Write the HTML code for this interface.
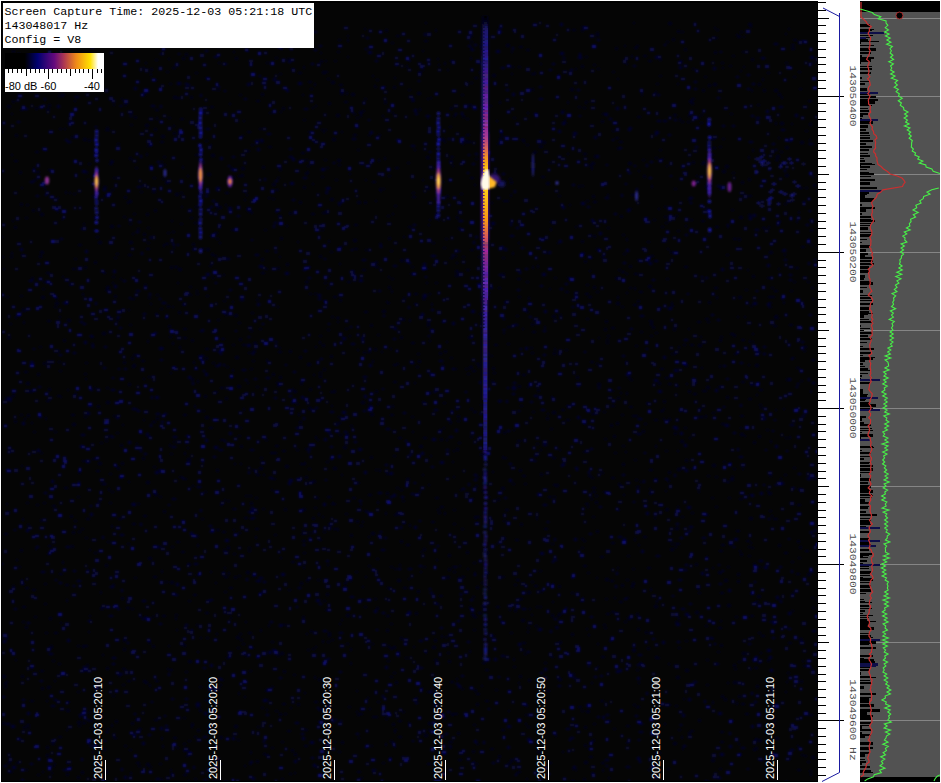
<!DOCTYPE html><html><head><meta charset="utf-8"><style>
html,body{margin:0;padding:0;width:941px;height:783px;overflow:hidden;background:#fff;position:relative}
.mono{font-family:"Liberation Mono",monospace}
.sans{font-family:"Liberation Sans",sans-serif}
</style></head><body>
<svg width="941" height="783" viewBox="0 0 941 783" style="position:absolute;left:0;top:0"><defs>
<filter id="nb" x="0" y="0" width="100%" height="100%"><feGaussianBlur stdDeviation="0.9"/></filter>
<filter id="b05" x="-50%" y="-50%" width="200%" height="200%"><feGaussianBlur stdDeviation="0.6"/></filter>
<filter id="b1" x="-50%" y="-50%" width="200%" height="200%"><feGaussianBlur stdDeviation="1"/></filter>
<filter id="b2" x="-50%" y="-50%" width="200%" height="200%"><feGaussianBlur stdDeviation="1.6"/></filter>
<linearGradient id="cbar" x1="0" x2="1" y1="0" y2="0">
<stop offset="0" stop-color="#000000"/>
<stop offset="0.2" stop-color="#000000"/>
<stop offset="0.33" stop-color="#000070"/>
<stop offset="0.5" stop-color="#650a7d"/>
<stop offset="0.6" stop-color="#b03a50"/>
<stop offset="0.72" stop-color="#f08a18"/>
<stop offset="0.86" stop-color="#ffe000"/>
<stop offset="0.94" stop-color="#ffffff"/>
<stop offset="1" stop-color="#ffffff"/>
</linearGradient>
<clipPath id="spc"><rect x="2" y="3" width="815" height="778"/></clipPath>
</defs><rect x="0" y="0" width="941" height="783" fill="#ffffff"/><rect x="1" y="1" width="817" height="781" fill="#000"/><rect x="2" y="3" width="815" height="778" fill="#050505"/><g clip-path="url(#spc)"><g filter="url(#nb)"><path fill="#04041e" d="M521 619h4v3h-4zM629 208h3v2h-3zM16 559h2v2h-2zM248 632h4v2h-4zM302 529h2v2h-2zM671 302h2v3h-2zM298 413h2v3h-2zM1 236h2v2h-2zM385 743h2v3h-2zM90 336h4v2h-4zM477 516h3v2h-3zM660 410h4v2h-4zM216 209h2v2h-2zM337 321h2v2h-2zM496 606h4v2h-4zM643 175h3v3h-3zM256 760h3v3h-3zM107 129h3v2h-3zM758 739h4v3h-4zM422 474h2v2h-2zM320 52h2v2h-2zM69 766h3v2h-3zM755 738h3v2h-3zM679 409h2v3h-2zM74 100h2v2h-2zM427 763h4v2h-4zM474 572h2v2h-2zM12 394h3v3h-3zM248 352h3v2h-3zM640 481h2v2h-2zM701 220h4v2h-4zM183 749h4v3h-4zM732 55h3v2h-3zM740 415h4v2h-4zM658 752h3v2h-3zM736 34h2v2h-2zM593 723h3v2h-3zM540 590h3v3h-3zM527 591h4v3h-4zM6 637h2v3h-2zM96 725h4v2h-4zM414 293h4v2h-4zM325 129h2v2h-2zM199 177h3v2h-3zM741 381h4v2h-4zM136 762h4v2h-4zM195 206h3v2h-3zM290 707h2v2h-2zM698 491h2v2h-2zM216 633h2v2h-2zM200 637h2v2h-2zM784 203h3v2h-3zM655 656h3v3h-3zM307 363h4v3h-4zM187 563h4v3h-4zM219 736h4v3h-4zM385 29h3v3h-3zM456 678h2v2h-2zM773 718h3v3h-3zM47 553h4v2h-4zM428 484h2v2h-2zM541 176h4v2h-4zM752 149h2v3h-2zM286 263h3v3h-3zM228 572h2v3h-2zM165 581h3v2h-3zM491 380h3v2h-3zM435 282h3v2h-3zM147 242h3v2h-3zM748 546h3v2h-3zM757 595h4v3h-4zM227 546h3v3h-3zM596 577h2v2h-2zM665 450h3v2h-3zM784 552h4v2h-4zM371 745h2v2h-2zM431 167h3v3h-3zM385 718h3v2h-3zM436 559h2v2h-2zM316 766h3v2h-3zM64 487h4v2h-4zM321 129h3v2h-3zM161 347h3v3h-3zM760 652h2v2h-2zM586 200h3v2h-3zM85 378h2v2h-2zM711 497h3v2h-3zM319 341h2v3h-2zM77 721h4v3h-4zM194 222h2v2h-2zM392 112h2v2h-2zM233 51h2v2h-2zM417 92h4v3h-4zM143 680h3v3h-3zM396 512h4v3h-4zM16 762h3v2h-3zM194 368h4v2h-4zM571 404h3v2h-3zM306 579h3v3h-3zM94 387h2v2h-2zM748 156h2v3h-2zM702 390h3v2h-3zM33 431h3v2h-3zM533 152h3v2h-3zM510 632h3v2h-3zM121 597h3v3h-3zM386 629h3v3h-3zM72 268h4v2h-4zM533 151h4v2h-4zM407 162h3v2h-3zM333 528h4v2h-4zM648 259h2v3h-2zM186 755h3v2h-3zM232 301h2v2h-2zM47 25h3v2h-3zM583 107h3v2h-3zM473 616h4v2h-4zM799 187h4v2h-4zM811 756h4v3h-4zM460 202h2v3h-2zM150 73h2v3h-2zM261 272h4v2h-4zM403 587h4v2h-4zM346 643h3v2h-3zM403 236h2v2h-2zM429 373h3v2h-3zM209 427h4v2h-4zM210 571h2v2h-2zM708 301h3v3h-3zM20 549h3v3h-3zM106 387h3v2h-3zM527 627h3v2h-3zM724 579h4v3h-4zM730 478h4v3h-4zM365 249h3v2h-3zM626 238h2v3h-2zM803 665h4v2h-4zM402 522h4v2h-4zM682 747h2v3h-2zM24 418h2v2h-2zM279 73h3v2h-3zM37 373h3v3h-3zM620 215h3v3h-3zM213 730h3v2h-3zM165 181h4v3h-4zM333 741h3v2h-3zM353 277h4v2h-4zM734 668h3v2h-3zM129 223h3v2h-3zM711 154h3v2h-3zM143 67h2v2h-2zM199 310h2v2h-2zM383 86h3v2h-3zM444 141h2v2h-2zM580 600h4v2h-4zM330 251h3v2h-3zM345 513h3v2h-3zM743 66h2v2h-2zM25 587h4v2h-4zM591 162h4v3h-4zM654 478h3v2h-3zM219 777h2v3h-2zM134 577h3v2h-3zM356 126h3v2h-3zM187 459h4v3h-4zM54 431h3v2h-3zM179 346h2v3h-2zM632 649h4v3h-4zM56 350h4v2h-4zM481 582h3v2h-3zM114 257h3v2h-3zM107 541h3v2h-3zM358 482h2v2h-2zM201 518h3v2h-3zM375 200h2v2h-2zM225 313h3v3h-3zM685 459h3v3h-3zM595 495h3v2h-3zM789 436h2v3h-2zM273 452h4v2h-4zM121 309h3v2h-3zM656 83h3v2h-3zM678 729h3v2h-3zM422 401h3v2h-3zM431 303h2v3h-2zM810 390h2v3h-2zM476 535h2v2h-2zM555 735h2v2h-2zM474 689h3v3h-3zM480 177h3v2h-3zM362 269h4v2h-4zM108 488h2v3h-2zM11 252h2v3h-2zM755 747h3v3h-3zM634 47h4v2h-4zM427 324h3v3h-3zM513 117h3v2h-3zM758 632h3v2h-3zM440 506h4v2h-4zM462 137h2v2h-2zM10 400h2v2h-2zM705 625h3v2h-3zM613 728h3v2h-3zM624 621h3v2h-3zM96 236h3v2h-3zM663 400h3v3h-3zM697 117h3v2h-3zM337 51h3v2h-3zM658 307h4v2h-4zM405 657h3v2h-3zM655 752h3v3h-3zM641 94h2v2h-2zM702 161h4v3h-4zM122 424h2v2h-2zM100 442h3v2h-3zM603 491h3v2h-3zM721 423h4v2h-4zM648 285h4v3h-4zM250 751h2v3h-2zM499 138h2v3h-2zM361 599h4v2h-4zM333 390h3v3h-3zM745 289h3v2h-3zM259 592h4v2h-4zM280 47h3v3h-3zM156 417h3v3h-3zM807 573h4v3h-4zM377 334h3v2h-3zM683 698h2v2h-2zM540 713h3v3h-3zM143 515h4v2h-4zM571 592h3v2h-3zM89 549h2v2h-2zM238 435h3v2h-3zM49 617h3v3h-3zM180 223h3v2h-3zM536 606h2v2h-2zM319 255h3v3h-3zM686 383h2v2h-2zM810 229h3v3h-3zM608 777h2v2h-2zM511 51h2v2h-2zM163 164h3v2h-3zM232 344h3v2h-3zM382 762h3v2h-3zM315 346h2v2h-2zM269 112h3v2h-3zM40 213h4v3h-4zM54 306h3v2h-3zM26 204h3v2h-3zM43 362h3v3h-3zM741 339h4v2h-4zM719 365h2v3h-2zM147 45h4v2h-4zM409 60h2v2h-2zM362 586h2v2h-2zM494 173h3v2h-3zM67 701h3v2h-3zM400 336h3v3h-3zM638 682h2v2h-2zM394 746h2v2h-2zM512 252h2v3h-2zM708 209h3v3h-3zM791 123h2v2h-2zM793 76h3v2h-3zM536 517h2v3h-2zM205 612h4v2h-4zM408 89h3v2h-3zM786 681h2v2h-2zM585 503h4v2h-4zM123 361h3v3h-3zM446 341h2v2h-2zM77 776h3v3h-3zM218 687h2v3h-2zM601 762h4v2h-4zM629 406h4v2h-4zM202 462h2v2h-2zM668 418h3v3h-3zM698 592h3v2h-3zM140 616h2v2h-2zM776 598h4v2h-4zM390 740h3v3h-3zM551 543h3v2h-3zM674 432h3v3h-3zM626 273h2v2h-2zM22 518h2v3h-2zM299 356h3v3h-3zM719 339h3v3h-3zM518 385h3v3h-3zM635 345h3v2h-3zM232 508h3v2h-3zM736 702h2v3h-2zM557 615h3v2h-3zM547 413h2v2h-2zM479 313h2v2h-2zM256 386h3v2h-3zM268 33h3v2h-3zM607 194h2v2h-2zM736 530h4v2h-4zM23 321h2v3h-2zM514 584h3v2h-3zM647 647h3v3h-3zM189 286h3v2h-3zM59 370h3v2h-3zM733 681h4v3h-4zM691 102h3v3h-3zM243 408h2v3h-2zM328 523h4v2h-4zM603 411h3v2h-3zM120 46h3v3h-3zM338 416h3v2h-3zM35 151h4v2h-4zM447 652h3v2h-3zM740 70h2v2h-2zM663 408h2v2h-2zM116 253h3v2h-3zM115 465h3v2h-3zM6 503h2v2h-2zM42 288h3v2h-3zM495 689h3v2h-3zM331 639h3v2h-3zM684 48h3v3h-3zM711 638h3v2h-3zM2 722h3v3h-3zM326 593h3v3h-3zM60 396h2v2h-2zM357 149h3v2h-3zM553 352h3v3h-3zM435 497h4v2h-4zM375 716h3v2h-3zM83 138h4v3h-4zM583 451h3v2h-3zM456 683h3v2h-3zM219 763h3v2h-3zM146 153h2v3h-2zM341 474h2v2h-2zM112 584h3v2h-3zM507 326h4v2h-4zM469 650h2v3h-2zM204 395h3v3h-3zM621 271h4v2h-4zM127 680h4v2h-4zM323 600h3v2h-3zM544 662h3v2h-3zM430 97h2v2h-2zM350 662h2v3h-2zM325 609h3v2h-3zM149 781h3v2h-3zM117 467h3v3h-3zM343 446h4v2h-4zM217 89h3v2h-3zM43 281h4v2h-4zM219 684h3v2h-3zM677 468h4v3h-4zM214 679h3v2h-3zM362 110h3v2h-3zM715 166h4v3h-4zM230 377h3v2h-3zM378 134h3v2h-3zM181 206h2v2h-2zM784 254h2v2h-2zM194 405h2v3h-2zM306 633h2v2h-2zM698 344h4v3h-4zM35 69h3v2h-3zM422 269h3v2h-3zM233 529h2v2h-2zM552 315h4v3h-4zM277 655h3v2h-3zM161 135h4v3h-4zM807 761h3v2h-3zM487 153h3v3h-3zM754 667h4v2h-4zM453 509h3v2h-3zM243 120h2v2h-2zM595 501h3v3h-3zM655 157h3v2h-3zM762 78h2v3h-2zM749 517h4v3h-4zM205 699h4v2h-4zM315 646h2v2h-2zM655 91h2v3h-2zM375 390h3v3h-3zM12 585h3v2h-3zM584 422h2v3h-2zM100 607h4v3h-4zM544 326h2v3h-2zM759 404h3v2h-3zM98 241h4v3h-4zM525 723h2v2h-2zM791 610h3v2h-3zM705 318h4v2h-4zM279 256h2v2h-2zM719 146h3v2h-3zM69 192h2v2h-2zM368 565h3v2h-3zM102 775h2v2h-2zM558 585h3v3h-3zM542 141h4v3h-4zM400 259h4v3h-4zM483 103h4v2h-4zM118 675h3v2h-3zM25 626h3v3h-3zM312 480h4v3h-4zM354 224h4v2h-4zM450 156h4v2h-4zM632 582h3v3h-3zM583 565h4v2h-4zM69 283h3v3h-3zM210 235h2v2h-2zM352 270h3v3h-3zM778 220h3v3h-3zM816 680h2v2h-2zM597 643h2v2h-2zM196 706h4v2h-4zM619 601h4v2h-4zM121 462h3v3h-3zM621 584h3v3h-3zM590 468h2v2h-2zM22 606h4v2h-4zM183 644h3v3h-3zM286 225h2v2h-2zM537 751h4v2h-4zM628 162h4v3h-4zM706 556h2v3h-2zM307 649h3v2h-3zM737 580h3v3h-3zM450 107h3v3h-3zM574 293h2v2h-2zM524 653h3v2h-3zM581 547h3v2h-3zM667 480h3v2h-3zM379 469h2v3h-2zM614 452h3v2h-3zM244 517h4v2h-4zM454 255h3v2h-3zM449 421h3v3h-3zM199 112h2v2h-2zM21 187h2v2h-2zM438 512h3v2h-3zM771 515h2v2h-2zM629 265h3v3h-3zM408 722h2v3h-2zM113 104h2v2h-2zM85 537h3v2h-3zM788 28h2v2h-2zM7 511h3v2h-3zM750 615h4v2h-4zM131 43h3v2h-3zM462 256h3v2h-3zM535 207h3v2h-3zM473 562h3v2h-3zM246 194h2v2h-2zM327 496h4v2h-4zM275 445h4v2h-4zM79 715h2v3h-2zM97 405h3v3h-3zM389 757h3v3h-3zM300 582h3v3h-3zM565 291h4v2h-4zM478 62h4v2h-4zM767 277h4v2h-4zM444 717h2v3h-2zM113 177h3v2h-3zM252 360h3v2h-3zM271 747h3v2h-3zM374 598h3v2h-3zM773 518h4v2h-4zM683 344h3v2h-3zM591 477h3v2h-3zM357 349h2v2h-2zM52 660h3v2h-3zM187 447h2v2h-2zM503 181h3v2h-3zM695 563h3v3h-3zM402 496h2v3h-2zM502 456h2v3h-2zM788 642h4v2h-4zM406 478h4v2h-4zM172 342h2v3h-2zM188 780h2v3h-2zM769 510h3v2h-3zM37 774h3v2h-3zM275 180h2v2h-2zM449 160h4v2h-4zM791 47h4v3h-4zM372 770h2v2h-2zM447 69h2v2h-2zM229 587h4v2h-4zM622 463h3v3h-3zM518 771h3v2h-3zM642 159h3v2h-3zM390 348h2v2h-2zM81 771h3v3h-3zM791 561h3v2h-3zM176 629h2v2h-2zM443 427h2v2h-2zM778 137h2v2h-2zM432 242h3v2h-3zM434 659h4v2h-4zM396 487h3v2h-3zM324 159h3v2h-3zM598 337h2v2h-2zM611 477h4v2h-4zM643 55h4v2h-4zM240 427h2v2h-2zM150 303h2v2h-2zM393 455h3v2h-3zM250 509h4v3h-4zM494 344h4v2h-4zM512 483h3v2h-3zM430 455h2v2h-2zM376 558h3v2h-3zM514 609h3v3h-3zM739 498h4v2h-4zM643 536h4v2h-4zM39 255h3v3h-3zM59 316h2v2h-2zM301 533h3v2h-3zM104 195h3v2h-3zM153 79h4v2h-4zM127 543h3v2h-3zM504 537h2v3h-2zM153 576h4v2h-4zM63 339h3v3h-3zM175 617h2v3h-2zM414 149h2v2h-2zM756 394h2v2h-2zM227 500h3v2h-3zM458 759h4v2h-4zM259 128h3v2h-3zM11 154h2v2h-2zM581 538h3v2h-3zM18 75h3v2h-3zM439 352h3v3h-3zM327 78h3v2h-3zM308 468h3v2h-3zM129 749h3v2h-3zM537 265h2v3h-2zM387 587h4v2h-4zM558 195h3v2h-3zM418 71h4v3h-4zM382 115h2v2h-2zM550 228h2v3h-2zM82 722h4v2h-4zM747 269h2v2h-2zM265 689h3v3h-3zM103 186h4v3h-4zM244 765h2v2h-2zM718 386h4v2h-4zM551 656h3v2h-3zM468 141h4v2h-4zM224 567h2v2h-2zM207 21h3v2h-3zM39 44h3v2h-3zM104 30h3v2h-3zM191 378h3v3h-3zM633 647h2v2h-2zM474 184h2v2h-2zM24 371h4v2h-4zM676 676h4v3h-4zM698 416h3v2h-3zM516 315h3v2h-3zM86 518h4v2h-4zM476 522h3v3h-3zM232 369h2v3h-2zM78 471h3v3h-3zM196 574h4v2h-4zM571 780h4v3h-4zM492 471h2v2h-2zM299 201h3v3h-3zM499 101h2v3h-2zM352 497h4v2h-4zM593 64h3v2h-3zM252 350h4v3h-4zM379 243h3v2h-3zM128 481h2v2h-2zM678 617h2v3h-2zM30 700h4v2h-4zM308 407h4v3h-4zM796 573h4v2h-4zM204 491h3v2h-3zM274 534h3v2h-3zM628 376h3v3h-3zM753 563h3v3h-3zM339 299h3v3h-3zM664 206h2v2h-2zM534 455h4v2h-4zM469 35h4v2h-4zM781 96h2v3h-2zM742 51h2v2h-2zM539 570h3v2h-3zM785 691h2v2h-2zM750 26h2v2h-2zM154 128h3v3h-3zM543 237h3v3h-3zM549 288h2v2h-2zM809 219h4v2h-4zM458 577h2v2h-2zM207 173h4v3h-4zM391 290h2v3h-2zM220 439h4v2h-4zM57 675h4v2h-4zM704 76h3v2h-3zM626 392h2v3h-2zM470 408h3v2h-3zM752 275h3v3h-3zM105 772h3v2h-3zM182 166h2v3h-2zM596 291h3v2h-3zM296 403h3v2h-3zM390 250h3v2h-3zM666 278h3v2h-3zM289 773h3v2h-3zM170 266h3v3h-3zM329 777h2v2h-2zM551 614h3v3h-3zM299 491h3v2h-3zM615 277h3v3h-3zM585 101h3v2h-3zM337 422h4v2h-4zM168 58h2v2h-2zM532 411h3v2h-3zM237 647h3v2h-3zM518 242h2v2h-2zM88 163h3v2h-3zM304 745h4v2h-4zM262 508h3v2h-3zM171 220h2v2h-2zM688 390h3v3h-3zM797 504h4v2h-4zM270 452h3v2h-3zM182 57h3v3h-3zM323 300h3v2h-3zM767 659h3v3h-3zM180 118h4v2h-4zM550 221h3v2h-3zM647 241h3v2h-3zM539 606h3v2h-3zM774 89h4v3h-4zM798 41h4v3h-4zM216 529h4v2h-4zM100 591h2v3h-2zM768 492h4v3h-4zM410 273h3v2h-3zM275 189h4v2h-4zM446 195h3v3h-3zM78 725h3v2h-3zM726 254h3v2h-3zM263 753h3v2h-3zM114 295h3v3h-3zM169 444h2v3h-2zM338 164h3v2h-3zM235 57h3v3h-3zM242 643h3v2h-3zM21 465h2v2h-2zM322 640h2v3h-2zM722 170h4v3h-4zM66 762h3v2h-3zM456 262h2v2h-2zM67 389h2v2h-2zM803 346h4v2h-4zM715 226h4v2h-4zM486 292h4v2h-4zM240 639h3v2h-3zM390 676h3v2h-3zM478 256h3v2h-3zM163 156h3v2h-3zM540 131h2v2h-2zM146 481h4v3h-4zM111 525h2v3h-2zM504 457h3v2h-3zM47 686h4v2h-4zM364 28h2v2h-2zM71 136h3v3h-3zM302 540h4v2h-4zM64 781h2v2h-2zM109 502h3v2h-3zM552 457h4v2h-4zM377 501h2v3h-2zM248 210h3v3h-3zM279 376h3v3h-3zM46 400h4v2h-4zM677 83h2v2h-2zM706 386h4v3h-4zM532 168h3v2h-3zM670 251h3v3h-3zM242 344h4v2h-4zM1 256h3v2h-3zM666 41h3v2h-3zM665 377h4v2h-4zM390 414h4v2h-4zM721 62h3v2h-3zM742 468h2v2h-2zM727 682h2v2h-2zM124 104h3v2h-3zM223 274h2v2h-2zM676 385h3v2h-3zM97 682h2v2h-2zM322 71h4v3h-4zM252 469h2v2h-2zM297 241h2v2h-2zM465 368h3v2h-3zM707 321h3v2h-3zM74 520h3v2h-3zM750 592h3v3h-3zM27 727h3v2h-3zM675 705h3v2h-3zM546 182h4v3h-4zM573 673h2v3h-2zM803 350h3v2h-3zM731 209h3v2h-3zM498 28h4v2h-4zM616 302h4v3h-4zM553 496h3v2h-3zM554 348h2v3h-2zM22 310h4v2h-4zM581 65h3v3h-3zM25 59h4v2h-4zM147 227h3v2h-3zM466 134h4v2h-4zM84 266h3v3h-3zM478 612h4v2h-4zM195 72h3v2h-3zM626 597h3v2h-3zM558 74h2v3h-2zM297 703h3v3h-3zM609 640h3v2h-3zM582 597h2v2h-2zM229 103h2v2h-2zM597 666h2v2h-2zM590 234h2v2h-2zM768 306h4v2h-4zM43 502h3v2h-3zM800 380h3v2h-3zM786 378h4v3h-4zM81 528h3v2h-3zM372 360h2v3h-2zM751 547h3v2h-3zM409 524h2v3h-2zM448 568h3v3h-3zM738 296h4v3h-4zM604 328h3v3h-3zM360 777h3v2h-3zM391 278h3v2h-3zM793 281h3v2h-3zM685 669h4v3h-4zM62 561h2v3h-2zM552 583h2v2h-2zM129 241h4v3h-4zM388 286h3v3h-3zM327 187h4v2h-4zM188 660h4v3h-4zM652 326h3v3h-3zM589 270h2v2h-2zM398 720h4v2h-4zM132 365h3v3h-3zM775 703h3v2h-3zM596 35h3v2h-3zM196 290h2v2h-2zM440 438h3v3h-3zM673 742h4v3h-4zM719 768h3v2h-3zM321 229h3v2h-3zM197 544h2v3h-2zM237 739h3v2h-3zM345 328h3v2h-3zM303 186h3v3h-3zM98 501h3v2h-3zM326 167h3v2h-3zM393 86h3v3h-3zM584 744h3v3h-3zM592 739h3v3h-3zM395 681h3v3h-3zM457 732h3v3h-3zM629 287h3v2h-3zM105 440h3v2h-3zM506 200h3v2h-3zM428 722h4v3h-4zM234 725h4v3h-4zM605 578h4v3h-4zM235 356h4v3h-4zM176 97h4v2h-4zM121 400h3v2h-3zM785 174h4v3h-4zM693 393h4v2h-4zM472 750h3v3h-3zM531 352h3v2h-3zM697 587h3v3h-3zM585 102h2v2h-2zM673 114h4v2h-4zM750 305h3v2h-3zM61 94h3v3h-3zM378 159h2v3h-2zM654 605h4v3h-4zM576 376h3v3h-3zM645 217h3v2h-3zM776 705h3v2h-3zM144 616h3v3h-3zM670 548h4v3h-4zM248 550h3v2h-3zM256 474h4v2h-4zM496 543h2v2h-2zM546 417h3v3h-3zM359 713h4v2h-4zM152 421h4v2h-4zM538 140h4v2h-4zM491 635h4v2h-4zM386 473h4v2h-4zM513 666h3v2h-3zM411 416h3v2h-3zM688 328h2v2h-2zM444 512h2v3h-2zM434 639h3v3h-3zM700 122h3v2h-3zM371 532h4v3h-4zM527 112h2v2h-2zM718 627h4v2h-4zM364 510h2v2h-2zM188 600h3v2h-3zM437 509h3v2h-3zM656 600h2v3h-2zM441 635h2v3h-2zM163 244h2v3h-2zM733 468h3v2h-3zM439 429h3v3h-3zM265 268h3v2h-3zM374 86h3v2h-3zM798 71h3v2h-3zM567 153h2v2h-2zM775 518h3v2h-3zM450 257h4v2h-4zM106 667h3v3h-3zM210 106h4v2h-4zM392 213h2v2h-2zM785 437h3v2h-3zM677 543h3v2h-3zM214 232h4v2h-4zM60 622h2v2h-2zM55 302h4v3h-4zM414 382h2v2h-2zM372 716h3v2h-3zM518 682h2v2h-2zM251 211h2v3h-2zM476 743h3v2h-3zM90 47h3v2h-3zM470 249h4v2h-4zM322 212h2v2h-2zM586 628h2v2h-2zM473 724h3v2h-3zM276 423h3v3h-3zM2 675h4v3h-4zM12 100h3v3h-3zM588 296h4v2h-4zM546 690h4v2h-4zM161 737h2v3h-2zM184 452h2v3h-2zM388 175h3v2h-3zM277 177h3v2h-3zM740 553h3v3h-3zM630 379h3v2h-3zM386 615h4v2h-4zM527 631h2v2h-2zM473 629h3v2h-3zM748 364h2v2h-2zM526 311h3v2h-3zM308 81h4v2h-4zM361 163h3v2h-3zM312 648h3v2h-3zM150 68h3v3h-3zM40 251h4v3h-4zM438 218h2v3h-2zM502 257h3v2h-3zM757 104h3v2h-3zM722 67h2v2h-2zM96 470h4v2h-4zM486 658h4v2h-4zM714 51h3v3h-3zM799 546h3v3h-3zM470 177h4v2h-4zM621 306h3v2h-3zM737 35h4v3h-4zM317 439h2v2h-2zM748 398h4v2h-4zM469 366h4v3h-4zM480 233h2v2h-2zM419 445h4v3h-4zM749 215h3v2h-3zM250 518h3v2h-3zM276 382h3v2h-3zM526 309h2v2h-2zM427 98h2v2h-2zM651 715h3v3h-3zM611 542h4v2h-4zM190 96h3v3h-3zM787 672h3v2h-3zM453 450h2v2h-2zM37 64h3v3h-3zM559 449h2v2h-2zM667 704h4v2h-4zM758 83h3v3h-3zM415 697h3v3h-3zM712 464h4v3h-4zM784 474h3v2h-3zM649 320h4v2h-4zM617 567h2v2h-2zM420 687h3v3h-3zM372 75h2v2h-2zM82 460h4v2h-4zM752 333h2v2h-2zM490 355h3v2h-3zM675 527h4v3h-4zM472 370h4v2h-4zM617 296h2v3h-2zM446 576h4v3h-4zM685 225h2v2h-2zM183 414h4v2h-4zM82 645h3v3h-3zM678 346h2v3h-2zM113 415h3v2h-3zM456 216h3v3h-3zM86 664h3v3h-3zM331 405h2v2h-2zM260 43h4v3h-4zM793 39h4v2h-4zM324 71h4v2h-4zM15 659h2v2h-2zM468 104h4v3h-4zM6 681h2v2h-2zM190 217h3v2h-3zM177 282h2v2h-2zM453 476h2v2h-2zM791 44h4v2h-4zM588 748h3v2h-3zM569 204h2v2h-2zM14 226h3v3h-3zM377 403h2v2h-2zM171 546h3v2h-3zM354 248h4v2h-4zM365 576h2v2h-2zM537 389h3v3h-3zM384 157h2v3h-2zM349 335h2v2h-2zM22 621h3v2h-3zM706 659h3v2h-3zM604 438h3v2h-3zM520 405h3v2h-3zM668 383h4v2h-4zM17 53h4v2h-4zM223 300h3v2h-3zM110 225h4v3h-4zM701 163h3v2h-3zM265 439h3v2h-3zM36 504h3v2h-3zM585 56h3v2h-3zM340 92h4v3h-4zM331 503h3v2h-3zM360 708h3v2h-3zM775 409h2v2h-2zM797 745h2v2h-2zM309 532h3v2h-3zM364 606h3v2h-3zM397 579h4v3h-4zM238 175h3v2h-3zM59 128h3v2h-3zM601 120h3v3h-3zM677 30h3v3h-3zM810 244h3v2h-3zM811 597h3v2h-3zM631 194h4v2h-4zM452 165h2v2h-2zM723 461h3v2h-3zM46 108h4v2h-4zM57 211h2v2h-2zM394 205h3v2h-3zM596 530h3v3h-3zM428 224h2v2h-2zM415 612h3v3h-3zM300 583h2v2h-2zM450 357h3v2h-3zM475 485h3v2h-3zM268 197h3v2h-3zM727 604h4v3h-4zM131 298h4v2h-4zM651 321h2v2h-2zM588 475h4v2h-4zM796 220h2v3h-2zM424 268h4v2h-4zM51 743h4v2h-4zM308 131h3v2h-3zM50 497h3v2h-3zM192 485h2v2h-2zM583 540h3v2h-3zM277 306h2v2h-2zM347 39h2v3h-2zM623 494h2v2h-2zM480 45h3v3h-3zM119 476h4v3h-4zM46 700h2v2h-2zM681 736h2v3h-2zM109 163h4v2h-4zM172 67h4v2h-4zM356 711h2v2h-2zM561 110h4v2h-4zM387 215h3v2h-3zM146 763h4v3h-4zM511 66h3v2h-3zM445 636h3v2h-3zM335 179h3v2h-3zM365 179h2v2h-2zM231 229h4v2h-4zM795 267h4v2h-4zM145 62h2v2h-2zM304 729h4v2h-4zM480 453h3v3h-3zM737 316h2v2h-2zM105 289h3v2h-3zM650 588h2v3h-2zM561 409h4v2h-4zM612 130h3v2h-3zM750 668h2v2h-2zM325 192h3v2h-3zM395 167h4v2h-4zM280 557h2v2h-2zM105 564h3v3h-3zM333 503h3v2h-3zM334 60h3v2h-3zM428 392h4v2h-4zM301 152h4v2h-4zM305 448h4v2h-4zM812 669h2v2h-2zM523 374h3v2h-3zM368 404h4v2h-4zM42 771h2v2h-2zM250 368h3v2h-3zM147 145h4v2h-4zM611 611h4v2h-4zM14 420h3v3h-3zM526 144h3v2h-3zM33 179h4v2h-4zM130 49h4v2h-4zM252 575h4v2h-4zM313 374h2v2h-2zM474 77h4v2h-4zM101 483h4v2h-4zM812 176h2v2h-2zM690 219h3v2h-3zM714 27h2v2h-2zM720 336h3v2h-3zM679 60h4v3h-4zM757 382h3v2h-3zM305 281h4v2h-4zM271 686h3v2h-3zM210 144h2v2h-2zM133 364h3v3h-3zM486 227h4v2h-4zM20 414h3v2h-3zM735 616h3v2h-3zM283 670h3v3h-3zM80 33h4v2h-4zM358 737h2v2h-2zM596 363h3v2h-3zM255 528h4v2h-4zM294 753h3v3h-3zM618 269h3v2h-3zM350 534h3v3h-3zM309 293h3v2h-3zM698 719h3v3h-3zM111 491h3v2h-3zM315 436h2v3h-2zM432 646h4v3h-4zM17 315h4v2h-4zM540 473h3v3h-3zM506 44h4v3h-4zM336 317h4v2h-4zM505 509h4v2h-4zM413 646h2v2h-2zM590 498h3v2h-3zM530 347h3v2h-3zM425 22h2v2h-2zM435 29h2v3h-2zM797 540h3v3h-3zM89 615h2v2h-2zM376 607h3v3h-3zM148 297h3v2h-3zM660 368h4v2h-4zM439 595h4v2h-4zM92 458h4v2h-4zM655 332h3v2h-3zM371 643h3v2h-3zM402 318h3v2h-3zM206 637h3v2h-3zM532 266h2v3h-2zM691 512h3v2h-3zM88 742h2v3h-2zM767 72h3v2h-3zM45 417h2v3h-2zM496 120h2v2h-2zM260 140h4v3h-4zM634 459h3v2h-3zM165 243h4v2h-4zM536 443h3v2h-3zM704 390h3v2h-3zM535 625h3v2h-3zM145 124h4v3h-4zM453 523h3v2h-3zM300 463h4v2h-4zM109 473h3v2h-3zM268 146h4v2h-4zM323 531h3v2h-3zM601 472h3v2h-3zM143 233h3v3h-3zM508 690h3v2h-3zM649 492h3v3h-3zM255 536h2v3h-2zM74 258h3v2h-3zM130 772h2v3h-2zM245 621h2v2h-2zM222 531h4v2h-4zM21 675h3v3h-3zM393 430h3v3h-3zM40 670h4v2h-4zM356 690h2v2h-2zM501 729h4v2h-4zM729 544h3v2h-3zM394 514h4v2h-4zM634 415h4v2h-4zM772 723h4v2h-4zM406 544h4v2h-4zM61 218h3v2h-3zM466 551h3v3h-3zM106 286h4v3h-4zM720 620h2v2h-2zM282 450h4v2h-4zM752 341h2v2h-2zM516 579h4v2h-4zM671 543h3v2h-3zM183 774h4v2h-4zM313 141h4v2h-4zM810 773h2v3h-2zM700 461h4v2h-4zM552 601h2v2h-2zM250 502h3v3h-3zM305 483h3v2h-3zM275 211h3v2h-3zM626 725h4v2h-4zM774 316h4v3h-4zM769 302h3v2h-3zM392 723h3v3h-3zM374 85h2v3h-2zM154 719h4v2h-4zM193 361h2v3h-2zM303 566h2v3h-2zM112 282h2v2h-2zM293 390h4v3h-4zM558 353h3v2h-3zM341 619h2v2h-2zM162 745h2v3h-2zM533 319h2v2h-2zM597 383h4v3h-4zM397 651h3v3h-3zM750 542h2v2h-2zM732 720h2v2h-2zM755 364h4v3h-4zM116 432h3v2h-3zM321 701h2v3h-2zM152 191h4v2h-4zM369 708h2v2h-2zM251 312h3v2h-3zM129 324h3v2h-3zM393 364h4v2h-4zM265 754h4v2h-4zM744 435h2v2h-2zM143 419h2v2h-2zM303 66h2v3h-2zM601 256h4v2h-4zM368 134h3v2h-3zM4 682h3v3h-3zM606 613h4v2h-4zM344 582h3v3h-3zM46 754h3v3h-3zM471 613h4v3h-4zM501 576h4v2h-4zM58 89h4v3h-4zM571 633h3v3h-3zM770 440h2v3h-2zM414 303h2v2h-2zM619 141h4v2h-4zM390 647h3v3h-3zM349 173h2v2h-2zM720 731h4v2h-4zM153 466h3v2h-3zM805 130h3v2h-3zM664 723h2v2h-2zM721 695h3v3h-3zM685 640h3v2h-3zM807 281h3v2h-3zM50 647h3v2h-3zM159 763h3v2h-3zM497 498h3v3h-3zM46 746h3v3h-3zM741 703h4v2h-4zM483 654h2v2h-2zM443 247h3v2h-3zM110 160h4v3h-4zM604 627h3v2h-3zM197 702h2v2h-2zM792 592h2v3h-2zM758 435h3v3h-3zM692 68h3v2h-3zM241 174h3v3h-3zM278 351h4v2h-4zM800 141h4v3h-4zM87 569h2v3h-2zM88 631h2v2h-2zM607 227h3v2h-3zM460 193h3v2h-3zM523 649h2v2h-2zM479 71h2v3h-2zM298 72h4v2h-4zM312 517h3v3h-3zM649 488h2v2h-2zM442 364h2v2h-2zM257 726h3v2h-3zM748 23h4v3h-4zM375 469h3v2h-3zM135 167h3v2h-3zM98 462h4v3h-4zM277 384h3v3h-3zM62 276h2v2h-2zM327 329h3v2h-3zM757 351h4v2h-4zM554 277h3v2h-3zM423 437h4v2h-4zM327 641h3v2h-3zM734 353h4v2h-4zM796 367h4v2h-4zM388 237h3v3h-3zM353 239h4v3h-4zM12 220h2v2h-2zM211 154h4v3h-4zM426 156h4v3h-4zM262 166h3v3h-3zM360 114h2v3h-2zM531 323h3v3h-3zM108 435h4v2h-4zM238 692h2v3h-2zM195 154h4v2h-4zM330 198h4v3h-4zM810 571h4v2h-4zM583 153h4v2h-4zM65 191h2v3h-2zM809 123h3v3h-3zM607 335h3v2h-3zM694 401h3v2h-3zM321 176h3v2h-3zM194 736h3v2h-3zM623 253h3v2h-3zM343 447h4v2h-4zM163 510h3v3h-3zM593 235h3v3h-3zM572 29h4v2h-4zM473 761h2v3h-2zM622 234h3v2h-3zM123 648h3v3h-3zM626 63h2v2h-2zM611 390h3v2h-3zM738 743h2v2h-2zM592 487h4v2h-4zM531 73h3v2h-3zM93 89h2v2h-2zM809 770h3v2h-3zM239 338h3v3h-3zM557 242h2v2h-2zM540 712h3v2h-3zM357 771h4v2h-4zM22 308h2v3h-2zM230 617h2v2h-2zM266 359h2v3h-2zM129 111h4v3h-4zM261 93h3v3h-3zM205 348h4v2h-4zM128 254h4v2h-4zM578 706h4v2h-4zM146 213h3v3h-3zM712 147h4v2h-4zM370 456h3v3h-3zM215 391h3v2h-3zM88 102h3v2h-3zM224 591h3v2h-3zM282 624h4v2h-4zM400 489h3v2h-3zM280 237h3v3h-3zM170 581h4v3h-4zM192 26h3v2h-3zM493 372h3v2h-3zM689 437h2v2h-2zM706 684h3v2h-3zM380 190h2v2h-2zM476 363h4v2h-4zM617 147h3v3h-3zM411 100h4v2h-4zM98 713h3v2h-3zM513 429h2v2h-2zM594 155h3v3h-3zM681 516h3v2h-3zM668 22h4v3h-4zM26 724h4v2h-4zM691 98h4v2h-4zM188 740h3v2h-3zM320 399h2v2h-2zM239 94h3v2h-3zM32 209h3v3h-3zM86 171h2v3h-2zM738 695h3v3h-3zM816 599h2v2h-2zM31 667h2v3h-2zM217 319h3v2h-3zM624 45h2v2h-2zM503 520h3v2h-3zM667 768h3v2h-3zM444 62h2v3h-2zM337 528h2v3h-2zM199 686h3v2h-3zM183 328h4v2h-4zM805 550h4v2h-4zM327 287h3v2h-3zM633 304h4v2h-4zM367 697h2v2h-2zM339 623h2v2h-2zM666 508h3v2h-3zM212 277h2v2h-2zM637 259h3v2h-3zM429 293h2v2h-2zM519 675h3v3h-3zM402 500h3v2h-3zM769 475h3v2h-3zM84 33h4v2h-4zM448 218h2v2h-2zM671 353h2v2h-2zM211 253h3v3h-3zM470 436h3v2h-3zM266 709h2v2h-2zM602 113h3v2h-3zM701 367h2v2h-2zM760 407h3v2h-3zM688 114h3v3h-3zM87 179h3v2h-3zM206 295h3v2h-3zM15 316h2v3h-2zM659 75h3v2h-3zM508 710h2v2h-2zM168 645h2v2h-2zM696 175h2v2h-2zM304 692h2v2h-2zM31 422h2v2h-2zM754 739h4v2h-4zM357 714h3v2h-3zM197 535h2v3h-2zM539 145h4v3h-4zM115 720h3v3h-3zM42 148h2v2h-2zM180 192h3v2h-3zM459 565h2v2h-2zM247 50h2v2h-2zM328 635h3v2h-3zM310 630h3v3h-3zM626 292h2v2h-2zM462 115h3v3h-3zM192 243h3v3h-3zM625 451h2v2h-2zM302 616h3v3h-3zM123 639h3v3h-3zM1 131h2v2h-2zM173 247h2v2h-2zM315 105h2v2h-2zM697 321h4v2h-4zM143 378h2v2h-2zM173 125h2v2h-2zM239 43h3v2h-3zM294 772h2v2h-2zM89 720h4v2h-4zM162 178h3v2h-3zM393 381h4v2h-4zM700 114h3v2h-3zM19 171h3v3h-3zM480 404h3v2h-3zM517 440h4v2h-4zM230 167h3v2h-3zM774 290h4v2h-4zM626 742h3v2h-3zM503 431h3v3h-3zM326 461h3v2h-3zM247 131h4v2h-4zM91 343h3v2h-3zM307 171h2v3h-2zM103 272h3v2h-3zM241 167h4v3h-4zM128 309h2v2h-2zM781 298h2v2h-2zM525 704h3v3h-3zM540 192h3v2h-3zM483 159h3v2h-3zM435 662h3v2h-3zM428 729h3v2h-3zM739 550h2v2h-2zM720 592h4v2h-4zM173 96h4v3h-4zM626 579h3v2h-3zM421 551h2v2h-2zM654 419h4v2h-4zM766 429h3v2h-3zM266 62h3v2h-3zM726 396h3v3h-3zM398 437h4v2h-4zM659 59h3v2h-3zM120 444h3v3h-3zM58 95h3v2h-3zM259 328h3v2h-3zM36 171h4v2h-4zM570 88h4v3h-4zM540 63h2v2h-2zM645 631h3v3h-3zM622 541h2v2h-2zM798 488h4v3h-4zM284 713h3v2h-3zM45 632h3v2h-3zM124 745h3v2h-3zM105 770h3v2h-3zM94 217h3v3h-3zM152 616h2v2h-2zM65 302h3v3h-3zM305 172h3v3h-3zM52 505h4v2h-4zM458 442h3v2h-3zM639 662h3v3h-3zM665 222h3v2h-3zM287 730h4v2h-4zM450 746h2v3h-2zM6 296h3v2h-3zM233 553h3v2h-3zM35 107h3v3h-3zM58 361h3v2h-3zM138 728h4v2h-4zM111 724h2v3h-2zM633 704h3v2h-3zM41 687h3v3h-3zM333 296h4v2h-4zM508 762h3v3h-3zM737 573h3v3h-3zM55 297h3v3h-3zM399 564h2v2h-2zM500 620h2v3h-2zM498 401h2v2h-2zM593 286h3v3h-3zM377 701h3v2h-3zM20 203h3v3h-3zM421 446h2v2h-2zM438 64h2v2h-2zM465 140h3v3h-3zM741 181h3v3h-3zM177 747h2v2h-2zM633 22h2v2h-2zM360 503h2v3h-2zM615 137h4v2h-4zM466 118h3v2h-3zM400 540h3v3h-3zM172 306h2v2h-2zM20 295h3v2h-3zM740 427h2v2h-2zM225 397h3v3h-3zM581 185h3v2h-3zM201 248h4v2h-4zM217 206h3v2h-3zM135 719h4v2h-4zM749 494h2v2h-2zM715 506h3v2h-3zM763 89h3v3h-3zM391 42h3v2h-3zM780 478h2v2h-2zM593 201h4v2h-4zM748 195h4v2h-4zM199 709h3v3h-3zM264 229h3v2h-3zM376 79h3v2h-3zM218 225h3v3h-3zM272 183h4v3h-4zM812 607h3v2h-3zM601 656h4v2h-4zM133 213h3v2h-3zM260 457h3v2h-3zM711 759h4v3h-4zM565 349h3v2h-3zM416 366h3v2h-3zM175 193h4v3h-4zM452 566h4v2h-4zM66 773h3v3h-3zM9 771h4v2h-4zM340 89h2v3h-2zM749 340h2v3h-2zM610 424h3v3h-3zM654 517h2v2h-2zM396 35h4v2h-4zM558 678h4v3h-4zM149 766h3v2h-3zM48 388h3v3h-3zM90 727h3v2h-3zM173 441h3v2h-3zM479 121h4v2h-4zM247 150h3v2h-3zM638 544h2v2h-2zM129 200h3v3h-3zM677 450h2v2h-2zM221 679h3v2h-3zM597 68h3v2h-3zM581 240h3v3h-3zM29 89h4v3h-4zM675 543h3v2h-3zM730 333h4v2h-4zM118 34h3v2h-3zM87 488h3v2h-3zM769 251h4v3h-4zM250 330h3v2h-3zM212 781h3v2h-3zM586 284h3v2h-3zM450 60h3v2h-3zM92 751h2v2h-2zM310 88h3v2h-3zM149 165h4v2h-4zM707 157h2v2h-2zM429 340h2v2h-2zM353 134h4v2h-4zM700 416h4v2h-4zM34 616h3v2h-3zM178 268h4v3h-4zM476 476h3v2h-3zM64 128h2v2h-2zM122 668h4v2h-4zM77 496h3v2h-3zM625 361h2v3h-2zM509 178h3v2h-3zM596 248h4v3h-4zM724 698h3v3h-3zM450 681h4v2h-4zM284 508h3v3h-3zM360 525h3v2h-3zM7 67h4v2h-4zM457 415h3v3h-3zM398 736h4v2h-4zM238 322h3v2h-3zM332 502h2v2h-2zM205 416h4v3h-4zM739 753h3v3h-3zM551 396h2v2h-2zM575 226h2v2h-2zM263 474h2v2h-2zM167 305h3v3h-3zM54 632h4v2h-4zM134 116h3v3h-3zM578 185h2v3h-2zM486 390h2v2h-2zM515 539h4v2h-4zM528 383h4v2h-4zM338 203h3v3h-3zM212 362h3v2h-3zM663 418h2v2h-2zM187 750h3v2h-3zM35 548h2v2h-2zM606 339h3v2h-3zM684 266h4v2h-4zM671 305h3v2h-3zM237 385h4v3h-4zM159 496h3v2h-3zM507 343h3v2h-3zM136 408h2v3h-2zM451 713h3v3h-3zM487 337h3v3h-3zM816 190h2v2h-2zM751 89h2v3h-2zM684 427h3v2h-3zM417 353h3v2h-3zM461 688h3v2h-3zM355 571h3v2h-3zM634 538h2v3h-2zM812 62h3v2h-3zM175 614h3v2h-3zM768 761h2v2h-2zM21 579h2v2h-2zM14 160h4v2h-4zM674 188h3v2h-3zM159 35h4v2h-4zM236 636h4v3h-4zM137 228h3v2h-3zM587 572h3v2h-3zM272 198h3v2h-3zM531 614h2v2h-2zM759 389h4v2h-4zM146 248h4v2h-4zM699 408h3v2h-3zM52 765h3v2h-3zM344 101h4v2h-4zM775 122h2v3h-2zM219 242h2v2h-2zM174 266h4v2h-4zM457 420h3v2h-3zM251 144h3v2h-3zM748 555h3v2h-3zM37 80h3v2h-3zM658 208h2v2h-2zM423 548h3v3h-3zM813 184h3v3h-3zM778 544h3v3h-3zM155 109h4v2h-4zM319 335h2v2h-2zM160 308h3v2h-3zM614 597h2v2h-2zM155 59h3v2h-3zM584 761h4v3h-4zM155 313h3v2h-3zM422 50h2v2h-2zM31 277h3v3h-3zM130 124h3v2h-3zM467 568h2v2h-2zM637 116h4v2h-4zM409 319h2v3h-2zM26 502h3v2h-3zM231 176h4v3h-4zM744 316h2v2h-2zM778 93h3v3h-3zM319 539h3v2h-3zM361 401h4v3h-4zM753 441h3v3h-3zM146 435h4v2h-4zM25 217h3v2h-3zM364 98h3v2h-3zM191 726h2v2h-2zM473 766h2v2h-2zM715 476h3v2h-3zM672 38h3v3h-3zM485 700h4v2h-4zM615 47h3v3h-3zM280 111h2v2h-2zM142 93h4v3h-4zM3 268h2v2h-2zM402 711h3v2h-3zM338 39h3v2h-3zM117 143h3v2h-3zM564 122h3v2h-3zM138 765h3v2h-3zM224 499h2v2h-2zM523 141h2v2h-2zM772 296h3v2h-3zM658 382h3v3h-3zM519 598h4v2h-4zM748 214h4v2h-4zM215 779h2v2h-2zM70 515h3v3h-3zM537 247h4v2h-4zM816 247h2v2h-2zM339 246h4v2h-4zM216 238h3v2h-3zM289 212h3v3h-3zM454 713h4v2h-4zM804 755h3v2h-3zM448 554h3v3h-3zM717 651h3v2h-3zM647 567h4v2h-4zM476 693h4v2h-4zM534 585h4v2h-4zM382 310h4v3h-4zM648 769h2v2h-2zM318 708h4v3h-4zM250 647h4v2h-4zM478 365h2v3h-2zM160 141h4v2h-4zM170 773h3v2h-3zM197 729h3v3h-3zM311 213h4v2h-4zM94 768h3v2h-3zM240 445h3v3h-3zM550 428h3v2h-3zM131 608h3v2h-3zM142 457h3v3h-3zM375 261h3v3h-3zM424 734h4v3h-4zM289 350h3v3h-3zM456 448h3v3h-3zM719 187h3v3h-3zM200 248h3v3h-3zM511 73h2v2h-2zM730 113h3v2h-3zM718 571h4v3h-4zM651 185h2v3h-2zM452 461h2v2h-2zM328 275h2v2h-2zM27 414h3v3h-3zM498 287h3v2h-3zM756 685h3v3h-3zM265 250h4v2h-4zM799 638h4v3h-4zM677 230h3v2h-3zM248 547h3v2h-3zM247 382h2v2h-2zM388 276h2v2h-2zM148 641h3v3h-3zM470 82h3v2h-3zM65 584h4v2h-4zM346 614h4v3h-4zM337 159h4v3h-4zM400 637h3v3h-3zM149 684h2v3h-2zM379 188h3v3h-3zM453 571h3v2h-3zM50 536h3v2h-3zM575 769h2v2h-2zM25 769h3v2h-3zM426 282h2v2h-2zM611 405h4v2h-4zM637 628h3v3h-3zM559 314h3v2h-3zM771 287h3v2h-3zM695 611h4v3h-4zM322 344h3v3h-3zM363 351h3v3h-3zM196 624h2v2h-2zM330 355h3v3h-3zM612 71h3v2h-3zM808 100h4v2h-4zM323 368h3v3h-3zM546 252h4v2h-4zM525 714h3v2h-3zM495 702h2v2h-2zM386 492h3v3h-3zM562 751h2v2h-2zM282 107h3v3h-3zM189 294h3v2h-3zM303 119h3v2h-3zM707 475h3v2h-3zM631 55h2v3h-2zM387 302h3v2h-3zM214 255h3v2h-3zM631 585h3v3h-3zM665 490h2v2h-2zM23 726h3v3h-3zM510 759h4v3h-4zM318 513h2v3h-2zM461 528h3v2h-3zM245 655h3v2h-3zM288 589h3v2h-3zM255 497h3v2h-3zM469 606h3v3h-3zM161 778h2v3h-2zM27 524h3v2h-3zM603 624h3v2h-3zM64 65h2v2h-2zM147 340h2v3h-2zM455 274h4v3h-4zM417 590h3v3h-3zM544 528h4v2h-4zM183 717h3v2h-3zM141 184h2v3h-2zM347 281h4v2h-4zM328 632h3v3h-3zM720 644h3v3h-3zM72 531h3v3h-3zM802 660h2v2h-2zM422 179h2v2h-2zM420 571h2v2h-2zM303 552h3v2h-3zM449 126h3v2h-3zM673 328h3v3h-3zM136 443h2v2h-2zM738 238h3v3h-3zM596 32h3v3h-3zM627 617h4v3h-4zM305 476h3v3h-3zM780 151h3v2h-3zM170 769h2v3h-2zM431 688h3v2h-3zM775 315h3v3h-3zM425 652h2v2h-2zM444 774h2v2h-2zM318 678h3v3h-3zM581 710h3v2h-3zM636 669h3v2h-3zM578 106h3v2h-3zM653 260h4v2h-4zM731 476h3v2h-3zM47 687h3v2h-3zM716 296h2v3h-2zM733 238h4v2h-4zM368 494h4v2h-4zM331 316h3v2h-3zM98 462h4v2h-4zM48 169h3v2h-3zM140 191h3v2h-3zM191 723h3v3h-3zM58 736h4v2h-4zM503 514h3v3h-3zM528 297h2v3h-2zM208 30h2v2h-2zM46 272h4v2h-4zM59 573h4v2h-4zM653 219h3v2h-3zM292 388h2v2h-2zM285 465h4v3h-4zM431 521h4v2h-4zM385 512h2v3h-2zM282 703h4v2h-4zM733 664h3v3h-3zM138 503h2v2h-2zM617 78h2v2h-2zM339 434h3v2h-3zM169 336h3v2h-3zM215 582h2v2h-2zM388 473h3v2h-3zM54 763h2v2h-2zM322 516h2v2h-2zM351 93h4v3h-4zM600 700h4v2h-4zM370 324h3v3h-3zM20 109h3v2h-3zM364 311h4v2h-4zM314 507h3v2h-3zM408 578h2v2h-2zM281 741h3v2h-3zM714 287h4v2h-4zM170 372h2v2h-2zM681 121h3v2h-3zM775 737h4v3h-4zM374 348h3v3h-3zM372 181h4v2h-4zM381 351h2v2h-2zM418 360h3v3h-3zM485 572h4v2h-4zM386 301h2v2h-2zM785 62h3v2h-3zM808 238h2v2h-2zM198 355h4v2h-4zM589 756h4v2h-4zM677 419h2v2h-2zM617 397h3v3h-3zM585 293h4v2h-4zM785 33h2v2h-2zM488 496h2v2h-2zM73 193h3v2h-3zM275 710h3v2h-3zM520 523h3v3h-3zM664 216h3v2h-3zM67 319h4v3h-4zM812 298h2v2h-2zM341 131h2v2h-2zM187 458h3v2h-3zM490 748h4v2h-4zM637 300h3v3h-3zM319 372h3v2h-3zM102 332h4v3h-4zM708 84h3v3h-3zM300 382h3v3h-3zM234 314h4v3h-4zM667 248h2v2h-2zM510 194h2v3h-2zM113 737h4v2h-4zM716 29h3v2h-3zM226 366h3v2h-3zM259 467h4v3h-4zM317 579h3v2h-3zM729 65h3v2h-3zM470 57h2v3h-2zM650 255h4v2h-4zM205 140h3v2h-3zM813 477h3v3h-3zM169 669h4v2h-4zM485 101h2v3h-2zM419 490h2v3h-2zM718 713h3v2h-3zM705 185h3v3h-3zM793 467h3v2h-3zM170 453h3v2h-3zM158 469h3v3h-3zM639 291h3v2h-3zM586 318h3v2h-3zM621 414h3v2h-3zM502 273h3v2h-3zM444 350h3v3h-3zM394 77h2v2h-2zM575 68h2v2h-2zM275 57h3v2h-3zM240 463h2v2h-2zM155 680h4v2h-4zM234 463h2v2h-2zM722 138h3v2h-3zM39 346h3v2h-3zM527 386h2v2h-2zM606 342h3v2h-3zM766 117h3v2h-3zM636 45h3v2h-3zM227 32h3v2h-3zM228 26h3v2h-3zM797 769h4v2h-4zM287 272h2v2h-2zM44 187h2v3h-2zM732 172h3v2h-3zM636 613h3v3h-3zM800 680h3v3h-3zM271 489h2v2h-2zM653 363h2v2h-2zM302 94h2v2h-2zM256 299h3v2h-3zM166 71h3v2h-3zM194 778h3v2h-3zM755 353h4v3h-4zM707 127h3v2h-3zM758 566h3v2h-3zM246 208h2v3h-2zM564 119h2v3h-2zM85 362h3v2h-3zM333 467h4v3h-4zM106 401h4v3h-4zM427 117h2v2h-2zM727 566h3v2h-3zM367 351h4v2h-4zM393 672h3v2h-3zM173 366h3v2h-3zM26 382h4v3h-4zM768 296h4v2h-4zM256 512h2v2h-2zM427 322h3v3h-3zM247 207h3v3h-3zM291 749h3v3h-3zM481 685h2v2h-2zM412 431h2v2h-2zM524 483h3v2h-3zM567 101h2v3h-2zM256 100h4v2h-4zM183 337h4v2h-4zM712 567h2v2h-2zM314 701h4v2h-4zM167 232h3v2h-3zM169 83h3v2h-3zM638 170h2v2h-2zM219 206h3v3h-3zM555 626h4v2h-4zM605 320h3v3h-3zM249 670h3v2h-3zM636 486h4v2h-4zM168 325h3v3h-3zM712 701h2v3h-2zM226 657h4v2h-4zM347 35h2v2h-2zM461 576h4v2h-4zM249 495h3v2h-3zM202 410h3v2h-3zM339 263h2v2h-2zM40 452h3v2h-3zM538 321h2v2h-2zM743 196h3v2h-3zM584 726h3v3h-3zM751 58h3v3h-3zM427 187h3v3h-3zM690 344h4v2h-4zM83 223h2v2h-2zM123 216h3v2h-3zM256 656h3v3h-3zM387 660h3v2h-3zM492 367h3v3h-3zM77 691h3v2h-3zM653 765h3v2h-3zM66 599h2v3h-2zM792 357h3v2h-3zM70 42h3v2h-3zM632 415h3v2h-3zM402 318h3v3h-3zM225 204h2v2h-2zM453 368h4v2h-4zM148 557h4v3h-4zM1 33h3v2h-3zM503 332h2v2h-2zM805 187h3v2h-3zM773 325h4v2h-4zM468 336h2v3h-2zM216 469h3v3h-3zM681 31h3v2h-3zM302 508h4v3h-4zM359 111h4v3h-4zM503 200h3v2h-3zM743 36h2v2h-2zM319 335h3v2h-3zM652 746h2v2h-2zM472 596h3v2h-3zM153 177h3v2h-3zM566 419h4v2h-4zM156 294h3v2h-3zM132 233h2v2h-2zM51 772h2v2h-2zM47 320h4v2h-4zM393 646h3v3h-3zM412 192h3v2h-3zM179 476h3v2h-3zM291 68h3v2h-3zM761 635h4v2h-4zM758 595h3v2h-3zM461 94h3v2h-3zM540 449h2v2h-2zM197 651h2v2h-2zM127 201h2v3h-2zM544 700h3v2h-3zM448 660h3v3h-3zM591 413h4v2h-4zM131 722h3v3h-3zM272 373h3v3h-3zM475 158h3v2h-3zM659 149h3v2h-3zM406 65h2v3h-2zM522 374h4v2h-4zM154 545h2v2h-2zM10 256h3v2h-3zM556 97h2v2h-2zM341 741h3v3h-3zM181 520h4v2h-4zM260 629h2v3h-2zM396 363h3v2h-3zM553 484h2v2h-2zM362 521h2v2h-2zM148 376h3v2h-3zM50 645h3v2h-3zM392 405h2v3h-2zM517 719h3v2h-3zM159 460h3v2h-3zM486 552h3v2h-3zM592 516h3v2h-3zM559 641h3v3h-3zM220 504h3v2h-3zM571 577h3v2h-3zM724 108h3v2h-3zM592 195h3v3h-3zM661 158h3v2h-3zM801 754h3v2h-3zM548 762h4v2h-4zM348 706h3v2h-3zM762 227h4v2h-4zM71 545h3v3h-3zM319 375h3v3h-3zM224 576h4v2h-4zM526 49h4v2h-4zM501 487h4v3h-4zM719 550h4v2h-4zM172 231h3v2h-3zM299 421h3v3h-3zM383 188h2v2h-2zM460 489h2v2h-2zM548 496h4v2h-4zM32 589h4v2h-4zM666 165h2v2h-2zM368 536h2v2h-2zM332 138h4v3h-4zM388 645h2v3h-2zM783 301h2v3h-2zM650 335h3v2h-3zM305 159h3v2h-3zM516 772h3v2h-3zM474 516h3v3h-3zM183 743h3v2h-3zM279 347h2v2h-2zM635 479h3v2h-3zM403 297h3v2h-3zM558 613h4v2h-4zM312 107h2v2h-2zM296 449h3v2h-3zM668 663h2v2h-2zM720 741h4v2h-4zM476 703h3v3h-3zM11 113h2v2h-2zM555 484h4v3h-4zM78 531h3v2h-3zM331 81h4v3h-4zM680 440h4v3h-4zM309 388h3v3h-3zM442 181h2v2h-2zM616 422h3v3h-3zM449 741h4v2h-4zM674 115h2v2h-2zM473 411h4v2h-4zM433 771h3v2h-3zM516 603h2v2h-2zM678 647h3v2h-3zM370 413h4v3h-4zM94 261h3v3h-3zM769 714h3v2h-3zM106 127h3v2h-3zM778 268h2v2h-2zM798 557h3v2h-3zM531 88h3v3h-3zM642 430h3v3h-3zM368 407h3v2h-3zM7 762h4v2h-4zM655 445h2v3h-2zM83 669h4v3h-4zM40 519h2v3h-2zM688 732h3v3h-3zM687 121h3v2h-3zM436 191h2v3h-2zM263 30h3v3h-3zM590 361h4v2h-4zM320 60h3v3h-3zM780 122h4v3h-4zM220 387h4v2h-4zM356 117h3v2h-3zM657 657h3v2h-3zM350 648h2v3h-2zM801 246h4v2h-4zM168 117h3v2h-3zM7 105h4v3h-4zM611 327h4v2h-4zM811 359h4v2h-4zM482 490h4v2h-4zM139 37h3v3h-3zM517 278h4v2h-4zM279 713h3v3h-3zM193 594h4v2h-4zM122 684h3v2h-3zM162 615h4v2h-4zM608 720h3v2h-3zM783 408h2v2h-2zM622 445h3v2h-3zM532 331h4v2h-4zM705 415h2v3h-2zM700 336h2v2h-2zM467 373h3v2h-3zM48 104h3v3h-3zM103 748h3v3h-3zM82 293h2v3h-2zM711 138h4v2h-4zM33 167h2v3h-2zM627 555h3v2h-3zM133 354h4v2h-4zM314 83h2v3h-2zM466 269h4v2h-4zM497 179h3v3h-3zM476 763h2v2h-2zM314 676h2v3h-2zM161 570h2v3h-2zM116 318h3v3h-3zM84 373h3v2h-3zM148 145h4v2h-4zM44 583h3v2h-3zM338 751h3v2h-3zM192 248h3v3h-3zM748 178h3v3h-3zM187 175h2v2h-2zM196 293h3v2h-3zM753 748h3v3h-3zM488 587h2v2h-2zM500 136h4v2h-4zM610 580h4v2h-4zM661 226h3v2h-3zM453 115h3v2h-3zM91 37h2v3h-2zM350 579h2v3h-2zM591 682h2v2h-2zM328 102h3v3h-3zM705 514h4v2h-4zM725 165h4v3h-4zM528 679h3v3h-3zM92 195h3v2h-3zM470 337h3v2h-3zM587 506h2v2h-2zM411 266h3v2h-3zM691 468h3v2h-3zM521 139h4v2h-4zM785 146h4v3h-4zM339 84h4v2h-4zM21 583h4v2h-4zM112 276h3v2h-3zM129 157h3v3h-3zM772 708h3v2h-3zM183 478h4v2h-4zM455 270h4v3h-4zM244 696h2v2h-2zM776 155h4v3h-4zM281 778h3v2h-3zM640 331h3v2h-3zM646 402h3v3h-3zM684 364h4v3h-4zM566 405h4v2h-4zM7 337h4v2h-4zM572 768h3v2h-3zM527 726h3v2h-3zM504 248h3v3h-3zM141 360h4v2h-4zM154 493h4v3h-4zM526 281h3v2h-3zM750 383h4v3h-4zM271 641h3v2h-3zM394 729h3v2h-3zM429 219h2v2h-2zM191 339h3v3h-3zM470 41h3v2h-3zM458 227h3v3h-3zM798 211h2v3h-2zM173 132h3v3h-3zM156 117h2v3h-2zM441 138h4v3h-4zM491 202h2v2h-2zM390 566h3v2h-3zM21 254h3v2h-3zM15 134h3v3h-3zM181 551h4v2h-4zM733 334h3v3h-3zM712 412h3v2h-3zM394 730h2v3h-2zM318 721h2v2h-2zM640 291h3v2h-3zM197 380h2v3h-2zM581 29h3v3h-3zM57 197h2v2h-2zM312 183h2v2h-2zM534 72h2v3h-2zM120 278h2v2h-2zM584 260h3v3h-3zM118 518h4v2h-4zM581 252h4v3h-4zM482 662h4v2h-4zM318 204h3v3h-3zM176 541h4v2h-4zM692 161h3v3h-3zM427 691h3v2h-3zM789 757h2v3h-2zM215 365h2v2h-2zM489 105h3v2h-3zM423 566h3v2h-3zM648 60h4v2h-4zM347 56h2v2h-2zM277 267h3v3h-3zM668 471h3v3h-3zM522 642h4v2h-4zM693 382h4v2h-4zM472 498h2v2h-2zM811 287h3v2h-3zM323 131h2v2h-2zM154 209h3v3h-3zM266 699h3v2h-3zM618 509h2v2h-2zM330 391h4v2h-4zM244 199h2v2h-2zM309 266h2v2h-2zM375 266h4v2h-4zM605 598h3v2h-3zM245 495h3v2h-3zM44 98h2v3h-2zM124 196h3v3h-3zM185 671h3v2h-3zM220 157h3v3h-3zM291 561h4v2h-4zM809 139h2v2h-2zM758 661h3v3h-3zM789 324h4v2h-4zM44 603h3v2h-3zM509 609h2v2h-2zM518 296h3v2h-3zM583 778h3v3h-3zM205 357h3v3h-3zM636 706h4v2h-4zM591 167h2v3h-2zM272 478h4v2h-4zM314 293h3v2h-3zM144 284h3v2h-3zM152 645h3v3h-3zM504 301h3v3h-3zM702 89h3v3h-3zM225 192h4v2h-4zM48 545h4v2h-4zM239 633h3v2h-3zM510 181h3v3h-3zM132 523h4v2h-4zM131 357h3v3h-3zM223 549h3v2h-3zM498 755h3v3h-3zM356 520h3v3h-3zM588 634h2v2h-2zM364 201h3v3h-3zM674 352h2v3h-2zM443 402h3v2h-3zM164 542h3v2h-3zM9 323h3v2h-3zM238 484h2v3h-2zM586 710h4v3h-4zM476 586h3v3h-3zM261 707h3v2h-3zM4 686h3v2h-3zM428 202h4v2h-4zM810 667h2v2h-2zM675 215h3v2h-3zM809 714h4v2h-4zM567 277h3v2h-3zM644 423h3v2h-3zM727 225h2v3h-2zM790 290h3v2h-3zM519 46h4v2h-4zM485 669h4v2h-4zM675 546h2v2h-2zM446 439h2v2h-2zM591 772h3v2h-3zM304 462h2v3h-2zM518 66h3v2h-3zM221 338h4v2h-4zM437 58h2v2h-2zM500 131h3v3h-3zM81 71h3v2h-3zM419 108h2v3h-2zM181 118h3v2h-3zM29 390h4v3h-4zM324 211h4v3h-4zM54 680h2v2h-2zM613 435h3v3h-3zM602 769h2v3h-2zM241 135h3v2h-3zM238 575h3v2h-3zM107 728h2v2h-2zM227 548h3v2h-3zM161 161h2v2h-2zM5 397h3v3h-3zM121 98h2v2h-2zM600 556h4v2h-4zM62 94h3v2h-3zM740 31h3v2h-3zM412 196h4v2h-4zM424 40h4v2h-4zM324 282h3v2h-3zM592 491h4v2h-4zM41 296h4v3h-4zM629 172h2v2h-2zM88 139h3v3h-3zM776 317h3v2h-3zM209 265h3v2h-3zM261 258h3v3h-3zM279 168h3v3h-3zM315 497h4v2h-4zM618 483h3v3h-3zM522 475h4v2h-4zM634 273h4v2h-4zM492 74h4v3h-4zM66 709h4v3h-4zM173 737h4v2h-4zM408 226h4v2h-4zM775 159h4v2h-4zM58 663h3v2h-3zM178 311h3v3h-3zM126 607h4v2h-4zM411 342h4v2h-4zM531 581h3v2h-3zM422 297h4v3h-4zM715 37h3v2h-3zM519 469h3v3h-3zM112 695h3v2h-3zM84 416h3v2h-3zM246 571h4v3h-4zM145 681h3v3h-3zM12 50h3v3h-3zM746 348h2v2h-2zM458 210h3v3h-3zM188 751h4v3h-4zM165 317h3v2h-3zM185 53h3v3h-3zM738 661h3v2h-3zM19 566h2v2h-2zM307 165h3v2h-3zM581 26h4v2h-4zM688 199h3v2h-3zM552 411h4v3h-4zM218 62h3v2h-3zM745 713h4v2h-4zM740 433h4v3h-4zM131 503h2v2h-2zM78 244h4v2h-4zM755 601h4v2h-4zM620 392h2v2h-2zM632 568h3v2h-3zM249 763h3v2h-3zM327 564h2v2h-2zM768 226h2v3h-2zM51 38h3v3h-3zM182 42h2v3h-2zM728 497h3v2h-3zM167 668h2v2h-2zM343 587h4v2h-4zM206 248h4v3h-4zM522 328h2v2h-2zM500 133h3v2h-3zM384 101h3v3h-3zM205 77h4v2h-4zM336 114h4v3h-4zM590 257h3v2h-3zM422 69h2v2h-2zM462 142h2v3h-2zM742 652h4v3h-4zM526 778h2v2h-2zM89 711h2v3h-2zM353 113h3v2h-3zM679 118h2v3h-2zM71 414h4v2h-4zM665 509h4v2h-4zM328 240h2v3h-2zM72 423h4v3h-4zM713 83h4v3h-4zM4 533h4v2h-4zM675 621h3v2h-3zM346 433h3v3h-3zM234 576h3v3h-3zM325 60h2v2h-2zM497 143h3v2h-3zM655 478h3v3h-3zM752 659h3v3h-3zM470 47h3v3h-3zM102 654h2v2h-2zM278 215h4v2h-4zM721 544h4v2h-4zM746 540h4v2h-4zM77 645h3v2h-3zM13 23h4v2h-4zM445 238h3v2h-3zM253 342h4v2h-4zM799 88h3v2h-3zM689 100h4v3h-4zM529 608h2v2h-2zM287 58h3v3h-3zM128 383h3v3h-3zM182 303h3v3h-3zM739 216h4v3h-4zM589 164h3v3h-3zM681 166h3v2h-3zM293 674h3v2h-3zM775 768h3v2h-3zM238 532h3v2h-3zM291 401h3v3h-3zM548 162h3v2h-3zM767 490h2v2h-2zM74 393h3v2h-3zM649 469h4v2h-4zM105 731h4v2h-4zM105 129h2v2h-2zM513 658h2v3h-2zM94 552h3v2h-3zM57 395h4v2h-4zM677 506h2v2h-2zM111 189h3v2h-3zM346 92h2v3h-2zM772 769h2v3h-2zM394 568h3v2h-3zM762 57h3v3h-3zM66 729h2v2h-2zM248 327h3v2h-3zM280 652h4v3h-4zM690 730h4v2h-4zM350 425h3v2h-3zM268 624h2v3h-2zM634 287h2v3h-2zM357 201h4v3h-4zM650 323h3v3h-3zM280 23h3v2h-3zM729 462h3v3h-3zM84 645h4v2h-4zM390 623h3v2h-3z"/><path fill="#060632" d="M150 236h2v3h-2zM503 318h2v2h-2zM234 508h2v2h-2zM289 395h3v2h-3zM751 725h3v3h-3zM36 36h3v3h-3zM78 481h2v3h-2zM87 719h2v2h-2zM616 107h3v3h-3zM140 155h2v3h-2zM641 550h3v3h-3zM140 432h2v2h-2zM112 663h3v2h-3zM90 335h3v2h-3zM452 368h3v2h-3zM36 195h3v2h-3zM510 223h2v3h-2zM203 736h4v2h-4zM385 666h3v3h-3zM210 664h3v3h-3zM446 449h3v2h-3zM401 496h3v2h-3zM186 435h3v2h-3zM614 213h3v2h-3zM350 326h2v2h-2zM455 429h3v3h-3zM554 538h2v3h-2zM164 413h3v2h-3zM431 309h3v2h-3zM544 310h3v3h-3zM684 444h3v3h-3zM597 716h3v2h-3zM63 27h2v2h-2zM562 206h3v3h-3zM86 460h4v3h-4zM543 330h3v2h-3zM159 623h3v2h-3zM140 523h2v3h-2zM633 65h3v2h-3zM521 247h3v2h-3zM561 112h3v2h-3zM809 210h2v2h-2zM214 56h4v2h-4zM729 745h3v3h-3zM774 419h2v2h-2zM318 298h3v2h-3zM677 641h3v2h-3zM251 507h3v2h-3zM191 629h2v2h-2zM205 439h3v3h-3zM396 139h3v2h-3zM639 723h4v2h-4zM534 460h2v2h-2zM765 449h2v2h-2zM177 82h4v3h-4zM314 49h3v2h-3zM798 473h3v2h-3zM382 695h2v3h-2zM185 83h3v2h-3zM685 469h3v3h-3zM509 463h3v2h-3zM324 438h3v3h-3zM44 149h3v2h-3zM763 484h2v2h-2zM260 139h3v2h-3zM484 475h3v2h-3zM330 411h4v2h-4zM623 262h3v2h-3zM421 452h3v3h-3zM646 512h3v3h-3zM413 224h3v2h-3zM49 653h4v2h-4zM507 387h2v2h-2zM226 258h4v2h-4zM246 578h2v3h-2zM301 396h3v3h-3zM685 564h3v2h-3zM565 283h3v2h-3zM496 50h4v3h-4zM60 238h3v2h-3zM412 740h2v2h-2zM330 458h3v2h-3zM797 383h2v2h-2zM644 452h2v2h-2zM616 572h2v3h-2zM643 480h2v3h-2zM110 586h4v2h-4zM468 154h2v2h-2zM527 738h4v3h-4zM693 681h4v2h-4zM204 779h3v2h-3zM674 119h3v2h-3zM649 177h3v2h-3zM22 422h3v3h-3zM599 232h3v3h-3zM112 377h2v2h-2zM309 537h2v3h-2zM541 409h4v2h-4zM560 23h3v3h-3zM448 138h2v2h-2zM159 298h2v2h-2zM502 173h3v2h-3zM692 378h3v2h-3zM224 63h3v2h-3zM540 552h4v3h-4zM339 671h3v2h-3zM812 630h4v2h-4zM554 618h3v2h-3zM573 132h4v3h-4zM2 696h3v2h-3zM588 665h2v2h-2zM674 369h4v3h-4zM157 546h4v2h-4zM549 69h3v2h-3zM540 672h3v2h-3zM440 461h4v3h-4zM259 75h2v2h-2zM90 745h3v2h-3zM252 777h3v3h-3zM522 608h4v2h-4zM374 610h3v3h-3zM517 289h3v2h-3zM113 270h3v3h-3zM437 545h2v2h-2zM655 131h4v3h-4zM458 685h3v3h-3zM124 776h3v3h-3zM414 526h3v3h-3zM760 492h3v3h-3zM37 449h3v3h-3zM749 217h3v3h-3zM664 44h2v2h-2zM273 78h3v3h-3zM467 641h3v2h-3zM752 83h3v2h-3zM176 583h3v3h-3zM65 139h3v2h-3zM250 449h4v2h-4zM313 764h3v3h-3zM584 351h2v2h-2zM36 546h3v2h-3zM95 201h3v2h-3zM468 45h3v2h-3zM368 51h4v3h-4zM311 63h3v2h-3zM423 294h4v3h-4zM455 566h2v2h-2zM550 630h2v3h-2zM129 297h2v2h-2zM342 411h4v3h-4zM562 122h3v3h-3zM733 432h3v2h-3zM112 657h4v2h-4zM393 338h3v2h-3zM63 769h4v2h-4zM770 621h4v2h-4zM30 181h4v2h-4zM194 563h4v2h-4zM303 177h4v2h-4zM222 572h3v2h-3zM775 445h3v3h-3zM88 405h4v2h-4zM809 143h4v2h-4zM205 373h3v3h-3zM492 762h3v2h-3zM635 715h3v2h-3zM562 463h3v3h-3zM323 503h3v3h-3zM382 388h2v2h-2zM248 511h3v2h-3zM270 621h3v2h-3zM8 397h4v2h-4zM701 572h3v3h-3zM732 125h3v2h-3zM440 627h3v2h-3zM175 64h4v2h-4zM538 628h4v3h-4zM628 172h3v2h-3zM656 555h4v2h-4zM27 712h3v3h-3zM97 763h3v3h-3zM116 417h3v2h-3zM801 341h3v2h-3zM814 529h2v3h-2zM216 187h4v2h-4zM747 768h2v2h-2zM683 745h3v2h-3zM575 467h3v2h-3zM315 407h3v2h-3zM83 323h3v2h-3zM627 209h3v3h-3zM646 164h2v3h-2zM11 725h4v3h-4zM808 262h2v3h-2zM619 147h3v2h-3zM141 252h2v3h-2zM275 251h2v2h-2zM289 479h4v3h-4zM358 448h4v3h-4zM203 370h2v2h-2zM558 130h3v3h-3zM791 570h2v3h-2zM791 358h2v2h-2zM418 80h2v2h-2zM519 271h2v3h-2zM326 187h4v3h-4zM39 416h3v2h-3zM552 561h2v2h-2zM718 564h2v2h-2zM717 777h4v2h-4zM434 704h4v3h-4zM763 417h3v3h-3zM213 456h3v2h-3zM29 280h4v2h-4zM411 362h3v2h-3zM209 525h3v2h-3zM723 406h2v2h-2zM1 563h2v2h-2zM103 189h3v2h-3zM288 482h3v3h-3zM40 680h3v2h-3zM589 533h3v2h-3zM504 497h3v2h-3zM729 732h2v3h-2zM372 769h4v2h-4zM313 31h4v2h-4zM188 376h3v3h-3zM134 87h3v3h-3zM606 765h2v2h-2zM205 50h3v2h-3zM518 410h2v2h-2zM303 417h2v3h-2zM578 56h4v3h-4zM137 410h3v2h-3zM674 665h3v2h-3zM788 538h2v2h-2zM124 368h3v2h-3zM570 69h3v2h-3zM279 677h3v2h-3zM796 386h2v2h-2zM263 581h3v2h-3zM118 368h2v2h-2zM172 498h4v2h-4zM134 713h2v2h-2zM33 348h2v2h-2zM67 141h4v2h-4zM577 416h3v3h-3zM574 538h3v3h-3zM195 556h2v3h-2zM376 629h2v2h-2zM394 327h3v3h-3zM674 474h2v3h-2zM266 714h3v2h-3zM385 464h3v2h-3zM577 89h3v2h-3zM751 115h3v2h-3zM474 44h3v2h-3zM516 227h3v2h-3zM812 382h3v2h-3zM288 61h3v2h-3zM296 427h4v2h-4zM722 570h2v2h-2zM748 643h3v2h-3zM747 88h3v2h-3zM7 398h4v3h-4zM351 249h2v2h-2zM430 329h4v2h-4zM323 630h4v2h-4zM96 152h3v2h-3zM123 280h3v2h-3zM514 190h2v3h-2zM359 500h3v2h-3zM51 705h4v2h-4zM90 513h3v3h-3zM688 698h3v3h-3zM680 432h3v3h-3zM160 53h3v2h-3zM460 593h2v3h-2zM197 486h4v2h-4zM429 151h2v2h-2zM620 669h2v3h-2zM160 727h3v3h-3zM263 699h4v3h-4zM203 667h3v2h-3zM173 244h2v2h-2zM728 589h3v3h-3zM761 57h4v2h-4zM720 51h2v2h-2zM408 306h2v3h-2zM423 263h3v3h-3zM597 155h2v3h-2zM641 91h2v2h-2zM507 725h4v3h-4zM616 670h4v3h-4zM254 378h3v2h-3zM652 279h3v2h-3zM80 445h3v3h-3zM789 279h3v2h-3zM723 365h3v2h-3zM588 471h2v3h-2zM737 448h2v3h-2zM310 741h4v3h-4zM144 453h3v2h-3zM432 438h4v3h-4zM30 361h3v3h-3zM552 63h3v2h-3zM790 424h4v2h-4zM637 664h3v2h-3zM273 225h2v3h-2zM390 496h3v2h-3zM364 395h3v3h-3zM577 384h3v3h-3zM316 599h4v3h-4zM665 478h3v2h-3zM654 379h4v3h-4zM771 705h4v2h-4zM216 365h3v2h-3zM484 648h3v2h-3zM151 396h2v3h-2zM597 39h3v2h-3zM739 456h4v2h-4zM142 742h3v3h-3zM212 200h3v2h-3zM676 523h3v2h-3zM772 143h3v2h-3zM432 255h4v2h-4zM542 273h4v3h-4zM605 113h3v3h-3zM646 692h2v3h-2zM590 448h3v2h-3zM769 656h3v3h-3zM780 482h4v3h-4zM636 188h2v3h-2zM242 369h4v2h-4zM325 479h2v2h-2zM587 206h3v2h-3zM73 585h2v2h-2zM223 364h2v2h-2zM755 229h4v2h-4zM266 377h4v2h-4zM783 249h3v3h-3zM285 272h4v3h-4zM298 82h4v3h-4zM486 353h3v2h-3zM718 712h4v3h-4zM104 483h2v2h-2zM218 350h3v3h-3zM172 446h4v2h-4zM307 448h4v2h-4zM506 89h3v2h-3zM231 169h3v2h-3zM258 580h3v2h-3zM400 526h2v3h-2zM436 603h3v2h-3zM695 146h3v2h-3zM51 480h3v3h-3zM749 141h4v2h-4zM55 579h2v2h-2zM17 121h3v2h-3zM419 520h2v2h-2zM467 172h2v2h-2zM285 364h2v2h-2zM69 83h2v3h-2zM216 188h2v3h-2zM803 201h2v2h-2zM375 60h3v2h-3zM301 733h3v2h-3zM369 364h3v3h-3zM512 93h3v3h-3zM83 711h3v2h-3zM290 182h4v3h-4zM140 450h2v2h-2zM81 434h4v2h-4zM525 268h3v2h-3zM84 57h4v2h-4zM218 678h4v2h-4zM303 269h3v2h-3zM606 714h3v2h-3zM447 711h3v2h-3zM581 202h4v3h-4zM366 511h3v2h-3zM403 412h3v2h-3zM6 723h4v2h-4zM512 387h4v3h-4zM247 83h3v3h-3zM421 313h3v3h-3zM352 138h4v2h-4zM324 258h2v2h-2zM499 274h3v2h-3zM296 478h3v2h-3zM807 477h4v3h-4zM365 48h2v2h-2zM797 408h3v2h-3zM505 248h2v3h-2zM515 774h2v2h-2zM342 337h4v3h-4zM73 570h3v2h-3zM802 40h2v2h-2zM705 277h3v2h-3zM321 168h4v3h-4zM178 53h2v2h-2zM257 303h3v3h-3zM434 390h2v3h-2zM185 698h3v2h-3zM364 471h3v3h-3zM625 183h2v2h-2zM318 294h3v3h-3zM767 303h3v3h-3zM402 756h2v2h-2zM668 134h3v2h-3zM289 156h4v2h-4zM605 759h4v2h-4zM207 600h3v2h-3zM333 162h2v2h-2zM317 707h2v2h-2zM615 585h2v3h-2zM754 701h3v2h-3zM488 708h2v2h-2zM512 386h4v2h-4zM66 546h4v2h-4zM137 186h4v2h-4zM655 133h2v3h-2zM149 293h2v3h-2zM788 140h4v2h-4zM810 56h4v3h-4zM637 677h3v3h-3zM790 749h4v2h-4zM509 479h3v3h-3zM431 466h3v2h-3zM431 255h4v2h-4zM393 494h3v3h-3zM621 194h2v3h-2zM5 76h2v2h-2zM726 378h3v2h-3zM142 600h4v2h-4zM756 290h2v2h-2zM672 595h2v2h-2zM22 699h3v2h-3zM770 669h3v3h-3zM612 139h2v2h-2zM109 615h4v2h-4zM782 250h2v2h-2zM143 313h3v2h-3zM344 431h3v2h-3zM634 165h2v2h-2zM560 52h4v3h-4zM206 128h4v2h-4zM609 118h3v2h-3zM474 474h3v2h-3zM473 241h2v3h-2zM452 322h3v3h-3zM255 254h4v2h-4zM684 569h3v2h-3zM95 302h2v3h-2zM90 505h2v2h-2zM121 768h2v3h-2zM766 110h3v3h-3zM626 373h3v3h-3zM368 119h2v2h-2zM205 195h3v2h-3zM398 568h3v2h-3zM775 484h2v2h-2zM676 623h4v3h-4zM530 401h3v2h-3zM520 348h2v2h-2zM764 566h4v3h-4zM483 741h2v3h-2zM736 76h3v2h-3zM717 97h3v2h-3zM717 185h4v2h-4zM675 427h3v3h-3zM468 483h2v3h-2zM630 328h3v2h-3zM104 740h2v2h-2zM776 596h3v2h-3zM84 341h3v3h-3zM269 477h4v2h-4zM637 757h3v3h-3zM225 539h4v3h-4zM462 488h3v2h-3zM470 599h3v2h-3zM206 273h4v3h-4zM267 133h4v2h-4zM363 410h3v2h-3zM298 587h3v2h-3zM142 618h4v2h-4zM681 608h4v2h-4zM553 559h4v2h-4zM224 440h2v2h-2zM378 492h4v2h-4zM292 158h3v3h-3zM164 715h2v2h-2zM237 215h3v2h-3zM286 89h3v3h-3zM333 721h2v2h-2zM41 571h4v2h-4zM95 126h2v2h-2zM218 86h2v2h-2zM21 779h3v2h-3zM408 262h3v2h-3zM449 745h2v2h-2zM6 469h3v2h-3zM678 579h4v2h-4zM175 594h3v2h-3zM219 363h2v3h-2zM151 105h4v2h-4zM229 432h3v3h-3zM668 307h4v3h-4zM72 36h3v2h-3zM534 113h3v2h-3zM200 355h4v2h-4zM543 504h4v2h-4zM540 285h3v2h-3zM327 658h3v2h-3zM173 436h4v2h-4zM18 738h3v2h-3zM177 244h2v2h-2zM419 565h3v2h-3zM451 410h2v2h-2zM27 622h3v2h-3zM512 393h3v2h-3zM687 506h4v3h-4zM456 683h3v2h-3zM252 353h2v2h-2zM264 178h2v3h-2zM326 560h3v2h-3zM559 240h3v3h-3zM788 628h3v2h-3zM244 98h3v2h-3zM148 734h3v2h-3zM26 529h3v3h-3zM292 199h3v2h-3zM763 353h3v2h-3zM720 753h4v3h-4zM721 268h3v3h-3zM133 734h3v3h-3zM638 739h2v2h-2zM14 529h2v2h-2zM565 607h2v3h-2zM561 464h2v3h-2zM501 655h4v2h-4zM753 302h4v3h-4zM210 599h3v2h-3zM127 642h2v2h-2zM257 148h3v3h-3zM474 574h2v2h-2zM363 376h4v2h-4zM81 228h2v2h-2zM201 111h4v2h-4zM602 716h3v3h-3zM187 84h3v2h-3zM259 265h4v3h-4zM808 378h2v3h-2zM629 127h3v2h-3zM673 426h4v3h-4zM740 404h2v3h-2zM751 494h3v3h-3zM268 651h4v3h-4zM622 355h3v2h-3zM784 259h3v2h-3zM606 164h2v2h-2zM132 408h4v2h-4zM650 161h3v2h-3zM755 656h3v2h-3zM210 206h3v2h-3zM655 56h3v3h-3zM734 538h4v3h-4zM57 105h3v3h-3zM83 666h2v3h-2zM767 264h3v3h-3zM366 37h3v2h-3zM165 725h3v2h-3zM154 332h3v2h-3zM579 115h2v2h-2zM733 546h2v2h-2zM605 197h4v2h-4zM224 90h2v2h-2zM547 521h2v2h-2zM395 64h3v2h-3zM120 105h2v2h-2zM79 714h4v2h-4zM795 114h3v3h-3zM510 235h4v2h-4zM594 676h3v2h-3zM38 386h3v2h-3zM160 359h3v2h-3zM386 428h4v2h-4zM77 580h4v2h-4zM711 314h3v2h-3zM792 487h3v2h-3zM429 588h2v2h-2zM335 719h2v2h-2zM513 382h3v2h-3zM618 387h2v2h-2zM68 122h3v2h-3zM566 728h4v2h-4zM119 673h4v2h-4zM356 733h3v2h-3zM773 622h2v3h-2zM67 639h3v3h-3zM484 470h3v2h-3zM539 98h4v2h-4zM171 698h3v2h-3zM430 592h3v2h-3zM281 573h4v3h-4zM293 371h3v2h-3zM289 148h3v2h-3zM777 223h2v3h-2zM459 220h4v2h-4zM772 430h2v2h-2zM80 321h3v2h-3zM275 341h2v2h-2zM232 156h3v2h-3zM549 251h2v3h-2zM780 600h2v3h-2zM162 302h4v2h-4zM572 306h2v2h-2zM232 737h3v3h-3zM498 400h4v2h-4zM760 759h3v2h-3zM436 213h4v3h-4zM428 335h2v2h-2zM543 354h3v2h-3zM320 358h3v2h-3zM157 161h3v2h-3zM159 347h4v3h-4zM572 184h3v2h-3zM215 282h2v2h-2zM411 145h4v2h-4zM328 323h2v2h-2zM160 105h2v3h-2zM715 389h3v3h-3zM296 606h2v2h-2zM190 532h3v3h-3zM330 446h3v2h-3zM155 396h4v3h-4zM146 433h3v2h-3zM639 731h4v2h-4zM680 537h3v2h-3zM809 172h2v3h-2zM439 360h4v2h-4zM754 581h2v2h-2zM24 108h4v2h-4zM768 518h2v2h-2zM474 740h3v3h-3zM637 433h4v2h-4zM354 441h3v2h-3zM458 250h2v2h-2zM308 277h3v2h-3zM774 43h4v2h-4zM361 337h3v3h-3zM247 344h4v3h-4zM442 321h2v2h-2zM628 128h3v3h-3zM189 209h3v3h-3zM330 716h2v2h-2zM130 115h2v2h-2zM717 319h3v2h-3zM706 208h3v2h-3zM397 655h3v2h-3zM457 620h3v2h-3zM713 67h3v3h-3zM759 560h4v2h-4zM329 526h2v3h-2zM806 224h3v2h-3zM689 603h3v2h-3zM662 641h3v3h-3zM41 41h3v2h-3zM727 481h2v2h-2zM138 221h3v2h-3zM59 354h3v2h-3zM537 493h3v3h-3zM506 400h2v3h-2zM103 367h3v2h-3zM594 136h3v3h-3zM425 276h2v2h-2zM563 57h2v2h-2zM722 125h3v2h-3zM382 612h3v2h-3zM490 287h3v2h-3zM543 444h4v2h-4zM85 250h3v3h-3zM420 667h3v2h-3zM626 249h3v3h-3zM12 766h4v3h-4zM208 727h3v3h-3zM251 517h4v2h-4zM192 382h2v3h-2zM111 389h4v2h-4zM473 108h4v2h-4zM136 231h3v2h-3zM117 316h3v2h-3zM475 236h3v2h-3zM219 449h4v2h-4zM59 582h3v2h-3zM412 98h2v3h-2zM501 67h4v2h-4zM419 640h4v2h-4zM132 503h4v3h-4zM31 362h3v3h-3zM259 577h4v2h-4zM383 315h2v2h-2zM297 30h2v3h-2zM161 421h3v2h-3zM680 724h2v2h-2zM304 108h4v2h-4zM461 112h2v3h-2zM224 781h4v3h-4zM741 747h4v2h-4zM370 131h3v3h-3zM150 424h2v3h-2zM235 330h2v2h-2zM591 219h3v3h-3zM445 733h3v2h-3zM747 74h3v2h-3zM274 222h3v2h-3zM507 746h3v3h-3zM48 765h3v3h-3zM185 624h3v2h-3zM443 753h3v2h-3zM220 157h3v3h-3zM340 720h2v2h-2zM663 120h4v2h-4zM214 446h4v3h-4zM491 222h4v3h-4zM339 632h4v2h-4zM670 175h2v2h-2zM694 81h3v2h-3zM196 703h4v3h-4zM789 378h2v3h-2zM802 415h3v2h-3zM576 297h2v2h-2zM707 781h3v2h-3zM719 583h3v2h-3zM429 691h4v2h-4zM114 285h3v3h-3zM498 31h4v2h-4zM380 531h2v2h-2zM657 94h3v2h-3zM689 526h4v2h-4zM751 692h2v3h-2zM121 589h2v3h-2zM501 246h3v3h-3zM525 347h3v3h-3zM471 49h3v2h-3zM30 763h3v2h-3zM763 346h3v2h-3zM295 722h4v2h-4zM708 234h2v2h-2zM638 654h4v2h-4zM682 714h3v3h-3zM705 780h2v2h-2zM92 345h2v3h-2zM272 649h4v2h-4zM569 739h2v2h-2zM638 418h4v2h-4zM480 413h2v2h-2zM534 395h4v2h-4zM622 474h3v2h-3zM119 327h3v2h-3zM633 501h2v2h-2zM471 310h4v3h-4zM75 96h4v2h-4zM250 761h3v2h-3zM598 387h2v2h-2zM624 598h3v2h-3zM200 509h2v3h-2zM814 259h2v2h-2zM256 580h2v2h-2zM275 180h3v2h-3zM702 537h4v2h-4zM393 265h4v2h-4zM182 477h2v2h-2zM518 643h3v3h-3zM408 568h4v2h-4zM120 534h4v2h-4zM779 566h3v2h-3zM384 537h3v2h-3zM415 113h3v2h-3zM503 329h2v2h-2zM456 408h2v2h-2zM172 243h2v2h-2zM689 197h4v2h-4zM775 149h2v2h-2zM784 169h2v3h-2zM362 259h4v2h-4zM626 766h4v2h-4zM688 530h3v2h-3zM704 700h2v3h-2zM338 45h3v2h-3zM102 536h2v3h-2zM685 234h3v2h-3zM338 455h3v3h-3zM90 389h3v2h-3zM20 248h3v3h-3zM658 390h4v3h-4zM3 640h3v3h-3zM785 781h3v2h-3zM786 450h2v2h-2zM87 412h3v3h-3zM435 198h2v2h-2zM767 649h4v3h-4zM327 705h4v3h-4zM426 115h4v2h-4zM600 675h3v2h-3zM415 702h3v2h-3zM168 673h2v3h-2zM507 430h3v2h-3zM590 616h3v2h-3zM245 379h2v2h-2zM465 391h2v2h-2zM694 88h3v2h-3zM338 202h4v2h-4zM380 245h2v3h-2zM472 163h3v2h-3zM308 451h2v2h-2zM714 643h2v2h-2zM303 544h2v2h-2zM263 740h2v3h-2zM326 191h2v3h-2zM690 202h2v2h-2zM350 596h4v2h-4zM657 120h4v2h-4zM560 288h3v2h-3zM414 482h2v2h-2zM727 224h2v2h-2zM88 620h3v2h-3zM405 440h2v2h-2zM772 637h3v2h-3zM63 302h4v2h-4zM685 613h4v3h-4zM640 315h4v2h-4zM701 276h2v2h-2zM228 165h2v2h-2zM240 299h4v2h-4zM455 113h2v2h-2zM146 90h3v2h-3zM544 668h3v3h-3zM202 329h2v2h-2zM789 274h3v2h-3zM104 346h3v2h-3zM527 651h3v2h-3zM684 339h4v2h-4zM302 737h3v3h-3zM512 47h2v3h-2zM328 432h3v2h-3zM810 531h3v3h-3zM202 161h2v3h-2zM753 214h3v3h-3zM274 397h3v2h-3zM725 424h4v3h-4zM655 260h3v2h-3zM168 504h2v2h-2zM646 348h2v2h-2zM117 608h3v2h-3zM716 663h3v2h-3zM359 279h4v3h-4zM229 289h3v2h-3zM499 180h2v3h-2zM378 290h3v2h-3zM365 746h2v2h-2zM319 603h2v2h-2zM193 766h2v3h-2zM54 699h3v2h-3zM81 758h2v3h-2zM220 352h2v3h-2zM255 140h4v2h-4zM414 109h3v3h-3zM474 479h3v2h-3zM155 471h4v3h-4zM200 94h2v3h-2zM623 538h3v3h-3zM248 336h2v2h-2zM204 712h3v3h-3zM477 283h4v2h-4zM752 704h2v2h-2zM319 45h3v2h-3zM304 350h3v2h-3zM494 658h3v3h-3zM573 766h3v2h-3zM766 731h3v2h-3zM200 359h3v2h-3zM136 290h4v2h-4zM200 330h4v2h-4zM663 356h3v3h-3zM529 316h3v2h-3zM228 207h4v3h-4zM118 225h2v2h-2zM556 627h2v2h-2zM781 129h4v2h-4zM407 612h4v3h-4zM248 471h2v3h-2zM14 608h3v2h-3zM94 229h2v3h-2zM311 757h3v2h-3zM73 352h3v2h-3zM479 381h3v3h-3zM111 436h3v2h-3zM4 765h3v2h-3zM71 81h3v2h-3zM449 436h4v2h-4zM424 33h2v3h-2zM408 611h3v2h-3zM570 737h4v2h-4zM128 441h3v3h-3zM539 86h3v2h-3zM586 704h3v3h-3zM788 612h3v3h-3zM482 605h4v2h-4zM336 424h2v2h-2zM390 472h3v3h-3zM294 760h3v3h-3zM649 262h3v3h-3zM351 343h4v2h-4zM210 531h4v2h-4zM319 603h3v2h-3zM679 66h3v3h-3zM475 153h3v2h-3zM652 638h3v2h-3zM45 194h2v2h-2zM639 760h2v3h-2zM452 254h2v2h-2zM44 492h3v2h-3zM710 637h3v2h-3zM573 677h3v2h-3zM498 676h2v2h-2zM409 454h3v2h-3zM687 293h2v2h-2zM461 675h3v2h-3zM740 362h3v2h-3zM779 106h4v2h-4zM262 323h2v2h-2zM44 98h2v2h-2zM411 493h3v2h-3zM514 324h4v2h-4zM82 170h4v3h-4zM558 685h3v2h-3zM279 624h3v3h-3zM381 549h4v2h-4zM579 53h2v3h-2zM599 506h3v2h-3zM756 117h4v2h-4zM156 413h4v2h-4zM809 314h3v2h-3zM151 701h2v2h-2zM156 778h4v2h-4zM576 468h2v3h-2zM434 409h4v2h-4zM251 239h2v2h-2zM618 536h4v2h-4z"/><path fill="#070746" d="M406 481h3v3h-3zM138 270h2v2h-2zM214 614h2v3h-2zM378 398h3v3h-3zM398 512h4v2h-4zM174 368h4v2h-4zM394 242h3v2h-3zM623 60h3v3h-3zM363 334h2v3h-2zM512 766h3v3h-3zM222 573h3v2h-3zM413 661h2v2h-2zM206 601h3v2h-3zM722 535h3v3h-3zM24 135h3v2h-3zM555 643h4v2h-4zM15 268h3v2h-3zM408 69h3v2h-3zM252 636h2v3h-2zM317 537h3v2h-3zM279 642h3v3h-3zM25 390h4v2h-4zM303 40h4v2h-4zM27 667h2v3h-2zM603 259h4v3h-4zM177 337h4v2h-4zM731 449h3v2h-3zM314 496h2v2h-2zM473 142h2v2h-2zM156 315h3v2h-3zM28 660h2v2h-2zM227 612h3v2h-3zM511 108h3v2h-3zM263 549h3v2h-3zM706 379h3v2h-3zM292 527h3v2h-3zM481 411h3v2h-3zM431 674h3v2h-3zM259 664h4v3h-4zM402 757h3v3h-3zM399 709h3v2h-3zM8 334h2v2h-2zM552 139h3v2h-3zM379 536h3v3h-3zM670 347h3v2h-3zM748 667h2v2h-2zM263 773h3v3h-3zM265 370h3v2h-3zM201 26h3v2h-3zM599 469h3v2h-3zM605 703h2v3h-2zM171 682h3v3h-3zM244 150h3v2h-3zM56 240h3v3h-3zM387 223h4v2h-4zM606 550h4v3h-4zM548 773h2v2h-2zM784 212h3v3h-3zM769 693h3v2h-3zM344 242h3v3h-3zM244 712h3v3h-3zM744 227h3v3h-3zM95 98h3v2h-3zM139 736h4v2h-4zM435 529h2v2h-2zM485 274h3v2h-3zM328 527h2v3h-2zM663 238h4v2h-4zM684 149h3v2h-3zM271 523h4v2h-4zM187 76h3v3h-3zM280 754h3v2h-3zM476 729h3v2h-3zM666 263h4v2h-4zM213 392h3v2h-3zM619 630h4v2h-4zM149 118h4v2h-4zM308 577h3v2h-3zM364 637h3v2h-3zM22 731h3v2h-3zM684 174h3v2h-3zM99 498h3v2h-3zM816 58h3v3h-3zM781 577h3v2h-3zM673 237h3v2h-3zM651 135h2v3h-2zM37 263h3v2h-3zM686 684h4v3h-4zM284 184h2v2h-2zM769 119h3v3h-3zM64 462h3v2h-3zM390 588h2v2h-2zM208 146h3v3h-3zM382 705h3v2h-3zM568 671h2v3h-2zM270 511h3v3h-3zM50 361h4v2h-4zM396 715h3v2h-3zM606 405h3v3h-3zM465 496h3v2h-3zM137 386h2v2h-2zM777 482h4v2h-4zM797 338h3v3h-3zM588 304h3v2h-3zM337 551h4v2h-4zM561 158h4v2h-4zM409 96h4v2h-4zM47 361h4v2h-4zM446 154h2v3h-2zM659 511h3v3h-3zM302 337h3v2h-3zM463 470h2v2h-2zM563 71h4v2h-4zM504 514h2v3h-2zM128 111h4v2h-4zM47 365h3v3h-3zM501 554h3v2h-3zM29 477h2v3h-2zM539 22h2v2h-2zM739 198h3v3h-3zM51 740h4v2h-4zM365 641h2v2h-2zM444 262h3v2h-3zM460 163h3v2h-3zM92 539h4v2h-4zM521 99h2v2h-2zM109 97h4v3h-4zM411 175h3v3h-3zM744 195h3v3h-3zM238 614h2v2h-2zM738 248h3v2h-3zM806 583h3v2h-3zM760 515h3v3h-3zM654 502h3v2h-3zM701 280h3v2h-3zM110 52h3v2h-3zM87 778h2v2h-2zM696 585h4v3h-4zM552 221h4v3h-4zM675 351h3v2h-3zM254 345h4v3h-4zM652 595h4v2h-4zM105 89h3v3h-3zM440 606h2v3h-2zM458 546h3v2h-3zM288 28h3v2h-3zM297 697h3v2h-3zM624 401h3v3h-3zM162 427h3v2h-3zM424 190h2v2h-2zM289 46h2v2h-2zM197 126h3v3h-3zM447 643h2v3h-2zM352 478h3v2h-3zM278 588h3v2h-3zM520 648h2v3h-2zM728 417h3v2h-3zM147 140h4v3h-4zM637 202h2v2h-2zM84 412h3v2h-3zM457 201h3v3h-3zM489 227h3v2h-3zM376 509h3v2h-3zM347 115h2v3h-2zM197 263h3v2h-3zM59 309h2v3h-2zM95 572h3v3h-3zM85 565h2v2h-2zM205 99h2v2h-2zM230 33h3v3h-3zM244 287h3v3h-3zM49 428h4v2h-4zM584 158h3v2h-3zM77 657h4v2h-4zM572 749h2v2h-2zM223 662h2v3h-2zM298 758h2v2h-2zM409 623h2v3h-2zM489 483h3v2h-3zM184 748h4v2h-4zM420 534h2v2h-2zM140 133h4v2h-4zM517 565h3v2h-3zM536 247h4v2h-4zM524 199h4v3h-4zM765 230h3v2h-3zM362 35h2v2h-2zM786 520h4v2h-4zM794 685h2v2h-2zM394 115h3v2h-3zM58 206h3v3h-3zM738 248h4v2h-4zM589 733h3v3h-3zM713 136h4v2h-4zM413 670h3v3h-3zM19 761h2v2h-2zM446 478h3v2h-3zM635 531h4v3h-4zM226 296h3v2h-3zM576 383h3v2h-3zM258 294h3v2h-3zM87 32h3v2h-3zM216 345h3v3h-3zM723 479h3v3h-3zM791 488h2v3h-2zM181 96h2v3h-2zM324 468h3v2h-3zM685 690h2v3h-2zM734 386h4v2h-4zM201 772h3v2h-3zM449 769h3v2h-3zM438 69h3v2h-3zM572 313h4v3h-4zM9 590h4v3h-4zM57 675h3v2h-3zM356 195h2v2h-2zM813 653h4v3h-4zM618 501h4v2h-4zM578 149h3v3h-3zM331 748h4v2h-4zM574 82h3v2h-3zM562 61h4v2h-4zM390 326h4v2h-4zM179 129h3v3h-3zM26 578h2v2h-2zM99 310h3v3h-3zM643 500h4v2h-4zM427 33h4v3h-4zM51 536h4v3h-4zM117 415h3v2h-3zM513 572h4v3h-4zM388 129h3v2h-3zM653 363h3v3h-3zM391 610h3v2h-3zM779 72h2v2h-2zM559 353h2v2h-2zM238 547h3v2h-3zM803 106h4v2h-4zM477 438h2v3h-2zM693 366h4v2h-4zM446 298h3v2h-3zM9 84h3v3h-3zM433 264h3v2h-3zM482 314h3v2h-3zM259 179h2v2h-2zM193 579h2v2h-2zM562 710h3v3h-3zM327 429h4v2h-4zM344 226h4v2h-4zM770 321h4v3h-4zM688 154h3v2h-3zM241 653h3v2h-3zM9 758h3v3h-3zM2 652h3v2h-3zM14 469h4v3h-4zM212 88h4v2h-4zM133 26h3v2h-3zM519 686h2v3h-2zM373 290h3v2h-3zM395 448h4v3h-4zM109 318h4v2h-4zM56 53h2v2h-2zM32 451h4v2h-4zM702 341h4v2h-4zM621 659h2v3h-2zM505 84h3v2h-3zM109 682h3v2h-3zM432 632h3v2h-3zM251 82h2v3h-2zM762 614h4v3h-4zM743 640h3v2h-3zM432 413h3v2h-3zM241 526h3v3h-3zM288 654h3v2h-3zM73 395h3v3h-3zM327 549h3v2h-3zM109 691h3v2h-3zM21 740h3v2h-3zM782 635h3v2h-3zM596 225h3v2h-3zM8 315h2v3h-2zM591 70h3v2h-3zM477 267h3v3h-3zM270 295h2v2h-2zM327 729h4v2h-4zM644 249h3v3h-3zM526 68h4v3h-4zM184 293h4v3h-4zM27 678h2v2h-2zM695 480h3v2h-3zM101 779h3v2h-3zM292 69h3v3h-3zM516 269h4v2h-4zM730 262h3v3h-3zM747 322h4v2h-4zM764 145h3v2h-3zM768 486h3v2h-3zM235 119h3v3h-3zM242 394h4v2h-4zM712 754h4v3h-4zM543 677h4v2h-4zM626 362h2v3h-2zM588 235h3v2h-3zM712 37h3v2h-3zM545 236h3v3h-3zM331 518h2v2h-2zM50 760h3v2h-3zM315 593h4v3h-4zM347 575h4v2h-4zM346 500h4v2h-4zM100 715h2v3h-2zM549 653h3v3h-3zM54 485h3v3h-3zM425 459h3v3h-3zM282 399h3v2h-3zM341 778h3v2h-3zM402 300h3v2h-3zM117 177h3v2h-3zM608 493h3v2h-3zM642 248h4v2h-4zM319 739h3v2h-3zM233 733h4v2h-4zM692 383h3v3h-3zM718 90h4v2h-4zM469 234h3v3h-3zM788 581h3v2h-3zM691 459h3v2h-3zM268 540h2v3h-2zM576 679h4v3h-4zM28 527h4v2h-4zM574 325h4v2h-4zM116 759h4v2h-4zM576 334h4v2h-4zM525 422h3v2h-3zM675 665h4v3h-4zM436 662h3v3h-3zM568 475h2v2h-2zM815 116h4v2h-4zM305 482h2v3h-2zM465 82h2v3h-2zM145 69h3v3h-3zM299 426h4v3h-4zM353 279h3v2h-3zM380 269h2v2h-2zM243 190h4v2h-4zM140 68h2v3h-2zM60 51h2v2h-2zM142 712h2v2h-2zM166 552h3v3h-3zM669 485h3v3h-3zM714 773h3v2h-3zM218 666h3v3h-3zM35 400h3v2h-3zM688 736h4v2h-4zM413 699h4v2h-4zM612 569h2v2h-2zM785 647h3v3h-3zM203 107h4v2h-4zM571 616h4v2h-4zM575 645h4v3h-4zM284 583h3v3h-3zM779 336h2v3h-2zM452 737h3v2h-3zM712 62h2v2h-2zM327 210h2v3h-2zM31 595h3v3h-3zM559 350h3v3h-3zM38 208h2v3h-2zM306 252h4v3h-4zM692 434h3v2h-3zM667 519h3v2h-3zM771 150h3v3h-3zM570 724h4v2h-4zM384 98h2v2h-2zM493 500h3v2h-3zM792 420h3v2h-3zM740 192h4v2h-4zM792 167h2v2h-2zM100 362h2v3h-2zM117 335h3v2h-3zM485 151h2v2h-2zM424 650h3v2h-3zM184 627h3v2h-3zM794 445h2v3h-2zM51 752h2v2h-2zM366 763h3v2h-3zM697 693h3v3h-3zM88 489h3v2h-3zM47 111h2v2h-2zM52 541h3v2h-3zM785 340h2v3h-2zM534 318h4v2h-4zM428 127h3v3h-3zM715 348h4v3h-4zM34 80h3v3h-3zM751 637h3v2h-3zM162 52h2v3h-2zM382 710h2v2h-2zM312 139h3v2h-3zM490 520h3v3h-3zM320 392h2v2h-2zM580 441h2v3h-2zM799 418h4v3h-4zM163 115h3v2h-3zM562 422h3v2h-3zM648 403h3v2h-3zM304 600h3v3h-3zM608 397h4v2h-4zM214 746h4v2h-4zM448 204h2v2h-2zM269 318h3v2h-3zM318 756h4v3h-4zM233 519h3v3h-3zM50 274h3v3h-3zM187 630h2v3h-2zM208 624h3v3h-3zM60 708h4v2h-4zM125 671h3v3h-3zM459 629h3v3h-3zM263 267h2v2h-2zM214 124h2v3h-2zM385 470h3v2h-3zM62 82h4v3h-4zM402 521h3v2h-3zM204 550h2v3h-2zM167 180h4v2h-4zM86 94h3v2h-3zM304 222h3v2h-3zM757 65h3v3h-3zM554 320h3v2h-3zM303 561h3v3h-3zM262 722h4v2h-4zM684 528h3v2h-3zM443 219h2v2h-2zM671 613h3v3h-3zM317 766h2v2h-2zM258 316h4v3h-4zM753 297h3v2h-3zM31 482h3v2h-3zM153 236h2v3h-2zM303 532h4v2h-4zM67 761h4v2h-4zM612 655h4v3h-4zM217 419h2v2h-2zM650 461h3v2h-3zM4 550h3v3h-3zM289 107h2v2h-2zM439 394h4v3h-4zM562 458h4v2h-4zM92 45h2v3h-2zM456 133h3v2h-3zM518 220h3v3h-3zM115 778h2v3h-2zM535 453h4v2h-4zM513 517h4v2h-4zM703 206h2v2h-2zM345 441h3v3h-3zM696 353h3v3h-3zM417 736h2v2h-2zM21 682h3v2h-3zM577 731h3v2h-3zM641 698h3v2h-3zM152 188h4v2h-4zM625 57h3v3h-3zM158 717h3v2h-3zM402 427h4v2h-4zM694 182h3v2h-3zM393 431h3v2h-3zM454 105h4v2h-4zM583 461h4v2h-4zM460 663h2v3h-2zM569 363h3v2h-3zM425 186h3v2h-3zM639 260h3v2h-3zM335 678h4v2h-4zM90 621h2v2h-2zM287 625h3v2h-3zM194 557h3v2h-3zM346 578h3v3h-3zM651 362h3v2h-3zM105 436h3v2h-3zM494 168h3v2h-3zM591 340h3v3h-3zM803 650h3v2h-3zM427 319h4v2h-4zM200 54h4v3h-4zM46 563h3v2h-3zM262 394h2v2h-2zM275 423h3v3h-3zM326 401h2v2h-2zM274 391h3v2h-3zM270 725h2v2h-2zM536 513h2v3h-2zM456 406h4v2h-4zM698 301h3v2h-3zM54 350h4v2h-4zM770 382h3v3h-3zM230 612h2v2h-2zM218 224h3v2h-3zM324 580h3v3h-3zM375 216h2v3h-2zM472 359h3v2h-3zM188 573h4v2h-4zM620 486h4v2h-4zM112 131h3v2h-3zM758 49h3v3h-3zM276 40h2v2h-2zM437 311h4v3h-4zM798 701h3v3h-3zM610 701h2v2h-2zM79 162h3v3h-3zM195 124h4v2h-4zM460 605h3v2h-3zM132 538h3v2h-3zM658 504h4v2h-4zM395 712h2v2h-2zM272 101h3v3h-3zM11 125h3v2h-3zM747 653h2v2h-2zM781 434h2v2h-2zM144 184h2v3h-2zM68 726h4v2h-4zM22 255h4v2h-4zM802 622h4v3h-4zM524 118h3v2h-3zM234 564h3v3h-3zM532 211h3v2h-3zM92 668h4v2h-4zM269 702h3v2h-3zM375 570h2v3h-2zM769 155h3v2h-3zM435 388h4v3h-4zM803 277h4v2h-4zM94 31h3v2h-3zM338 212h4v3h-4zM133 160h3v2h-3zM190 121h4v3h-4zM160 459h3v3h-3zM745 51h3v2h-3zM459 273h4v3h-4zM528 622h4v2h-4zM679 369h3v2h-3zM172 747h2v3h-2zM628 780h2v2h-2zM546 472h3v2h-3zM31 105h2v2h-2zM498 576h3v3h-3zM215 702h2v3h-2zM547 535h3v2h-3zM206 188h3v3h-3zM301 728h3v2h-3zM592 599h3v2h-3zM674 324h3v3h-3zM386 500h4v3h-4zM738 267h4v2h-4zM812 535h3v2h-3zM350 549h3v2h-3zM273 471h3v3h-3zM552 161h3v2h-3zM811 422h3v2h-3zM501 546h4v2h-4zM749 584h4v3h-4zM724 107h4v2h-4zM626 482h4v2h-4zM131 248h3v2h-3zM552 122h3v2h-3zM555 190h3v2h-3zM555 115h3v2h-3zM61 85h3v2h-3zM40 460h3v2h-3zM16 217h3v3h-3zM627 333h4v2h-4zM180 642h3v3h-3zM652 673h3v2h-3zM102 605h3v2h-3zM48 397h4v2h-4zM66 674h2v2h-2zM786 66h4v3h-4zM265 315h3v3h-3zM503 306h3v3h-3zM146 606h3v2h-3zM161 548h4v2h-4zM218 29h3v3h-3zM79 33h4v3h-4zM535 208h3v2h-3zM187 565h2v2h-2zM723 352h3v2h-3zM139 180h2v2h-2zM191 455h2v2h-2zM97 678h3v2h-3zM362 341h2v2h-2zM385 598h2v2h-2zM710 159h4v3h-4zM497 197h3v2h-3zM184 704h4v2h-4zM201 424h3v3h-3zM356 462h4v3h-4zM20 720h4v3h-4zM326 585h4v3h-4zM798 407h2v2h-2zM314 225h3v3h-3zM410 657h2v2h-2zM300 477h2v3h-2zM712 710h3v2h-3zM199 625h3v3h-3zM703 542h3v2h-3zM530 417h2v2h-2zM733 177h2v2h-2zM269 546h3v2h-3zM359 162h2v2h-2zM145 130h3v2h-3zM538 779h3v3h-3zM249 60h4v2h-4zM248 467h2v2h-2zM465 493h4v2h-4zM512 411h4v3h-4zM69 117h3v3h-3zM190 631h3v3h-3zM143 239h3v2h-3zM218 189h2v2h-2zM796 718h3v2h-3zM143 704h3v2h-3zM459 211h3v3h-3zM221 502h3v2h-3zM516 507h3v3h-3zM193 108h2v2h-2zM161 85h3v2h-3zM811 671h4v3h-4zM243 711h3v2h-3zM689 57h3v3h-3zM191 535h3v2h-3zM416 668h3v2h-3zM598 133h3v3h-3zM185 87h4v2h-4zM92 583h4v2h-4zM781 508h3v2h-3zM201 465h2v2h-2zM536 559h3v3h-3zM284 161h3v2h-3zM50 56h2v2h-2zM3 401h4v2h-4zM423 603h2v2h-2zM758 758h4v2h-4zM237 255h4v2h-4zM591 766h4v2h-4zM275 75h2v2h-2zM222 257h4v3h-4zM267 756h3v2h-3zM384 91h3v2h-3zM50 293h4v2h-4zM702 405h3v2h-3zM264 36h3v2h-3zM521 733h4v2h-4zM672 217h3v3h-3zM516 444h3v3h-3zM143 768h2v3h-2zM241 154h4v2h-4zM436 781h3v2h-3zM263 128h3v2h-3zM726 280h3v2h-3zM165 757h3v3h-3zM5 512h4v3h-4zM591 107h4v2h-4zM347 555h3v2h-3zM633 431h4v2h-4zM52 206h4v3h-4zM671 259h2v3h-2zM779 178h3v2h-3zM756 171h3v2h-3zM400 763h2v3h-2zM264 388h3v3h-3zM122 309h3v3h-3zM225 519h3v3h-3zM536 385h3v2h-3zM273 424h4v3h-4zM639 274h4v2h-4zM198 609h3v2h-3zM399 318h3v2h-3zM693 335h4v2h-4zM251 201h4v2h-4zM753 741h3v3h-3zM514 31h2v2h-2zM521 583h4v2h-4zM143 651h3v2h-3zM466 83h2v3h-2zM14 192h3v2h-3zM401 65h2v2h-2zM177 441h4v2h-4zM104 419h2v2h-2zM622 95h3v3h-3zM608 443h3v3h-3zM373 772h3v2h-3zM628 664h3v3h-3zM623 524h2v2h-2zM693 150h4v2h-4zM419 233h3v2h-3zM166 777h4v2h-4zM303 260h4v3h-4zM423 403h4v2h-4zM679 202h3v2h-3zM800 489h4v3h-4zM124 637h3v2h-3zM460 767h4v2h-4zM346 404h2v3h-2zM573 371h2v3h-2zM480 325h4v2h-4zM670 528h3v2h-3zM49 776h2v2h-2zM83 227h3v3h-3zM429 202h3v2h-3zM153 379h2v2h-2zM511 467h4v2h-4zM323 709h2v2h-2zM36 712h2v2h-2zM290 48h3v2h-3zM65 623h4v3h-4zM460 598h2v3h-2zM581 513h3v2h-3zM734 397h4v2h-4zM793 727h3v3h-3zM462 261h3v2h-3zM506 656h3v2h-3zM705 569h3v2h-3zM419 316h4v3h-4zM139 562h3v2h-3zM156 614h2v3h-2zM248 327h4v2h-4zM382 52h2v3h-2zM94 318h4v2h-4zM126 705h4v2h-4zM572 299h4v2h-4zM790 502h4v3h-4zM450 162h2v2h-2zM74 684h4v2h-4zM322 548h4v2h-4zM91 444h3v2h-3zM421 65h4v2h-4zM706 246h3v2h-3zM429 166h3v2h-3zM279 217h3v2h-3zM675 75h3v2h-3zM606 247h2v3h-2zM750 382h3v2h-3zM78 190h3v2h-3zM563 460h3v2h-3zM174 480h3v2h-3zM310 100h3v2h-3zM90 61h2v2h-2zM748 638h3v2h-3zM501 537h3v3h-3zM782 595h2v3h-2zM618 277h3v3h-3zM590 125h4v2h-4zM556 34h2v2h-2zM591 100h4v2h-4zM506 99h3v2h-3zM502 276h3v2h-3zM544 151h4v2h-4zM789 728h3v3h-3zM215 303h2v2h-2zM675 394h2v2h-2zM626 747h3v2h-3zM92 779h4v2h-4zM385 690h3v2h-3zM612 102h2v2h-2zM769 116h2v2h-2zM534 381h3v2h-3zM355 124h3v3h-3zM206 112h3v2h-3zM799 41h3v3h-3zM341 89h3v3h-3zM342 352h3v2h-3zM229 425h3v2h-3zM814 643h4v3h-4zM430 176h3v3h-3zM334 423h2v2h-2zM182 196h3v2h-3zM392 395h3v3h-3zM346 198h3v2h-3zM418 73h3v3h-3z"/><path fill="#08085a" d="M93 569h2v3h-2zM261 340h3v2h-3zM72 594h4v2h-4zM645 221h3v2h-3zM218 226h2v2h-2zM116 527h4v2h-4zM650 459h3v2h-3zM244 162h2v2h-2zM30 241h2v2h-2zM411 575h2v2h-2zM133 736h2v2h-2zM759 660h3v2h-3zM703 211h4v2h-4zM25 56h4v2h-4zM287 137h3v2h-3zM291 697h3v2h-3zM230 457h3v2h-3zM312 524h3v2h-3zM121 348h3v2h-3zM84 298h3v2h-3zM359 363h3v3h-3zM814 546h2v3h-2zM117 487h3v3h-3zM694 663h3v2h-3zM106 644h3v3h-3zM607 673h2v2h-2zM658 56h3v2h-3zM56 321h4v3h-4zM432 595h3v3h-3zM304 267h2v2h-2zM109 331h3v2h-3zM315 141h3v2h-3zM184 303h2v2h-2zM675 513h3v3h-3zM322 654h3v3h-3zM785 264h2v2h-2zM351 450h4v3h-4zM305 286h3v3h-3zM395 57h3v2h-3zM463 542h4v2h-4zM272 268h4v2h-4zM757 724h4v3h-4zM190 57h3v3h-3zM215 203h3v3h-3zM405 116h2v2h-2zM749 503h2v2h-2zM557 676h2v2h-2zM692 119h2v2h-2zM121 546h3v2h-3zM448 724h4v2h-4zM101 270h3v2h-3zM92 574h3v3h-3zM380 371h3v3h-3zM491 244h3v2h-3zM139 447h3v2h-3zM74 207h2v2h-2zM26 467h4v3h-4zM87 304h3v3h-3zM181 138h3v3h-3zM418 421h2v3h-2zM511 604h3v2h-3zM761 418h2v2h-2zM264 52h3v2h-3zM312 654h4v3h-4zM427 370h3v2h-3zM172 658h4v3h-4zM362 460h2v2h-2zM88 670h3v2h-3zM330 363h3v2h-3zM608 379h4v3h-4zM559 655h4v3h-4zM650 48h4v3h-4zM513 29h3v2h-3zM195 514h2v3h-2zM173 566h4v2h-4zM388 599h2v2h-2zM344 27h4v2h-4zM403 367h2v3h-2zM762 286h3v3h-3zM575 292h3v2h-3zM485 224h4v2h-4zM543 441h4v2h-4zM484 120h3v2h-3zM104 429h4v2h-4zM353 413h4v3h-4zM543 251h3v2h-3zM473 488h3v3h-3zM615 613h4v2h-4zM505 765h3v2h-3zM697 487h3v2h-3zM542 304h3v2h-3zM316 399h4v3h-4zM158 199h3v2h-3zM80 670h3v2h-3zM261 462h4v2h-4zM601 287h2v2h-2zM255 37h2v2h-2zM746 30h4v3h-4zM521 35h3v3h-3zM649 758h2v3h-2zM558 156h3v2h-3zM51 570h2v3h-2zM249 776h3v2h-3zM47 648h3v3h-3zM217 275h4v2h-4zM717 776h2v2h-2zM750 105h2v2h-2zM128 597h4v3h-4zM57 701h3v2h-3zM520 92h4v3h-4zM152 376h3v2h-3zM719 235h3v3h-3zM361 162h3v2h-3zM490 527h2v3h-2zM537 140h4v3h-4zM182 652h4v3h-4zM684 501h2v2h-2zM498 184h2v2h-2zM282 548h3v2h-3zM766 563h3v2h-3zM791 735h2v3h-2zM410 361h3v2h-3zM595 668h2v2h-2zM262 725h2v2h-2zM810 474h4v3h-4zM321 397h3v2h-3zM741 464h4v2h-4zM752 426h2v3h-2zM237 485h3v2h-3zM87 460h2v2h-2zM569 72h3v3h-3zM685 218h3v3h-3zM42 35h2v2h-2zM781 628h2v2h-2zM488 447h3v3h-3zM660 439h2v2h-2zM490 523h3v2h-3zM380 582h3v3h-3zM787 200h4v2h-4zM545 539h4v3h-4zM407 456h2v2h-2zM85 258h3v3h-3zM360 275h3v2h-3zM424 148h2v2h-2zM141 37h3v3h-3zM292 536h3v3h-3zM215 758h4v2h-4zM584 81h2v3h-2zM573 136h2v2h-2zM137 718h3v3h-3zM592 774h3v3h-3zM463 306h3v2h-3zM418 63h3v2h-3zM418 731h3v3h-3zM536 437h3v2h-3zM160 448h2v3h-2zM172 774h2v3h-2zM512 701h2v2h-2zM657 308h3v3h-3zM680 776h2v2h-2zM54 199h3v2h-3zM575 96h2v3h-2zM274 605h4v2h-4zM406 614h3v2h-3zM546 25h3v2h-3zM643 108h3v2h-3zM662 604h2v2h-2zM133 678h2v2h-2zM125 36h3v2h-3zM683 172h4v2h-4zM330 435h3v2h-3zM482 172h3v2h-3zM14 416h2v2h-2zM179 298h3v2h-3zM240 555h4v2h-4zM115 184h2v3h-2zM380 422h4v3h-4zM467 36h3v3h-3zM528 370h2v3h-2zM485 452h4v2h-4zM400 386h4v2h-4zM690 565h2v2h-2zM357 509h4v2h-4zM499 247h3v3h-3zM113 533h3v2h-3zM651 491h3v2h-3zM66 429h3v2h-3zM340 645h4v2h-4zM438 431h3v2h-3zM340 771h3v2h-3zM10 622h3v2h-3zM223 419h3v3h-3zM218 401h4v2h-4zM458 202h3v2h-3zM755 353h4v2h-4zM221 216h4v3h-4zM375 574h3v2h-3zM149 35h3v2h-3zM515 758h3v2h-3zM581 599h3v2h-3zM54 739h2v2h-2zM149 437h3v2h-3zM571 609h3v2h-3zM86 571h3v2h-3zM26 72h3v3h-3zM28 335h2v2h-2zM276 81h4v3h-4zM604 182h3v3h-3zM214 213h3v2h-3zM628 739h2v3h-2zM759 324h2v2h-2zM465 654h2v3h-2zM474 441h2v2h-2zM320 146h3v2h-3zM345 416h3v3h-3zM80 286h4v3h-4zM506 301h3v2h-3zM680 408h3v3h-3zM700 176h3v2h-3zM427 239h4v3h-4zM568 406h3v2h-3zM254 509h3v2h-3zM289 607h2v3h-2zM452 61h3v3h-3zM112 237h3v2h-3zM800 642h4v2h-4zM116 147h4v3h-4zM224 113h3v3h-3zM516 605h4v3h-4zM135 294h3v2h-3zM416 304h2v2h-2zM154 526h3v2h-3zM330 523h3v2h-3zM172 470h2v2h-2zM248 208h3v2h-3zM101 199h2v2h-2zM665 691h2v2h-2zM314 632h3v2h-3zM460 586h4v3h-4zM1 170h3v2h-3zM171 239h2v3h-2zM28 453h2v2h-2zM650 632h3v2h-3zM698 484h3v2h-3zM716 747h4v2h-4zM595 412h3v2h-3zM755 484h2v2h-2zM750 704h4v2h-4zM53 116h2v2h-2zM35 95h4v2h-4zM668 539h4v2h-4zM656 112h2v3h-2zM176 63h2v3h-2zM219 344h4v2h-4zM471 277h3v2h-3zM619 175h2v2h-2zM261 187h3v3h-3zM446 453h3v2h-3zM317 194h2v2h-2zM381 173h3v3h-3zM451 237h2v2h-2zM78 267h4v3h-4zM223 63h2v2h-2zM129 219h3v2h-3zM239 412h3v2h-3zM781 702h3v2h-3zM588 369h4v2h-4zM212 331h4v2h-4zM115 571h4v2h-4zM263 590h3v3h-3zM54 509h3v2h-3zM43 105h2v2h-2zM797 326h4v3h-4zM147 639h3v2h-3zM571 446h2v2h-2zM34 597h3v2h-3zM430 542h4v2h-4zM610 768h3v3h-3zM276 576h2v2h-2zM178 135h2v3h-2zM810 464h4v2h-4zM449 634h4v2h-4zM789 266h4v2h-4zM228 652h4v2h-4zM371 221h3v2h-3zM783 162h2v2h-2zM222 488h2v3h-2zM337 75h2v2h-2zM756 121h3v3h-3zM275 780h2v2h-2zM714 663h2v2h-2zM442 644h4v3h-4zM431 330h3v3h-3zM363 674h4v2h-4zM3 634h4v3h-4zM211 262h2v2h-2zM516 123h3v2h-3zM197 739h4v2h-4zM347 389h2v2h-2zM251 512h3v2h-3zM681 300h2v3h-2zM454 645h4v2h-4zM302 410h3v3h-3zM345 320h3v2h-3zM224 552h4v2h-4zM422 342h3v2h-3zM116 672h3v2h-3zM662 139h3v2h-3zM471 763h3v2h-3zM2 331h3v2h-3zM130 671h3v3h-3zM417 665h2v3h-2zM435 216h3v3h-3zM403 249h3v2h-3zM441 206h3v3h-3zM473 25h4v2h-4zM588 426h3v2h-3zM579 225h3v2h-3zM100 479h4v2h-4zM12 588h3v2h-3zM346 225h3v2h-3zM777 114h2v2h-2zM764 602h3v3h-3zM159 259h3v2h-3zM761 516h4v2h-4zM600 358h3v2h-3zM528 541h3v3h-3zM256 544h3v2h-3zM180 706h4v2h-4zM671 319h2v2h-2zM317 64h3v2h-3zM543 489h4v2h-4zM11 450h3v2h-3zM395 63h4v2h-4zM812 77h4v3h-4zM93 175h3v2h-3zM653 384h2v2h-2zM539 396h3v3h-3zM192 636h2v3h-2zM679 711h3v2h-3zM654 527h3v3h-3zM152 562h2v3h-2zM790 664h3v3h-3zM807 455h2v2h-2zM144 411h4v2h-4zM113 734h2v2h-2zM193 581h3v3h-3zM109 241h4v3h-4zM794 518h4v2h-4zM324 114h2v2h-2zM349 488h3v3h-3zM512 138h4v2h-4zM95 559h4v3h-4zM713 274h3v2h-3zM684 65h3v2h-3zM706 637h3v3h-3zM689 556h3v2h-3zM65 279h4v2h-4zM760 149h4v3h-4zM268 362h3v2h-3zM159 67h3v3h-3zM367 144h4v2h-4zM678 62h3v2h-3zM676 419h2v2h-2zM694 275h3v2h-3zM599 365h3v2h-3zM508 605h4v2h-4zM188 753h4v2h-4zM799 426h2v2h-2zM689 629h4v2h-4zM529 574h3v2h-3zM370 542h3v2h-3zM639 260h4v2h-4zM350 271h3v2h-3zM279 383h4v2h-4zM242 687h4v2h-4zM54 222h3v2h-3zM226 387h2v2h-2zM322 224h3v3h-3zM593 222h3v2h-3zM291 59h3v2h-3zM808 447h2v2h-2zM252 393h2v3h-2zM627 317h3v2h-3zM354 275h2v3h-2zM8 754h2v2h-2zM608 246h3v2h-3zM393 696h4v2h-4zM756 505h4v2h-4zM237 206h3v3h-3zM171 251h2v2h-2zM761 201h3v2h-3zM13 80h3v2h-3zM492 383h4v2h-4zM641 664h3v2h-3zM62 627h3v3h-3zM654 480h3v2h-3zM199 357h3v2h-3zM194 248h3v2h-3zM692 379h4v3h-4zM670 162h2v3h-2zM57 325h2v3h-2zM523 308h3v3h-3zM656 374h4v2h-4zM643 590h3v2h-3zM640 89h3v3h-3zM132 277h3v2h-3zM319 225h4v2h-4zM292 701h2v2h-2zM459 752h4v2h-4zM314 524h4v3h-4zM337 583h3v3h-3zM406 757h3v3h-3zM662 240h4v2h-4zM411 450h2v3h-2zM304 524h3v3h-3zM768 208h3v3h-3zM528 513h4v2h-4zM106 419h3v3h-3zM371 263h4v3h-4zM21 581h2v3h-2zM811 220h2v3h-2zM240 29h3v2h-3zM616 128h3v3h-3zM207 769h3v2h-3zM182 653h2v2h-2zM406 382h3v3h-3zM200 431h4v2h-4zM272 304h3v2h-3zM21 483h3v2h-3zM35 714h2v3h-2zM537 358h3v2h-3zM160 581h3v3h-3zM434 602h2v2h-2zM168 127h3v3h-3zM656 733h3v3h-3zM669 532h2v3h-2zM63 363h2v2h-2zM443 745h2v3h-2zM385 119h4v2h-4zM69 123h2v3h-2zM96 504h3v3h-3zM771 688h3v2h-3zM400 83h3v2h-3zM33 673h4v2h-4zM752 345h4v3h-4zM542 361h3v3h-3zM139 614h2v2h-2zM767 133h2v2h-2zM656 455h3v3h-3zM46 192h3v2h-3zM80 316h3v2h-3zM297 689h3v3h-3zM562 364h3v3h-3zM264 745h3v2h-3zM647 221h3v2h-3zM40 527h4v2h-4zM323 306h4v2h-4zM19 381h3v2h-3zM198 471h3v3h-3zM283 437h3v2h-3zM234 623h2v3h-2zM131 651h4v3h-4zM234 438h3v2h-3zM105 422h4v2h-4zM675 613h3v3h-3zM170 516h3v2h-3zM71 283h3v2h-3zM52 68h3v2h-3zM571 619h2v3h-2zM122 580h3v2h-3zM107 316h3v2h-3zM349 519h4v3h-4zM17 243h4v2h-4zM475 523h4v2h-4zM124 691h4v2h-4zM181 351h3v2h-3zM454 541h2v2h-2zM52 43h4v2h-4zM709 644h2v2h-2zM655 644h3v2h-3zM807 473h2v2h-2zM141 368h3v3h-3zM576 593h3v3h-3zM491 36h4v2h-4zM43 519h3v2h-3zM273 668h4v2h-4zM404 639h4v2h-4zM670 567h3v3h-3zM581 329h4v2h-4zM516 599h3v2h-3zM339 333h3v3h-3zM815 698h4v2h-4zM733 297h2v2h-2zM310 161h4v3h-4zM491 158h3v3h-3zM590 35h4v2h-4zM407 40h3v2h-3zM307 402h2v2h-2zM761 589h3v2h-3zM729 541h4v3h-4zM214 688h3v3h-3zM422 555h2v2h-2zM112 100h3v2h-3zM127 601h3v2h-3zM370 161h2v3h-2zM129 777h3v2h-3zM302 620h3v3h-3zM88 102h3v2h-3zM353 755h4v2h-4zM122 516h3v2h-3zM797 340h2v2h-2zM128 402h3v2h-3zM710 375h3v3h-3zM276 459h4v2h-4zM213 349h3v2h-3zM682 467h3v2h-3zM26 308h4v2h-4zM132 650h4v2h-4zM695 231h3v2h-3zM530 210h3v2h-3zM794 726h4v3h-4zM552 398h3v3h-3zM781 636h3v2h-3zM517 766h4v2h-4zM738 682h3v2h-3zM245 529h3v2h-3zM489 676h4v3h-4zM586 450h3v2h-3zM791 595h3v2h-3zM143 317h2v2h-2zM252 731h2v3h-2zM277 458h3v2h-3zM746 376h2v3h-2zM574 482h2v2h-2zM698 409h2v3h-2zM149 274h4v2h-4zM309 482h3v2h-3zM364 380h2v2h-2zM297 479h4v2h-4zM779 397h3v2h-3zM490 284h2v3h-2zM732 700h2v3h-2zM730 267h4v2h-4zM121 113h2v3h-2zM802 305h2v3h-2zM695 401h2v2h-2zM163 542h4v3h-4zM455 494h2v3h-2zM586 409h3v2h-3zM736 248h3v2h-3zM290 408h4v2h-4zM236 780h3v2h-3zM99 78h3v2h-3zM517 760h3v2h-3zM764 408h3v2h-3zM642 665h3v2h-3zM584 521h2v2h-2zM2 713h3v3h-3zM675 384h2v2h-2zM210 380h3v2h-3zM153 490h3v3h-3zM721 386h3v2h-3zM49 495h4v3h-4zM262 652h4v3h-4zM630 615h3v3h-3zM97 389h3v2h-3zM180 180h3v3h-3zM369 249h2v2h-2zM537 591h2v2h-2zM595 311h4v3h-4zM328 269h3v3h-3zM796 231h3v2h-3zM788 393h4v2h-4zM671 737h2v2h-2zM681 78h4v2h-4zM93 695h2v2h-2zM560 317h2v2h-2zM575 363h3v2h-3zM706 584h4v2h-4zM596 409h4v2h-4zM60 502h2v2h-2zM543 538h3v3h-3zM490 634h2v3h-2zM176 717h4v2h-4zM255 470h2v3h-2zM764 256h4v2h-4zM31 632h2v2h-2zM382 644h4v2h-4zM188 210h3v2h-3zM276 209h4v2h-4zM334 520h3v2h-3zM786 758h3v2h-3zM453 536h3v2h-3zM769 413h3v3h-3zM2 224h3v2h-3zM771 528h3v2h-3zM768 472h4v2h-4zM328 604h2v3h-2zM295 170h4v2h-4zM204 287h3v3h-3zM577 383h4v2h-4zM79 207h2v2h-2zM665 704h4v2h-4zM765 65h4v3h-4zM29 495h4v3h-4zM368 646h2v3h-2zM398 331h2v2h-2zM637 530h4v3h-4zM352 385h2v2h-2zM672 291h3v3h-3zM604 238h4v2h-4zM58 474h3v2h-3zM185 679h2v2h-2zM472 342h3v2h-3zM598 474h2v2h-2zM752 603h4v2h-4zM350 180h2v2h-2zM317 122h4v2h-4zM185 312h3v2h-3zM801 117h3v2h-3zM476 60h4v3h-4zM599 220h3v2h-3zM60 691h4v2h-4zM458 579h4v3h-4zM688 616h3v2h-3zM524 439h2v3h-2zM569 685h2v2h-2zM709 533h3v3h-3zM324 579h4v3h-4zM147 186h2v2h-2zM315 549h4v2h-4zM192 137h3v2h-3zM257 732h2v3h-2zM53 459h3v3h-3zM744 347h3v2h-3zM749 534h2v3h-2zM124 100h4v3h-4zM185 292h4v2h-4zM338 723h4v2h-4zM8 770h2v2h-2zM735 738h3v3h-3zM471 335h2v2h-2zM191 87h3v2h-3zM369 30h3v2h-3zM282 59h3v3h-3zM218 258h3v3h-3zM654 776h3v2h-3zM762 376h3v2h-3zM409 724h2v3h-2zM439 653h2v3h-2zM301 160h3v2h-3zM805 62h2v2h-2zM442 773h3v2h-3zM400 513h4v2h-4zM769 354h3v2h-3zM764 539h3v2h-3zM747 484h4v3h-4zM467 758h3v2h-3zM199 186h2v3h-2zM421 487h3v2h-3zM274 247h3v2h-3zM248 278h3v3h-3zM53 548h3v3h-3zM70 500h4v2h-4zM84 668h4v2h-4z"/><path fill="#09096e" d="M464 591h4v2h-4zM452 623h3v3h-3zM1 294h3v2h-3zM371 159h3v3h-3zM810 48h2v3h-2zM66 301h2v2h-2zM811 734h2v2h-2zM583 686h3v2h-3zM153 546h4v2h-4zM214 329h3v3h-3zM348 462h4v3h-4zM618 340h3v2h-3zM797 217h3v2h-3zM87 739h4v3h-4zM137 355h3v2h-3zM669 218h2v3h-2zM763 154h2v2h-2zM459 656h3v2h-3zM158 687h3v2h-3zM100 491h2v3h-2zM475 324h2v2h-2zM318 236h2v3h-2zM778 483h3v2h-3zM388 109h2v3h-2zM244 29h4v2h-4zM412 55h2v2h-2zM271 190h3v3h-3zM775 705h4v3h-4zM498 492h4v2h-4zM108 556h3v3h-3zM406 259h3v3h-3zM208 320h2v2h-2zM324 380h2v2h-2zM431 748h3v3h-3zM75 135h3v3h-3zM247 437h3v2h-3zM387 168h3v3h-3zM264 736h3v3h-3zM737 351h2v2h-2zM283 87h4v2h-4zM355 124h3v3h-3zM71 122h3v2h-3zM167 654h4v2h-4zM342 227h3v3h-3zM338 45h4v2h-4zM453 197h3v2h-3zM194 315h4v3h-4zM316 562h2v2h-2zM419 740h3v2h-3zM479 447h3v2h-3zM74 526h2v2h-2zM398 49h4v2h-4zM645 341h3v3h-3zM365 700h2v3h-2zM563 778h3v2h-3zM16 372h3v2h-3zM185 441h4v2h-4zM314 530h2v3h-2zM177 568h3v2h-3zM745 375h2v3h-2zM511 220h2v2h-2zM115 323h2v2h-2zM33 170h2v2h-2zM402 33h3v2h-3zM366 165h4v2h-4zM485 658h4v3h-4zM386 712h4v3h-4zM500 314h4v3h-4zM442 197h3v2h-3zM196 394h4v3h-4zM116 31h4v3h-4zM476 780h4v2h-4zM330 283h3v2h-3zM312 410h3v2h-3zM393 743h2v3h-2zM740 492h4v2h-4zM471 710h3v3h-3zM601 183h3v3h-3zM412 229h3v2h-3zM427 59h3v2h-3zM232 114h3v3h-3zM237 111h4v2h-4zM605 721h4v2h-4zM470 327h2v3h-2zM21 769h3v2h-3zM547 610h2v3h-2zM277 165h4v2h-4zM337 248h4v3h-4zM420 689h2v3h-2zM227 443h3v3h-3zM22 704h3v3h-3zM215 491h4v3h-4zM309 444h3v2h-3zM418 375h3v2h-3zM766 116h3v3h-3zM451 412h2v2h-2zM438 345h3v3h-3zM734 277h3v2h-3zM363 102h2v2h-2zM591 420h3v2h-3zM128 511h3v3h-3zM30 665h4v2h-4zM776 215h3v2h-3zM697 181h2v2h-2zM353 436h3v2h-3zM194 390h2v3h-2zM771 753h3v2h-3zM553 500h2v3h-2zM561 545h2v3h-2zM359 633h4v3h-4zM540 72h3v2h-3zM538 383h3v2h-3zM587 662h4v2h-4zM791 724h3v3h-3zM690 553h3v3h-3zM235 228h3v3h-3zM357 779h3v2h-3zM723 525h4v2h-4zM497 760h2v2h-2zM50 439h3v2h-3zM112 204h3v2h-3zM424 143h3v2h-3zM616 508h2v2h-2zM535 114h3v3h-3zM771 630h3v3h-3zM8 447h3v2h-3zM131 32h3v2h-3zM94 57h3v3h-3zM22 106h3v3h-3zM647 112h3v2h-3zM604 647h3v3h-3zM299 250h3v2h-3zM505 137h4v3h-4zM117 311h4v2h-4zM396 653h3v2h-3zM781 48h4v2h-4zM312 444h3v2h-3zM458 31h3v2h-3zM442 577h3v2h-3zM492 639h4v2h-4zM345 436h3v3h-3zM530 459h3v2h-3zM49 552h2v2h-2zM781 527h3v3h-3zM553 39h3v2h-3zM760 185h3v2h-3zM278 291h3v2h-3zM295 556h4v2h-4zM115 639h4v2h-4zM556 96h3v2h-3zM88 427h3v2h-3zM661 703h3v2h-3zM195 367h2v2h-2zM79 585h2v2h-2zM141 771h4v2h-4zM815 615h3v3h-3zM278 46h3v2h-3zM423 730h2v2h-2zM395 527h3v2h-3zM382 707h3v3h-3zM253 573h3v2h-3zM294 599h3v3h-3zM320 721h3v3h-3zM479 560h3v2h-3zM108 291h3v2h-3zM183 638h3v2h-3zM150 134h3v2h-3zM494 171h2v2h-2zM240 296h4v2h-4zM22 362h4v2h-4zM39 306h3v2h-3zM409 235h3v3h-3zM31 641h3v3h-3zM743 695h3v2h-3zM35 535h4v2h-4zM754 658h3v3h-3zM352 429h2v2h-2zM795 590h3v2h-3zM369 348h2v2h-2zM604 220h2v3h-2zM574 439h4v3h-4zM713 417h3v2h-3zM677 55h2v2h-2zM489 517h2v2h-2zM397 322h3v2h-3zM790 138h3v2h-3zM536 321h4v3h-4zM51 73h2v2h-2zM482 63h3v3h-3zM213 135h2v3h-2zM326 744h3v2h-3zM404 759h4v3h-4zM235 425h3v3h-3zM387 406h3v2h-3zM651 766h3v2h-3zM435 260h3v3h-3zM526 89h4v3h-4zM425 638h3v2h-3zM784 626h3v2h-3zM754 348h4v3h-4zM52 74h3v3h-3zM384 258h3v3h-3zM12 652h3v3h-3zM443 130h2v2h-2zM211 529h3v2h-3zM612 400h3v2h-3zM14 567h3v2h-3zM73 344h2v2h-2zM636 57h2v3h-2zM83 708h3v2h-3zM745 426h4v3h-4zM464 713h4v2h-4zM278 551h2v2h-2zM223 629h3v2h-3zM215 545h3v3h-3zM660 504h3v2h-3zM351 274h3v2h-3zM548 169h2v2h-2zM469 499h3v3h-3zM701 520h4v2h-4zM107 195h3v2h-3zM310 456h2v2h-2zM317 361h2v3h-2zM384 698h2v2h-2zM541 239h3v2h-3zM561 204h2v2h-2zM50 550h4v2h-4zM412 462h3v2h-3zM165 729h4v2h-4zM464 105h3v3h-3zM12 600h2v3h-2zM149 259h2v2h-2zM582 508h2v2h-2zM589 494h2v2h-2zM452 90h4v2h-4zM28 289h4v2h-4zM75 174h2v3h-2zM349 760h4v3h-4zM603 253h2v2h-2zM37 164h2v3h-2zM207 78h3v2h-3zM144 287h3v2h-3zM160 187h2v3h-2zM362 341h2v2h-2zM690 111h3v3h-3zM653 94h2v2h-2zM367 553h3v3h-3zM95 686h3v3h-3zM377 55h4v2h-4zM461 229h3v2h-3zM106 606h4v2h-4zM803 578h3v3h-3zM115 575h3v3h-3zM96 457h3v2h-3zM774 621h3v2h-3zM17 99h2v2h-2zM460 615h4v2h-4zM294 445h2v2h-2zM401 669h3v2h-3zM187 253h2v3h-2zM343 654h3v3h-3zM334 343h2v3h-2zM182 521h3v3h-3zM693 116h4v3h-4zM51 170h3v3h-3zM275 345h2v2h-2zM673 761h3v3h-3zM234 169h3v2h-3zM173 743h3v3h-3zM743 658h3v3h-3zM110 629h3v2h-3zM788 752h4v3h-4zM794 680h4v3h-4zM160 425h3v2h-3zM588 256h3v2h-3zM35 283h3v3h-3zM39 278h3v2h-3zM243 652h3v2h-3zM119 400h4v3h-4zM645 259h3v2h-3zM147 494h3v3h-3zM182 368h3v2h-3zM426 392h3v3h-3zM361 388h4v2h-4zM88 403h4v2h-4zM245 393h3v2h-3zM129 333h4v3h-4zM99 108h2v3h-2zM324 527h2v2h-2zM772 107h3v3h-3zM202 435h3v2h-3zM541 365h3v2h-3zM464 285h4v2h-4zM499 616h2v2h-2zM43 148h4v2h-4zM415 494h4v2h-4zM737 84h4v3h-4zM243 680h3v3h-3zM135 279h3v3h-3zM256 142h2v2h-2zM151 728h4v2h-4zM288 658h3v2h-3zM549 550h3v3h-3zM378 535h3v2h-3zM203 64h3v2h-3zM788 67h4v2h-4zM499 541h3v2h-3zM37 176h3v2h-3zM202 277h4v2h-4zM375 691h2v3h-2zM228 621h2v2h-2zM42 182h4v2h-4zM186 709h3v2h-3zM583 491h4v2h-4zM66 702h2v2h-2zM200 556h4v2h-4zM36 307h3v3h-3zM136 731h4v2h-4zM554 556h2v2h-2zM555 666h3v2h-3zM452 138h2v3h-2zM12 306h3v2h-3zM735 511h2v3h-2zM451 640h4v2h-4zM539 494h3v2h-3zM441 735h2v3h-2zM279 719h2v2h-2zM239 137h3v2h-3zM309 539h3v2h-3zM756 695h3v2h-3zM315 126h3v2h-3zM687 163h3v2h-3zM539 238h2v2h-2zM72 484h4v2h-4zM777 222h2v2h-2zM212 709h2v3h-2zM487 602h2v2h-2zM793 665h3v2h-3zM624 106h2v3h-2zM324 660h3v3h-3zM245 420h4v2h-4zM584 27h4v2h-4zM669 117h2v2h-2zM435 179h4v2h-4zM294 211h3v3h-3zM354 482h3v2h-3zM678 209h3v2h-3zM410 587h3v2h-3zM722 186h3v3h-3zM709 39h2v2h-2zM507 522h3v3h-3zM558 416h3v2h-3zM348 576h4v3h-4zM809 63h2v3h-2zM174 138h3v3h-3zM467 304h3v2h-3zM717 605h3v2h-3zM706 574h3v2h-3zM682 165h3v2h-3zM180 34h3v2h-3zM488 151h2v3h-2zM561 145h4v2h-4zM529 714h4v2h-4zM14 509h3v3h-3zM63 216h2v2h-2zM565 219h2v2h-2zM382 713h3v2h-3zM359 616h2v2h-2zM136 656h3v2h-3zM533 570h3v2h-3zM558 164h2v2h-2zM533 24h4v2h-4zM308 334h2v2h-2zM262 82h4v2h-4zM480 751h4v2h-4zM807 240h3v3h-3zM717 409h4v2h-4zM245 49h3v2h-3zM670 374h3v3h-3zM564 652h3v2h-3zM621 735h2v2h-2zM514 138h4v2h-4zM210 304h3v3h-3zM533 447h2v2h-2zM185 93h3v2h-3zM178 526h3v2h-3zM654 400h2v2h-2zM113 301h3v2h-3zM285 407h4v2h-4zM545 767h2v2h-2zM367 640h3v2h-3zM810 327h4v3h-4zM626 663h2v2h-2zM443 320h3v2h-3zM577 647h3v3h-3zM680 178h3v2h-3zM572 147h2v3h-2zM244 184h3v2h-3zM797 436h3v2h-3zM771 277h2v2h-2zM328 609h3v2h-3zM664 326h2v3h-2zM580 554h4v3h-4zM462 161h3v2h-3zM583 406h4v2h-4zM49 56h4v3h-4zM238 712h4v3h-4zM695 775h3v2h-3zM713 776h3v2h-3zM82 446h3v2h-3zM726 771h4v3h-4zM378 173h2v2h-2zM119 391h3v2h-3zM186 463h4v2h-4zM665 292h2v2h-2zM500 141h3v3h-3zM443 299h2v2h-2zM558 594h2v2h-2zM548 454h4v2h-4zM173 429h3v2h-3zM224 611h2v2h-2zM320 750h4v3h-4zM471 432h3v2h-3zM592 427h2v2h-2zM768 168h3v2h-3zM608 301h3v2h-3zM318 386h2v2h-2zM757 247h3v2h-3zM162 415h3v2h-3zM391 465h2v3h-2zM568 750h2v2h-2zM580 306h4v3h-4zM343 588h4v3h-4zM724 467h2v2h-2zM290 412h3v2h-3zM161 470h4v3h-4zM217 716h3v2h-3zM744 496h3v2h-3zM797 513h4v2h-4zM462 750h3v2h-3zM381 418h3v2h-3zM17 349h2v3h-2zM460 138h4v3h-4zM35 745h4v3h-4zM638 617h3v2h-3zM366 730h2v2h-2zM99 550h4v2h-4zM576 650h4v2h-4zM608 389h3v2h-3zM317 726h3v2h-3zM428 131h3v2h-3zM201 459h3v2h-3zM491 545h3v3h-3zM262 436h4v2h-4zM299 495h4v3h-4zM152 602h2v2h-2zM774 754h4v3h-4zM318 204h4v2h-4zM672 607h3v2h-3zM358 600h3v3h-3zM434 780h4v2h-4zM8 451h2v2h-2zM217 54h3v2h-3zM753 570h4v2h-4zM339 294h4v2h-4zM652 290h3v2h-3zM250 408h4v3h-4zM123 356h2v2h-2zM642 354h4v3h-4zM274 651h4v3h-4zM489 215h3v2h-3zM459 773h4v2h-4zM268 407h2v3h-2zM789 677h3v2h-3zM162 591h3v2h-3zM218 45h3v2h-3zM646 619h3v3h-3zM50 345h3v3h-3zM172 367h3v2h-3zM762 619h4v2h-4zM800 717h2v2h-2zM804 712h4v3h-4zM18 37h2v2h-2zM174 30h2v2h-2zM541 402h3v2h-3zM705 558h3v2h-3zM784 395h3v2h-3zM654 513h3v2h-3zM525 585h2v2h-2zM60 37h2v2h-2zM269 338h4v3h-4zM120 378h4v2h-4zM248 654h2v2h-2zM33 389h3v2h-3zM102 781h4v3h-4zM408 679h3v3h-3zM592 275h3v3h-3zM582 420h4v3h-4zM249 646h3v2h-3zM449 45h3v2h-3zM346 607h4v3h-4zM161 201h2v2h-2zM448 285h3v2h-3zM273 110h3v3h-3zM83 689h2v2h-2zM659 160h3v2h-3zM50 196h4v2h-4zM306 38h3v3h-3zM420 66h3v2h-3zM522 703h4v2h-4zM318 310h4v2h-4zM742 683h2v2h-2zM335 430h4v2h-4zM302 676h3v2h-3zM578 551h2v2h-2zM83 509h2v3h-2zM512 325h2v2h-2zM780 580h3v3h-3zM242 671h4v3h-4zM644 218h3v3h-3zM692 139h4v3h-4zM694 23h2v3h-2zM137 563h4v3h-4zM341 418h4v2h-4zM563 490h4v2h-4zM324 276h3v3h-3zM231 608h4v3h-4zM447 217h2v2h-2zM669 215h3v3h-3zM624 338h4v2h-4zM684 410h3v2h-3zM357 326h2v2h-2zM794 636h3v3h-3zM567 29h2v2h-2zM84 122h2v2h-2zM672 104h4v3h-4zM17 738h2v2h-2zM701 62h3v3h-3zM449 534h2v2h-2zM447 418h3v2h-3zM773 240h3v2h-3zM273 30h2v2h-2zM361 708h4v2h-4zM285 748h2v2h-2zM145 530h2v2h-2zM667 581h4v3h-4zM214 639h3v2h-3zM396 350h2v2h-2zM438 780h3v2h-3zM572 403h3v2h-3zM768 603h2v2h-2zM521 353h2v2h-2zM222 311h4v2h-4zM172 593h3v2h-3zM517 372h2v3h-2zM770 243h3v2h-3zM435 693h3v2h-3zM264 86h2v3h-2zM172 157h3v2h-3zM212 234h3v3h-3zM564 165h4v2h-4zM519 398h4v3h-4zM295 433h4v2h-4zM481 718h3v2h-3zM175 331h3v3h-3zM305 398h3v3h-3zM460 141h2v2h-2zM135 447h4v2h-4zM469 31h3v3h-3zM301 379h4v2h-4zM334 568h4v2h-4zM49 131h4v2h-4zM93 79h3v2h-3zM207 209h3v2h-3zM732 622h3v2h-3zM441 197h2v2h-2zM98 412h3v2h-3zM229 312h3v3h-3zM438 292h2v2h-2zM240 397h4v2h-4zM548 268h4v2h-4zM64 324h3v2h-3zM91 313h4v2h-4zM372 569h3v2h-3zM95 151h3v2h-3zM19 525h3v3h-3zM357 334h2v2h-2z"/><path fill="#0a0a82" d="M522 213h3v2h-3zM483 299h4v2h-4zM553 732h3v2h-3zM335 684h2v3h-2zM497 430h3v3h-3zM51 240h4v3h-4zM731 220h3v3h-3zM150 143h2v2h-2zM515 424h4v3h-4zM651 732h3v3h-3zM529 252h3v3h-3zM79 468h2v3h-2zM810 172h2v3h-2zM650 718h3v3h-3zM208 629h2v3h-2zM36 714h3v2h-3zM473 106h3v2h-3zM600 683h3v3h-3zM712 622h3v2h-3zM403 598h3v2h-3zM687 86h3v3h-3zM590 742h2v3h-2zM575 725h3v2h-3zM668 207h4v3h-4zM216 83h2v3h-2zM694 417h3v2h-3zM74 108h3v3h-3zM323 662h3v3h-3zM159 165h3v2h-3zM633 644h2v2h-2zM115 690h3v2h-3zM209 687h3v3h-3zM369 513h4v3h-4zM47 281h3v2h-3zM56 455h3v3h-3zM113 606h2v2h-2zM3 122h2v2h-2zM585 164h2v2h-2zM159 455h2v3h-2zM502 622h3v2h-3zM381 87h3v2h-3zM732 345h3v2h-3zM79 334h3v2h-3zM755 234h2v2h-2zM239 711h3v2h-3zM522 592h3v2h-3zM250 63h2v3h-2zM298 563h3v2h-3zM242 503h2v2h-2zM569 674h3v3h-3zM555 447h2v2h-2zM63 460h4v2h-4zM543 588h2v2h-2zM381 780h2v2h-2zM530 383h2v3h-2zM342 199h2v3h-2zM351 634h2v3h-2zM555 310h3v2h-3zM620 710h3v2h-3zM282 498h2v2h-2zM442 751h4v2h-4zM467 399h2v3h-2zM702 513h4v2h-4zM82 712h4v2h-4zM794 676h4v2h-4zM560 545h3v2h-3zM431 731h3v2h-3zM243 681h4v2h-4zM518 719h3v3h-3zM337 223h3v2h-3zM796 299h4v3h-4zM473 767h2v2h-2zM594 408h2v2h-2zM215 766h2v3h-2zM782 295h3v3h-3zM232 779h2v3h-2zM61 672h4v3h-4zM4 425h3v2h-3zM210 212h2v2h-2zM377 579h3v2h-3zM355 190h2v2h-2zM508 549h3v2h-3zM808 198h2v2h-2zM743 616h4v3h-4zM159 88h3v3h-3zM263 78h4v2h-4zM507 65h3v2h-3zM77 484h3v2h-3zM107 193h4v2h-4zM38 413h3v3h-3zM679 589h3v2h-3zM664 305h2v2h-2zM690 684h4v2h-4zM384 346h3v2h-3zM714 438h4v2h-4zM681 41h3v2h-3zM255 197h3v3h-3zM136 81h3v2h-3zM417 455h3v3h-3zM495 702h3v2h-3zM773 616h3v2h-3zM131 458h4v2h-4zM567 653h2v2h-2zM391 104h3v3h-3zM351 110h2v2h-2zM615 665h3v3h-3zM700 205h3v2h-3zM232 674h3v3h-3zM665 421h3v2h-3zM752 591h2v3h-2zM772 604h4v3h-4zM7 470h4v2h-4zM162 48h3v2h-3zM384 655h4v2h-4zM507 678h2v2h-2zM325 429h4v2h-4zM279 222h4v3h-4zM461 318h3v2h-3zM754 566h3v3h-3zM606 492h4v2h-4zM404 643h3v2h-3zM10 649h2v3h-2zM379 773h2v2h-2zM577 304h2v3h-2zM416 682h4v3h-4zM498 31h2v3h-2zM507 111h3v2h-3zM136 60h3v2h-3zM644 580h3v3h-3zM636 425h3v2h-3zM712 293h2v2h-2zM675 361h4v2h-4zM213 419h4v2h-4zM315 229h4v2h-4zM737 754h3v2h-3zM310 315h2v2h-2zM551 585h3v3h-3zM393 590h2v2h-2zM70 113h3v3h-3zM134 755h3v2h-3zM690 229h3v3h-3zM500 130h2v2h-2zM318 774h4v3h-4zM79 397h3v2h-3zM622 279h3v3h-3zM62 210h4v3h-4zM520 224h4v2h-4zM563 610h3v3h-3zM776 570h3v2h-3zM62 531h4v2h-4zM206 191h3v2h-3zM136 153h2v2h-2zM593 625h3v3h-3zM150 389h3v2h-3zM800 327h2v2h-2zM198 480h3v3h-3zM810 568h2v3h-2zM700 461h4v2h-4zM790 217h2v3h-2zM723 466h3v3h-3zM186 770h3v2h-3zM814 264h3v2h-3zM183 529h3v2h-3zM230 375h3v2h-3zM801 347h2v2h-2zM321 143h4v2h-4zM622 541h4v3h-4zM229 211h3v2h-3zM62 465h3v3h-3zM178 24h3v2h-3zM804 410h3v3h-3zM36 64h4v3h-4zM58 514h4v3h-4zM572 718h2v2h-2zM259 594h2v2h-2zM558 373h4v2h-4zM471 69h2v2h-2zM577 161h3v2h-3zM331 456h3v2h-3zM202 361h2v3h-2zM647 257h3v2h-3zM226 738h3v2h-3zM123 63h4v2h-4zM785 139h3v2h-3zM50 283h2v2h-2zM293 399h3v3h-3zM413 273h3v2h-3zM613 122h4v2h-4zM456 400h3v2h-3zM127 190h3v2h-3zM637 721h4v2h-4zM778 456h4v3h-4zM123 75h3v2h-3zM77 334h4v2h-4zM780 164h2v3h-2zM150 167h3v3h-3zM780 230h3v2h-3zM334 132h3v2h-3zM201 445h4v3h-4zM500 25h2v2h-2zM104 422h3v2h-3zM40 106h3v2h-3zM682 362h4v2h-4zM112 542h4v2h-4zM371 759h4v2h-4zM299 161h3v2h-3zM627 169h2v2h-2zM434 549h2v3h-2zM115 402h4v2h-4zM570 278h4v3h-4zM74 160h3v3h-3zM34 746h3v2h-3zM187 234h3v3h-3zM729 720h3v3h-3zM761 414h3v2h-3zM220 344h3v2h-3zM199 572h2v3h-2zM213 271h4v3h-4zM53 33h3v3h-3zM204 661h3v2h-3zM796 159h3v2h-3zM807 665h3v2h-3zM254 320h2v2h-2zM494 82h2v3h-2zM465 715h3v2h-3zM715 167h3v2h-3zM46 54h4v2h-4zM370 407h3v2h-3zM611 637h3v3h-3zM528 303h4v2h-4zM173 526h3v2h-3zM166 315h2v2h-2zM483 330h2v3h-2zM149 771h3v2h-3zM656 344h2v3h-2zM428 63h2v2h-2zM258 52h3v3h-3zM309 136h3v3h-3zM449 179h3v2h-3zM666 231h3v2h-3zM434 566h2v3h-2zM369 399h3v2h-3zM234 534h3v2h-3zM12 390h4v2h-4zM730 763h3v2h-3zM557 648h3v2h-3zM503 736h2v3h-2zM221 348h3v3h-3zM800 370h3v2h-3zM38 758h2v2h-2zM629 439h2v2h-2zM698 453h3v2h-3zM628 372h3v2h-3zM18 350h3v2h-3zM141 94h2v2h-2zM167 422h3v2h-3zM18 95h4v2h-4zM637 490h2v3h-2zM367 599h4v2h-4zM697 30h2v2h-2zM626 668h2v2h-2zM732 361h3v2h-3zM384 39h3v3h-3zM566 339h4v2h-4zM439 189h2v2h-2zM627 656h3v3h-3zM762 180h4v2h-4zM72 113h2v3h-2zM441 367h3v3h-3zM257 441h2v2h-2zM179 131h4v3h-4zM534 772h2v2h-2zM813 87h4v2h-4zM311 132h3v2h-3zM788 344h2v2h-2zM94 745h3v2h-3zM547 583h2v3h-2zM478 285h3v3h-3zM139 430h3v3h-3zM746 302h2v2h-2zM50 535h3v2h-3zM76 387h3v3h-3zM182 587h3v2h-3zM45 62h3v3h-3zM151 334h4v2h-4zM700 616h3v2h-3zM124 449h3v3h-3zM648 410h3v3h-3zM84 716h2v3h-2zM45 393h3v2h-3zM361 357h3v3h-3zM479 424h4v2h-4zM706 706h4v2h-4zM316 271h3v2h-3zM120 475h4v2h-4zM744 106h3v2h-3zM305 267h4v2h-4zM50 488h4v2h-4zM476 534h3v3h-3zM240 683h2v2h-2zM471 202h3v3h-3zM104 309h4v2h-4zM131 547h3v3h-3zM499 426h3v3h-3zM552 128h3v2h-3zM299 510h3v2h-3zM805 451h3v2h-3zM318 566h2v3h-2zM67 768h4v2h-4zM231 444h3v2h-3zM445 390h4v2h-4zM606 738h2v3h-2zM59 747h3v2h-3zM369 46h4v2h-4zM434 401h3v3h-3zM144 385h3v2h-3zM645 641h2v2h-2zM230 597h2v2h-2zM299 492h2v3h-2zM152 79h3v2h-3zM160 121h3v2h-3zM307 594h3v3h-3zM703 110h2v2h-2zM608 87h3v2h-3zM144 89h4v3h-4zM188 488h2v2h-2zM45 262h4v2h-4zM470 221h4v3h-4zM370 393h3v2h-3zM16 45h3v2h-3zM804 41h3v2h-3zM557 76h3v3h-3zM568 452h3v2h-3zM87 279h2v3h-2zM508 691h3v2h-3zM422 267h4v2h-4zM570 706h4v3h-4zM487 452h3v3h-3zM48 51h3v2h-3zM572 574h3v3h-3zM368 409h4v2h-4zM676 510h4v2h-4zM435 93h3v2h-3zM339 637h2v2h-2zM87 741h2v2h-2zM470 687h3v2h-3zM636 524h2v3h-2zM807 660h4v2h-4zM588 704h3v3h-3zM433 722h2v2h-2zM389 759h2v2h-2zM366 745h3v2h-3zM17 313h4v2h-4zM89 298h3v3h-3zM678 239h2v3h-2zM659 597h2v2h-2zM535 257h2v2h-2zM239 283h4v2h-4zM48 767h3v3h-3zM794 409h4v3h-4zM527 233h3v2h-3zM253 199h3v3h-3zM477 246h3v3h-3zM418 717h3v2h-3zM63 457h3v2h-3zM762 218h3v2h-3zM110 577h2v2h-2zM590 748h3v2h-3zM471 609h3v2h-3zM275 491h4v2h-4zM406 57h3v3h-3zM114 464h2v2h-2zM679 569h4v2h-4zM513 355h3v2h-3zM69 329h2v3h-2zM86 448h4v2h-4zM223 607h3v2h-3zM32 536h3v2h-3zM323 245h3v2h-3zM756 383h3v3h-3zM376 137h3v2h-3zM136 392h4v2h-4zM696 127h3v2h-3zM816 543h4v3h-4zM30 365h4v2h-4zM188 436h2v2h-2zM436 615h2v2h-2zM753 165h3v2h-3zM592 45h4v3h-4zM812 434h3v2h-3zM201 493h2v2h-2zM406 484h2v3h-2zM119 351h3v2h-3zM112 514h4v2h-4zM694 466h2v3h-2zM130 732h3v2h-3zM408 293h2v3h-2zM53 295h3v2h-3zM243 596h3v2h-3zM810 522h4v3h-4zM674 252h4v2h-4zM114 605h4v2h-4zM728 464h3v2h-3zM504 719h3v3h-3zM92 183h3v2h-3zM268 689h4v2h-4zM341 277h2v3h-2zM279 767h4v2h-4zM230 306h3v3h-3zM215 337h3v3h-3zM388 684h4v2h-4zM587 409h3v3h-3zM379 31h3v2h-3zM570 236h3v3h-3zM590 468h2v2h-2zM50 695h3v2h-3zM455 250h2v2h-2zM707 607h3v2h-3zM184 686h3v3h-3zM494 306h2v2h-2zM617 618h2v2h-2zM639 306h3v3h-3zM66 350h3v2h-3zM138 474h3v2h-3zM575 296h3v2h-3zM696 70h2v2h-2zM147 618h3v3h-3zM440 714h4v3h-4zM196 660h3v3h-3zM387 501h4v3h-4zM609 754h4v2h-4zM229 655h2v2h-2zM476 277h3v2h-3zM128 342h3v2h-3zM494 648h2v2h-2zM418 537h3v2h-3zM303 29h4v2h-4zM351 546h3v2h-3zM582 611h3v3h-3zM666 267h2v2h-2zM703 238h3v3h-3zM784 79h2v2h-2zM217 480h3v2h-3zM809 741h3v2h-3zM235 277h4v2h-4zM758 605h3v2h-3zM431 374h4v2h-4zM479 437h3v2h-3zM185 403h3v2h-3zM310 95h3v2h-3zM340 342h2v2h-2zM57 753h4v2h-4zM229 387h4v3h-4zM785 314h2v2h-2zM590 309h3v2h-3zM685 533h3v2h-3zM811 501h3v2h-3zM486 388h4v2h-4zM63 569h3v2h-3zM190 185h3v2h-3zM539 54h3v3h-3zM388 714h3v2h-3zM307 148h3v3h-3zM407 443h3v3h-3zM800 688h2v2h-2zM58 613h4v3h-4zM693 639h3v2h-3zM644 505h3v2h-3zM257 655h3v2h-3zM567 114h4v3h-4zM779 274h2v2h-2zM193 535h3v2h-3zM816 450h2v3h-2zM154 676h2v2h-2zM529 741h4v2h-4zM172 744h3v2h-3zM155 689h2v2h-2zM197 410h3v2h-3zM269 104h2v3h-2zM10 34h2v2h-2zM250 714h3v2h-3zM799 748h3v2h-3zM398 140h3v3h-3zM170 330h4v3h-4zM483 82h2v2h-2zM599 250h2v2h-2zM268 300h3v3h-3zM580 254h3v3h-3zM446 114h3v2h-3zM325 301h2v3h-2zM420 240h3v2h-3zM416 598h2v3h-2zM183 764h3v3h-3zM288 390h3v2h-3zM264 342h4v3h-4zM757 713h3v3h-3zM168 190h3v2h-3zM700 251h2v2h-2zM348 167h3v3h-3zM350 107h3v2h-3zM559 621h4v2h-4zM610 536h3v2h-3zM375 680h3v2h-3zM40 184h4v2h-4zM48 759h4v3h-4zM45 536h2v2h-2zM468 288h3v2h-3zM55 208h3v2h-3zM544 346h3v2h-3zM251 73h4v3h-4zM331 719h2v2h-2zM464 418h3v3h-3zM89 386h2v3h-2zM708 620h3v2h-3zM28 732h3v2h-3zM32 649h2v2h-2zM801 302h2v3h-2zM738 138h3v2h-3zM271 62h3v3h-3zM353 615h2v2h-2z"/></g><g filter="url(#b1)"><rect x="481.5" y="16" width="7.0" height="2" fill="#040414"/><rect x="481.5" y="18" width="7.0" height="2" fill="#040419"/><rect x="481.5" y="20" width="7.0" height="2" fill="#05051f"/><rect x="481.5" y="22" width="7.0" height="2" fill="#060625"/><rect x="481.5" y="24" width="7.0" height="2" fill="#07072a"/><rect x="481.5" y="26" width="7.0" height="2" fill="#080830"/><rect x="481.5" y="28" width="7.0" height="2" fill="#090936"/><rect x="481.5" y="30" width="7.0" height="2" fill="#0a0a3c"/><rect x="481.5" y="32" width="7.0" height="2" fill="#0a0a3d"/><rect x="481.5" y="34" width="7.0" height="2" fill="#0a0a3e"/><rect x="481.5" y="36" width="7.0" height="2" fill="#0b0a40"/><rect x="481.5" y="38" width="7.0" height="2" fill="#0b0b41"/><rect x="481.5" y="40" width="7.0" height="2" fill="#0c0b43"/><rect x="481.5" y="42" width="7.0" height="2" fill="#0c0b44"/><rect x="481.5" y="44" width="7.0" height="2" fill="#0c0c45"/><rect x="481.5" y="46" width="7.0" height="2" fill="#0d0c47"/><rect x="481.5" y="48" width="7.0" height="2" fill="#0d0c48"/><rect x="481.5" y="50" width="7.0" height="2" fill="#0e0d4a"/><rect x="481.5" y="52" width="7.0" height="2" fill="#0e0d4b"/><rect x="481.5" y="54" width="7.0" height="2" fill="#0e0d4c"/><rect x="481.5" y="56" width="7.0" height="2" fill="#0f0e4e"/><rect x="481.5" y="58" width="7.0" height="2" fill="#0f0e4f"/><rect x="481.5" y="60" width="7.0" height="2" fill="#100e51"/><rect x="481.5" y="62" width="7.0" height="2" fill="#100f52"/><rect x="481.5" y="64" width="7.0" height="2" fill="#100f53"/><rect x="481.5" y="66" width="7.0" height="2" fill="#110f55"/><rect x="481.5" y="68" width="7.0" height="2" fill="#111056"/><rect x="481.5" y="70" width="7.0" height="2" fill="#121058"/><rect x="481.5" y="72" width="7.0" height="2" fill="#121059"/><rect x="481.5" y="74" width="7.0" height="2" fill="#12115a"/><rect x="481.5" y="76" width="7.0" height="2" fill="#13115c"/><rect x="481.5" y="78" width="7.0" height="2" fill="#13115d"/><rect x="481.5" y="80" width="7.0" height="2" fill="#14125f"/><rect x="481.5" y="82" width="7.0" height="2" fill="#14125f"/><rect x="481.5" y="84" width="7.0" height="2" fill="#151260"/><rect x="481.5" y="86" width="7.0" height="2" fill="#161260"/><rect x="481.5" y="88" width="7.0" height="2" fill="#171261"/><rect x="481.5" y="90" width="7.0" height="2" fill="#181262"/><rect x="481.5" y="92" width="7.0" height="2" fill="#181262"/><rect x="481.5" y="94" width="7.0" height="2" fill="#191263"/><rect x="481.5" y="96" width="7.0" height="2" fill="#1a1263"/><rect x="481.5" y="98" width="7.0" height="2" fill="#1b1264"/><rect x="481.5" y="100" width="7.0" height="2" fill="#1c1265"/><rect x="481.5" y="102" width="7.0" height="2" fill="#1c1265"/><rect x="481.5" y="104" width="7.0" height="2" fill="#1d1266"/><rect x="481.5" y="106" width="7.0" height="2" fill="#1e1366"/><rect x="481.5" y="108" width="7.0" height="2" fill="#1f1367"/><rect x="481.5" y="110" width="7.0" height="2" fill="#201368"/><rect x="481.5" y="112" width="7.0" height="2" fill="#201368"/><rect x="481.5" y="114" width="7.0" height="2" fill="#211369"/><rect x="481.5" y="116" width="7.0" height="2" fill="#221369"/><rect x="481.5" y="118" width="7.0" height="2" fill="#23136a"/><rect x="481.5" y="120" width="7.0" height="2" fill="#24136b"/><rect x="481.5" y="122" width="7.0" height="2" fill="#24136b"/><rect x="481.5" y="124" width="7.0" height="2" fill="#25136c"/><rect x="481.5" y="126" width="7.0" height="2" fill="#26136c"/><rect x="481.5" y="128" width="7.0" height="2" fill="#27136d"/><rect x="481.5" y="130" width="7.0" height="2" fill="#28146e"/><rect x="481.0" y="132" width="8.0" height="2" fill="#2a146f"/><rect x="481.0" y="134" width="8.0" height="2" fill="#2d1471"/><rect x="481.0" y="136" width="8.0" height="2" fill="#301472"/><rect x="481.0" y="138" width="8.0" height="2" fill="#331474"/><rect x="481.0" y="140" width="8.0" height="2" fill="#361476"/><rect x="481.0" y="142" width="8.0" height="2" fill="#381477"/><rect x="481.0" y="144" width="8.0" height="2" fill="#3b1579"/><rect x="481.0" y="146" width="8.0" height="2" fill="#3e157a"/><rect x="481.0" y="148" width="8.0" height="2" fill="#41157c"/><rect x="481.0" y="150" width="8.0" height="2" fill="#44157e"/><rect x="481.0" y="152" width="8.0" height="2" fill="#46157f"/><rect x="481.0" y="154" width="8.0" height="2" fill="#491581"/><rect x="481.0" y="156" width="8.0" height="2" fill="#4b1682"/><rect x="481.0" y="158" width="8.0" height="2" fill="#4b1682"/><rect x="481.0" y="160" width="8.0" height="2" fill="#4b1682"/><rect x="481.0" y="162" width="8.0" height="2" fill="#4b1682"/><rect x="481.0" y="164" width="8.0" height="2" fill="#4b1682"/><rect x="481.0" y="166" width="8.0" height="2" fill="#4b1682"/><rect x="481.0" y="168" width="8.0" height="2" fill="#4b1682"/><rect x="481.0" y="170" width="8.0" height="2" fill="#4b1682"/><rect x="481.0" y="172" width="8.0" height="2" fill="#4b1682"/><rect x="481.0" y="174" width="8.0" height="2" fill="#4b1682"/><rect x="481.0" y="176" width="8.0" height="2" fill="#4b1682"/><rect x="481.0" y="178" width="8.0" height="2" fill="#4b1682"/><rect x="481.0" y="180" width="8.0" height="2" fill="#4b1682"/><rect x="481.0" y="182" width="8.0" height="2" fill="#4b1682"/><rect x="481.0" y="184" width="8.0" height="2" fill="#4b1682"/><rect x="481.0" y="186" width="8.0" height="2" fill="#4b1682"/><rect x="481.0" y="188" width="8.0" height="2" fill="#4b1682"/><rect x="481.0" y="190" width="8.0" height="2" fill="#4b1682"/><rect x="481.0" y="192" width="8.0" height="2" fill="#4b1682"/><rect x="481.0" y="194" width="8.0" height="2" fill="#4b1682"/><rect x="481.0" y="196" width="8.0" height="2" fill="#4b1682"/><rect x="481.0" y="198" width="8.0" height="2" fill="#4b1682"/><rect x="481.0" y="200" width="8.0" height="2" fill="#4b1682"/><rect x="481.0" y="202" width="8.0" height="2" fill="#4b1682"/><rect x="481.0" y="204" width="8.0" height="2" fill="#4b1682"/><rect x="481.0" y="206" width="8.0" height="2" fill="#4b1682"/><rect x="481.0" y="208" width="8.0" height="2" fill="#4b1682"/><rect x="481.0" y="210" width="8.0" height="2" fill="#4b1682"/><rect x="481.0" y="212" width="8.0" height="2" fill="#4b1682"/><rect x="481.0" y="214" width="8.0" height="2" fill="#4b1682"/><rect x="481.0" y="216" width="8.0" height="2" fill="#491581"/><rect x="481.0" y="218" width="8.0" height="2" fill="#47157f"/><rect x="481.0" y="220" width="8.0" height="2" fill="#45157e"/><rect x="481.0" y="222" width="8.0" height="2" fill="#42157c"/><rect x="481.0" y="224" width="8.0" height="2" fill="#40157a"/><rect x="481.0" y="226" width="8.0" height="2" fill="#3d1579"/><rect x="481.0" y="228" width="8.0" height="2" fill="#3b1477"/><rect x="481.0" y="230" width="8.0" height="2" fill="#391476"/><rect x="481.0" y="232" width="8.0" height="2" fill="#361474"/><rect x="481.0" y="234" width="8.0" height="2" fill="#341472"/><rect x="481.0" y="236" width="8.0" height="2" fill="#311471"/><rect x="481.0" y="238" width="8.0" height="2" fill="#2f146f"/><rect x="481.5" y="240" width="7.0" height="2" fill="#2d146e"/><rect x="481.5" y="242" width="7.0" height="2" fill="#2b136c"/><rect x="481.5" y="244" width="7.0" height="2" fill="#2a136b"/><rect x="481.5" y="246" width="7.0" height="2" fill="#291369"/><rect x="481.5" y="248" width="7.0" height="2" fill="#281368"/><rect x="481.5" y="250" width="7.0" height="2" fill="#261366"/><rect x="481.5" y="252" width="7.0" height="2" fill="#251265"/><rect x="481.5" y="254" width="7.0" height="2" fill="#241263"/><rect x="481.5" y="256" width="7.0" height="2" fill="#231262"/><rect x="481.5" y="258" width="7.0" height="2" fill="#211260"/><rect x="481.5" y="260" width="7.0" height="2" fill="#20125f"/><rect x="481.5" y="262" width="7.0" height="2" fill="#1f115d"/><rect x="481.5" y="264" width="7.0" height="2" fill="#1e115c"/><rect x="481.5" y="266" width="7.0" height="2" fill="#1c115a"/><rect x="481.5" y="268" width="7.0" height="2" fill="#1b1159"/><rect x="481.5" y="270" width="7.0" height="2" fill="#1a1157"/><rect x="481.5" y="272" width="7.0" height="2" fill="#191056"/><rect x="481.5" y="274" width="7.0" height="2" fill="#171054"/><rect x="481.5" y="276" width="7.0" height="2" fill="#161053"/><rect x="481.5" y="278" width="7.0" height="2" fill="#151051"/><rect x="481.5" y="280" width="7.0" height="2" fill="#141050"/><rect x="481.5" y="282" width="7.0" height="2" fill="#130f4e"/><rect x="481.5" y="284" width="7.0" height="2" fill="#130f4d"/><rect x="481.5" y="286" width="7.0" height="2" fill="#120f4b"/><rect x="481.5" y="288" width="7.0" height="2" fill="#120e4a"/><rect x="481.5" y="290" width="7.0" height="2" fill="#120e48"/><rect x="481.5" y="292" width="7.0" height="2" fill="#110e47"/><rect x="481.5" y="294" width="7.0" height="2" fill="#110e45"/><rect x="481.5" y="296" width="7.0" height="2" fill="#100d44"/><rect x="481.5" y="298" width="7.0" height="2" fill="#100d42"/><rect x="481.5" y="300" width="7.0" height="2" fill="#100d41"/><rect x="481.5" y="302" width="7.0" height="2" fill="#0f0d3f"/><rect x="481.5" y="304" width="7.0" height="2" fill="#0f0c3e"/><rect x="481.5" y="306" width="7.0" height="2" fill="#0e0c3c"/><rect x="481.5" y="308" width="7.0" height="2" fill="#0e0c3b"/><rect x="481.5" y="310" width="7.0" height="2" fill="#0e0c39"/><rect x="481.5" y="312" width="7.0" height="2" fill="#0d0b38"/><rect x="481.5" y="314" width="7.0" height="2" fill="#0d0b36"/><rect x="481.5" y="316" width="7.0" height="2" fill="#0c0b35"/><rect x="481.5" y="318" width="7.0" height="2" fill="#0c0a33"/><rect x="481.5" y="320" width="7.0" height="2" fill="#0c0a32"/><rect x="481.5" y="322" width="7.0" height="2" fill="#0b0a30"/><rect x="481.5" y="324" width="7.0" height="2" fill="#0b0a2f"/><rect x="481.5" y="326" width="7.0" height="2" fill="#0a092d"/><rect x="481.5" y="328" width="7.0" height="2" fill="#0a092c"/><rect x="481.5" y="330" width="7.0" height="2" fill="#0a092a"/><rect x="481.5" y="332" width="7.0" height="2" fill="#090929"/><rect x="481.5" y="334" width="7.0" height="2" fill="#090827"/><rect x="481.5" y="336" width="7.0" height="2" fill="#080826"/><rect x="481.5" y="338" width="7.0" height="2" fill="#080824"/><rect x="481.5" y="340" width="7.0" height="2" fill="#080823"/><rect x="481.5" y="342" width="7.0" height="2" fill="#070722"/><rect x="481.5" y="344" width="7.0" height="2" fill="#070722"/><rect x="481.5" y="346" width="7.0" height="2" fill="#070722"/><rect x="481.5" y="348" width="7.0" height="2" fill="#070722"/><rect x="481.5" y="350" width="7.0" height="2" fill="#070722"/><rect x="481.5" y="352" width="7.0" height="2" fill="#070722"/><rect x="481.5" y="354" width="7.0" height="2" fill="#070722"/><rect x="481.5" y="356" width="7.0" height="2" fill="#070722"/><rect x="481.5" y="358" width="7.0" height="2" fill="#070722"/><rect x="481.5" y="360" width="7.0" height="2" fill="#070722"/><rect x="481.5" y="362" width="7.0" height="2" fill="#070721"/><rect x="481.5" y="364" width="7.0" height="2" fill="#070721"/><rect x="481.5" y="366" width="7.0" height="2" fill="#070721"/><rect x="481.5" y="368" width="7.0" height="2" fill="#070721"/><rect x="481.5" y="370" width="7.0" height="2" fill="#070721"/><rect x="481.5" y="372" width="7.0" height="2" fill="#070721"/><rect x="481.5" y="374" width="7.0" height="2" fill="#070721"/><rect x="481.5" y="376" width="7.0" height="2" fill="#070721"/><rect x="481.5" y="378" width="7.0" height="2" fill="#070721"/><rect x="481.5" y="380" width="7.0" height="2" fill="#070721"/><rect x="481.5" y="382" width="7.0" height="2" fill="#070721"/><rect x="481.5" y="384" width="7.0" height="2" fill="#070720"/><rect x="481.5" y="386" width="7.0" height="2" fill="#070720"/><rect x="481.5" y="388" width="7.0" height="2" fill="#070720"/><rect x="481.5" y="390" width="7.0" height="2" fill="#070720"/><rect x="481.5" y="392" width="7.0" height="2" fill="#070720"/><rect x="481.5" y="394" width="7.0" height="2" fill="#070720"/><rect x="481.5" y="396" width="7.0" height="2" fill="#070720"/><rect x="481.5" y="398" width="7.0" height="2" fill="#070720"/></g><g filter="url(#b05)"><rect x="484.3" y="16" width="2.4" height="2" fill="#010106"/><rect x="484.1" y="18" width="2.9" height="2" fill="#03030f"/><rect x="483.9" y="20" width="3.3" height="2" fill="#06061c"/><rect x="483.6" y="22" width="3.7" height="2" fill="#0a092c"/><rect x="483.4" y="24" width="4.1" height="2" fill="#0f0d3f"/><rect x="483.2" y="26" width="4.6" height="2" fill="#151255"/><rect x="483.0" y="28" width="5.0" height="2" fill="#1a155c"/><rect x="483.0" y="30" width="5.0" height="2" fill="#1e136a"/><rect x="483.0" y="32" width="5.0" height="2" fill="#1f146d"/><rect x="483.0" y="34" width="5.0" height="2" fill="#1e1469"/><rect x="483.0" y="36" width="5.0" height="2" fill="#1f1777"/><rect x="483.0" y="38" width="5.0" height="2" fill="#1b1663"/><rect x="483.0" y="40" width="5.0" height="2" fill="#1f1b76"/><rect x="483.0" y="42" width="5.0" height="2" fill="#23177e"/><rect x="483.0" y="44" width="5.0" height="2" fill="#1d177d"/><rect x="483.0" y="46" width="5.0" height="2" fill="#241868"/><rect x="483.0" y="48" width="5.0" height="2" fill="#201671"/><rect x="483.0" y="50" width="5.0" height="2" fill="#27178b"/><rect x="483.0" y="52" width="5.0" height="2" fill="#281679"/><rect x="483.0" y="54" width="5.0" height="2" fill="#25157c"/><rect x="483.0" y="56" width="5.0" height="2" fill="#2b1685"/><rect x="483.0" y="58" width="5.0" height="2" fill="#221b93"/><rect x="483.0" y="60" width="5.0" height="2" fill="#241673"/><rect x="483.0" y="62" width="5.0" height="2" fill="#2b1674"/><rect x="483.0" y="64" width="5.0" height="2" fill="#2d1e82"/><rect x="483.0" y="66" width="5.0" height="2" fill="#2e1c75"/><rect x="483.0" y="68" width="5.0" height="2" fill="#34188c"/><rect x="483.0" y="70" width="5.0" height="2" fill="#3d178a"/><rect x="483.0" y="72" width="5.0" height="2" fill="#3a197e"/><rect x="483.0" y="74" width="5.0" height="2" fill="#442078"/><rect x="483.0" y="76" width="5.0" height="2" fill="#41207e"/><rect x="483.0" y="78" width="5.0" height="2" fill="#421884"/><rect x="483.0" y="80" width="5.0" height="2" fill="#461d97"/><rect x="483.0" y="82" width="5.0" height="2" fill="#3c1b9c"/><rect x="483.0" y="84" width="5.0" height="2" fill="#4a1d88"/><rect x="483.0" y="86" width="5.0" height="2" fill="#561e77"/><rect x="483.0" y="88" width="5.0" height="2" fill="#551c8a"/><rect x="483.0" y="90" width="5.0" height="2" fill="#491d86"/><rect x="483.0" y="92" width="5.0" height="2" fill="#48207d"/><rect x="483.0" y="94" width="5.0" height="2" fill="#5e1b9c"/><rect x="483.0" y="96" width="5.0" height="2" fill="#62209a"/><rect x="483.0" y="98" width="5.0" height="2" fill="#55238e"/><rect x="483.0" y="100" width="5.0" height="2" fill="#57278d"/><rect x="483.0" y="102" width="5.0" height="2" fill="#5f268c"/><rect x="483.0" y="104" width="5.0" height="2" fill="#6b20a3"/><rect x="483.0" y="106" width="5.0" height="2" fill="#611faa"/><rect x="483.0" y="108" width="5.0" height="2" fill="#602aac"/><rect x="483.0" y="110" width="5.0" height="2" fill="#722081"/><rect x="483.0" y="112" width="5.0" height="2" fill="#67259c"/><rect x="483.0" y="114" width="5.0" height="2" fill="#862586"/><rect x="483.0" y="116" width="5.0" height="2" fill="#7b2383"/><rect x="483.0" y="118" width="5.0" height="2" fill="#7e2c81"/><rect x="483.0" y="120" width="5.0" height="2" fill="#7e2da2"/><rect x="483.0" y="122" width="5.0" height="2" fill="#7f3185"/><rect x="483.0" y="124" width="5.0" height="2" fill="#9131a5"/><rect x="483.0" y="126" width="5.0" height="2" fill="#8b287d"/><rect x="483.0" y="128" width="5.0" height="2" fill="#902a97"/><rect x="483.0" y="130" width="5.0" height="2" fill="#9b3398"/><rect x="483.0" y="132" width="5.0" height="2" fill="#9f3597"/><rect x="483.0" y="134" width="5.0" height="2" fill="#a33696"/><rect x="483.0" y="136" width="5.0" height="2" fill="#a93a91"/><rect x="483.0" y="138" width="5.0" height="2" fill="#b14287"/><rect x="483.0" y="140" width="5.0" height="2" fill="#b9497d"/><rect x="483.0" y="142" width="5.0" height="2" fill="#c25173"/><rect x="483.0" y="144" width="5.0" height="2" fill="#ca5869"/><rect x="483.0" y="146" width="5.0" height="2" fill="#d2605f"/><rect x="483.0" y="148" width="5.0" height="2" fill="#da6954"/><rect x="483.0" y="150" width="5.0" height="2" fill="#e07348"/><rect x="483.0" y="152" width="5.0" height="2" fill="#e67d3c"/><rect x="483.0" y="154" width="5.0" height="2" fill="#ec8730"/><rect x="483.0" y="156" width="5.0" height="2" fill="#f29124"/><rect x="483.0" y="158" width="5.0" height="2" fill="#f59a1d"/><rect x="483.0" y="160" width="5.0" height="2" fill="#f7a21b"/><rect x="483.0" y="162" width="5.0" height="2" fill="#f9aa19"/><rect x="483.0" y="164" width="5.0" height="2" fill="#fbb217"/><rect x="483.0" y="166" width="5.0" height="2" fill="#fdba15"/><rect x="483.0" y="168" width="5.0" height="2" fill="#ffc314"/><rect x="483.0" y="170" width="5.0" height="2" fill="#ffc314"/><rect x="483.0" y="172" width="5.0" height="2" fill="#ffc314"/><rect x="483.0" y="174" width="5.0" height="2" fill="#ffc414"/><rect x="483.0" y="176" width="5.0" height="2" fill="#ffc414"/><rect x="483.0" y="178" width="5.0" height="2" fill="#ffc514"/><rect x="483.0" y="180" width="5.0" height="2" fill="#ffc514"/><rect x="483.0" y="182" width="5.0" height="2" fill="#ffc614"/><rect x="483.0" y="184" width="5.0" height="2" fill="#ffc614"/><rect x="483.0" y="186" width="5.0" height="2" fill="#ffc714"/><rect x="483.0" y="188" width="5.0" height="2" fill="#ffc714"/><rect x="483.0" y="190" width="5.0" height="2" fill="#ffc814"/><rect x="483.0" y="192" width="5.0" height="2" fill="#fec414"/><rect x="483.0" y="194" width="5.0" height="2" fill="#fec114"/><rect x="483.0" y="196" width="5.0" height="2" fill="#fdbe15"/><rect x="483.0" y="198" width="5.0" height="2" fill="#fdba15"/><rect x="483.0" y="200" width="5.0" height="2" fill="#fcb715"/><rect x="483.0" y="202" width="5.0" height="2" fill="#fcb416"/><rect x="483.0" y="204" width="5.0" height="2" fill="#fbb016"/><rect x="483.0" y="206" width="5.0" height="2" fill="#fbad16"/><rect x="483.0" y="208" width="5.0" height="2" fill="#faaa17"/><rect x="483.0" y="210" width="5.0" height="2" fill="#faa617"/><rect x="483.0" y="212" width="5.0" height="2" fill="#f9a317"/><rect x="483.0" y="214" width="5.0" height="2" fill="#f9a018"/><rect x="483.0" y="216" width="5.0" height="2" fill="#f89c18"/><rect x="483.0" y="218" width="5.0" height="2" fill="#f89918"/><rect x="483.0" y="220" width="5.0" height="2" fill="#f89619"/><rect x="483.0" y="222" width="5.0" height="2" fill="#f38e21"/><rect x="483.0" y="224" width="5.0" height="2" fill="#ef8729"/><rect x="483.0" y="226" width="5.0" height="2" fill="#eb7f31"/><rect x="483.0" y="228" width="5.0" height="2" fill="#e77839"/><rect x="483.0" y="230" width="5.0" height="2" fill="#e37041"/><rect x="483.0" y="232" width="5.0" height="2" fill="#df6949"/><rect x="483.0" y="234" width="5.0" height="2" fill="#db6151"/><rect x="483.0" y="236" width="5.0" height="2" fill="#d75a5a"/><rect x="483.0" y="238" width="5.0" height="2" fill="#cd5361"/><rect x="483.0" y="240" width="5.0" height="2" fill="#c44d69"/><rect x="483.0" y="242" width="5.0" height="2" fill="#9a4962"/><rect x="483.0" y="244" width="5.0" height="2" fill="#8e3671"/><rect x="483.0" y="246" width="5.0" height="2" fill="#a3356e"/><rect x="483.0" y="248" width="5.0" height="2" fill="#963783"/><rect x="483.0" y="250" width="5.0" height="2" fill="#a2249f"/><rect x="483.0" y="252" width="5.0" height="2" fill="#9b2a8c"/><rect x="483.0" y="254" width="5.0" height="2" fill="#872e7a"/><rect x="483.0" y="256" width="5.0" height="2" fill="#872986"/><rect x="483.0" y="258" width="5.0" height="2" fill="#862a7f"/><rect x="483.0" y="260" width="5.0" height="2" fill="#802692"/><rect x="483.0" y="262" width="5.0" height="2" fill="#792199"/><rect x="483.0" y="264" width="5.0" height="2" fill="#6c2a8a"/><rect x="483.0" y="266" width="5.0" height="2" fill="#77289e"/><rect x="483.0" y="268" width="5.0" height="2" fill="#741f9f"/><rect x="483.0" y="270" width="5.0" height="2" fill="#672698"/><rect x="483.0" y="272" width="5.0" height="2" fill="#5420a2"/><rect x="483.0" y="274" width="5.0" height="2" fill="#551f95"/><rect x="483.0" y="276" width="5.0" height="2" fill="#5c2485"/><rect x="483.0" y="278" width="5.0" height="2" fill="#6222aa"/><rect x="483.0" y="280" width="5.0" height="2" fill="#4a29a1"/><rect x="483.0" y="282" width="5.0" height="2" fill="#6329ad"/><rect x="483.0" y="284" width="5.0" height="2" fill="#49228f"/><rect x="483.0" y="286" width="5.0" height="2" fill="#59208e"/><rect x="483.0" y="288" width="5.0" height="2" fill="#451fb2"/><rect x="483.0" y="290" width="5.0" height="2" fill="#5922a8"/><rect x="483.0" y="292" width="5.0" height="2" fill="#4a2496"/><rect x="483.0" y="294" width="5.0" height="2" fill="#4c2190"/><rect x="483.0" y="296" width="5.0" height="2" fill="#472099"/><rect x="483.0" y="298" width="5.0" height="2" fill="#4e1e89"/><rect x="483.3" y="300" width="4.0" height="2" fill="#481d8a"/><rect x="483.3" y="302" width="4.0" height="2" fill="#482487"/><rect x="483.3" y="304" width="4.0" height="2" fill="#341f8b"/><rect x="483.3" y="306" width="4.0" height="2" fill="#4529a7"/><rect x="483.3" y="308" width="4.0" height="2" fill="#4628ab"/><rect x="483.3" y="310" width="4.0" height="2" fill="#45287e"/><rect x="483.3" y="312" width="4.0" height="2" fill="#371f9a"/><rect x="483.3" y="314" width="4.0" height="2" fill="#3a20a7"/><rect x="483.3" y="316" width="4.0" height="2" fill="#371e87"/><rect x="483.3" y="318" width="4.0" height="2" fill="#372396"/><rect x="483.3" y="320" width="4.0" height="2" fill="#361d8d"/><rect x="483.3" y="322" width="4.0" height="2" fill="#321d94"/><rect x="483.3" y="324" width="4.0" height="2" fill="#2f2499"/><rect x="483.3" y="326" width="4.0" height="2" fill="#2d2387"/><rect x="483.3" y="328" width="4.0" height="2" fill="#32229e"/><rect x="483.3" y="330" width="4.0" height="2" fill="#3a247f"/><rect x="483.3" y="332" width="4.0" height="2" fill="#331f74"/><rect x="483.3" y="334" width="4.0" height="2" fill="#3220a1"/><rect x="483.3" y="336" width="4.0" height="2" fill="#2d248d"/><rect x="483.3" y="338" width="4.0" height="2" fill="#292380"/><rect x="483.3" y="340" width="4.0" height="2" fill="#301a71"/><rect x="483.3" y="342" width="4.0" height="2" fill="#371a78"/><rect x="483.3" y="344" width="4.0" height="2" fill="#291a9b"/><rect x="483.3" y="346" width="4.0" height="2" fill="#372184"/><rect x="483.3" y="348" width="4.0" height="2" fill="#341f75"/><rect x="483.3" y="350" width="4.0" height="2" fill="#301d7c"/><rect x="483.3" y="352" width="4.0" height="2" fill="#291d76"/><rect x="483.3" y="354" width="4.0" height="2" fill="#2e228a"/><rect x="483.3" y="356" width="4.0" height="2" fill="#23206d"/><rect x="483.3" y="358" width="4.0" height="2" fill="#2a228d"/><rect x="483.3" y="360" width="4.0" height="2" fill="#312078"/><rect x="483.3" y="362" width="4.0" height="2" fill="#241d8c"/><rect x="483.3" y="364" width="4.0" height="2" fill="#251b8f"/><rect x="483.3" y="366" width="4.0" height="2" fill="#261e84"/><rect x="483.3" y="368" width="4.0" height="2" fill="#2e1771"/><rect x="483.3" y="370" width="4.0" height="2" fill="#2b1e6c"/><rect x="483.3" y="372" width="4.0" height="2" fill="#211981"/><rect x="483.3" y="374" width="4.0" height="2" fill="#2c1970"/><rect x="483.3" y="376" width="4.0" height="2" fill="#281b8e"/><rect x="483.3" y="378" width="4.0" height="2" fill="#2c2087"/><rect x="483.3" y="380" width="4.0" height="2" fill="#24178b"/><rect x="483.3" y="382" width="4.0" height="2" fill="#231b82"/><rect x="483.3" y="384" width="4.0" height="2" fill="#2a1c8f"/><rect x="483.3" y="386" width="4.0" height="2" fill="#2a1774"/><rect x="483.3" y="388" width="4.0" height="2" fill="#281e90"/><rect x="483.3" y="390" width="4.0" height="2" fill="#1f1b8e"/><rect x="483.3" y="392" width="4.0" height="2" fill="#231c8f"/><rect x="483.3" y="394" width="4.0" height="2" fill="#1e1689"/><rect x="483.3" y="396" width="4.0" height="2" fill="#231787"/><rect x="483.3" y="398" width="4.0" height="2" fill="#1f176e"/><rect x="483.3" y="400" width="4.0" height="2" fill="#1b1984"/><rect x="483.3" y="402" width="4.0" height="2" fill="#201f62"/><rect x="483.3" y="404" width="4.0" height="2" fill="#1d1679"/><rect x="483.3" y="406" width="4.0" height="2" fill="#1d1c77"/><rect x="483.3" y="408" width="4.0" height="2" fill="#211d82"/><rect x="483.3" y="410" width="4.0" height="2" fill="#25166f"/><rect x="483.3" y="412" width="4.0" height="2" fill="#25196a"/><rect x="483.3" y="414" width="4.0" height="2" fill="#1f1683"/><rect x="483.3" y="416" width="4.0" height="2" fill="#201587"/><rect x="483.3" y="418" width="4.0" height="2" fill="#1f1777"/><rect x="483.3" y="420" width="4.0" height="2" fill="#23185d"/><rect x="483.3" y="422" width="4.0" height="2" fill="#1a1573"/><rect x="483.3" y="424" width="4.0" height="2" fill="#1b1c64"/><rect x="483.3" y="426" width="4.0" height="2" fill="#181860"/><rect x="483.3" y="428" width="4.0" height="2" fill="#1b1662"/><rect x="483.3" y="430" width="4.0" height="2" fill="#1e1d6a"/><rect x="483.3" y="432" width="4.0" height="2" fill="#1e1780"/><rect x="483.3" y="434" width="4.0" height="2" fill="#1d1478"/><rect x="483.3" y="436" width="4.0" height="2" fill="#19145a"/><rect x="483.3" y="438" width="4.0" height="2" fill="#1f1a67"/><rect x="483.3" y="440" width="4.0" height="2" fill="#1c1a5b"/><rect x="483.3" y="442" width="4.0" height="2" fill="#1d1a7e"/><rect x="483.3" y="444" width="4.0" height="2" fill="#16196c"/><rect x="483.3" y="446" width="4.0" height="2" fill="#1e1772"/><rect x="483.3" y="448" width="4.0" height="2" fill="#1e166b"/><rect x="483" y="20.0" width="1.6" height="1.2" fill="#05051f"/><rect x="483" y="23.3" width="1.6" height="1.2" fill="#070728"/><rect x="483" y="26.6" width="1.6" height="1.2" fill="#080832"/><rect x="483" y="29.9" width="1.6" height="1.2" fill="#09093b"/><rect x="483" y="33.2" width="1.6" height="1.2" fill="#0a0a3e"/><rect x="483" y="36.5" width="1.6" height="1.2" fill="#0b0b40"/><rect x="483" y="39.8" width="1.6" height="1.2" fill="#0b0b42"/><rect x="483" y="43.1" width="1.6" height="1.2" fill="#0c0c45"/><rect x="483" y="46.4" width="1.6" height="1.2" fill="#0d0c47"/><rect x="483" y="49.7" width="1.6" height="1.2" fill="#0d0d49"/><rect x="483" y="53.0" width="1.6" height="1.2" fill="#0e0d4c"/><rect x="483" y="56.3" width="1.6" height="1.2" fill="#0f0e4e"/><rect x="483" y="59.6" width="1.6" height="1.2" fill="#0f0e50"/><rect x="483" y="62.9" width="1.6" height="1.2" fill="#100f53"/><rect x="483" y="66.2" width="1.6" height="1.2" fill="#110f55"/><rect x="483" y="69.5" width="1.6" height="1.2" fill="#111057"/><rect x="483" y="72.8" width="1.6" height="1.2" fill="#121059"/><rect x="483" y="76.1" width="1.6" height="1.2" fill="#13115c"/><rect x="483" y="79.4" width="1.6" height="1.2" fill="#13115e"/><rect x="483" y="82.7" width="1.6" height="1.2" fill="#15125f"/><rect x="483" y="86.0" width="1.6" height="1.2" fill="#161260"/><rect x="483" y="89.3" width="1.6" height="1.2" fill="#171261"/><rect x="483" y="92.6" width="1.6" height="1.2" fill="#191262"/><rect x="483" y="95.9" width="1.6" height="1.2" fill="#1a1263"/><rect x="483" y="99.2" width="1.6" height="1.2" fill="#1b1264"/><rect x="483" y="102.5" width="1.6" height="1.2" fill="#1c1265"/><rect x="483" y="105.8" width="1.6" height="1.2" fill="#1e1366"/><rect x="483" y="109.1" width="1.6" height="1.2" fill="#1f1367"/><rect x="483" y="112.4" width="1.6" height="1.2" fill="#201368"/><rect x="483" y="115.7" width="1.6" height="1.2" fill="#221369"/><rect x="483" y="119.0" width="1.6" height="1.2" fill="#23136a"/><rect x="483" y="122.3" width="1.6" height="1.2" fill="#24136b"/><rect x="483" y="125.6" width="1.6" height="1.2" fill="#26136c"/><rect x="483" y="128.9" width="1.6" height="1.2" fill="#27136d"/><rect x="483" y="132.2" width="1.6" height="1.2" fill="#2b146f"/><rect x="483" y="135.5" width="1.6" height="1.2" fill="#2f1472"/><rect x="483" y="138.8" width="1.6" height="1.2" fill="#341475"/><rect x="483" y="142.1" width="1.6" height="1.2" fill="#381477"/><rect x="483" y="145.4" width="1.6" height="1.2" fill="#3d157a"/><rect x="483" y="148.7" width="1.6" height="1.2" fill="#42157c"/><rect x="483" y="152.0" width="1.6" height="1.2" fill="#46157f"/><rect x="483" y="155.3" width="1.6" height="1.2" fill="#4b1682"/><rect x="483" y="158.6" width="1.6" height="1.2" fill="#4b1682"/><rect x="483" y="161.9" width="1.6" height="1.2" fill="#4b1682"/><rect x="483" y="165.2" width="1.6" height="1.2" fill="#4b1682"/><rect x="483" y="168.5" width="1.6" height="1.2" fill="#4b1682"/><rect x="483" y="171.8" width="1.6" height="1.2" fill="#4b1682"/><rect x="483" y="175.1" width="1.6" height="1.2" fill="#4b1682"/><rect x="483" y="178.4" width="1.6" height="1.2" fill="#4b1682"/><rect x="483" y="181.7" width="1.6" height="1.2" fill="#4b1682"/><rect x="483" y="185.0" width="1.6" height="1.2" fill="#4b1682"/><rect x="483" y="188.3" width="1.6" height="1.2" fill="#4b1682"/><rect x="483" y="191.6" width="1.6" height="1.2" fill="#4b1682"/><rect x="483" y="194.9" width="1.6" height="1.2" fill="#4b1682"/><rect x="483" y="198.2" width="1.6" height="1.2" fill="#4b1682"/><rect x="483" y="201.5" width="1.6" height="1.2" fill="#4b1682"/><rect x="483" y="204.8" width="1.6" height="1.2" fill="#4b1682"/><rect x="483" y="208.1" width="1.6" height="1.2" fill="#4b1682"/><rect x="483" y="211.4" width="1.6" height="1.2" fill="#4b1682"/><rect x="483" y="214.7" width="1.6" height="1.2" fill="#4b1682"/><rect x="483" y="218.0" width="1.6" height="1.2" fill="#47157f"/><rect x="483" y="221.3" width="1.6" height="1.2" fill="#43157c"/><rect x="483" y="224.6" width="1.6" height="1.2" fill="#3f157a"/><rect x="483" y="227.9" width="1.6" height="1.2" fill="#3b1477"/><rect x="483" y="231.2" width="1.6" height="1.2" fill="#371475"/><rect x="483" y="234.5" width="1.6" height="1.2" fill="#331472"/><rect x="483" y="237.8" width="1.6" height="1.2" fill="#2f146f"/><rect x="483" y="241.1" width="1.6" height="1.2" fill="#2c136d"/><rect x="483" y="244.4" width="1.6" height="1.2" fill="#2a136a"/><rect x="483" y="247.7" width="1.6" height="1.2" fill="#281368"/><rect x="483" y="251.0" width="1.6" height="1.2" fill="#261265"/><rect x="483" y="254.3" width="1.6" height="1.2" fill="#241263"/><rect x="483" y="257.6" width="1.6" height="1.2" fill="#211260"/><rect x="483" y="260.9" width="1.6" height="1.2" fill="#1f115e"/><rect x="483" y="264.2" width="1.6" height="1.2" fill="#1d115b"/><rect x="483" y="267.5" width="1.6" height="1.2" fill="#1b1159"/><rect x="483" y="270.8" width="1.6" height="1.2" fill="#191056"/><rect x="483" y="274.1" width="1.6" height="1.2" fill="#171054"/><rect x="483" y="277.4" width="1.6" height="1.2" fill="#151051"/><rect x="483" y="280.7" width="1.6" height="1.2" fill="#130f4f"/><rect x="483" y="284.0" width="1.6" height="1.2" fill="#130f4c"/><rect x="483" y="287.3" width="1.6" height="1.2" fill="#120f4a"/><rect x="483" y="290.6" width="1.6" height="1.2" fill="#110e48"/><rect x="483" y="293.9" width="1.6" height="1.2" fill="#110e45"/><rect x="483" y="297.2" width="1.6" height="1.2" fill="#100d43"/><rect x="483" y="300.5" width="1.6" height="1.2" fill="#0f0d40"/><rect x="483" y="303.8" width="1.6" height="1.2" fill="#0f0c3e"/><rect x="483" y="307.1" width="1.6" height="1.2" fill="#0e0c3b"/><rect x="483" y="310.4" width="1.6" height="1.2" fill="#0d0b39"/><rect x="483" y="313.7" width="1.6" height="1.2" fill="#0d0b36"/><rect x="483" y="317.0" width="1.6" height="1.2" fill="#0c0b34"/><rect x="483" y="320.3" width="1.6" height="1.2" fill="#0b0a31"/><rect x="483" y="323.6" width="1.6" height="1.2" fill="#0b0a2f"/><rect x="483" y="326.9" width="1.6" height="1.2" fill="#0a092c"/></g><g filter="url(#b1)"><rect x="483.6" y="450" width="3" height="3" fill="#25159f"/><rect x="483.7" y="455" width="3" height="3" fill="#1b1b9f"/><rect x="484.0" y="458" width="3" height="3" fill="#171a8d"/><rect x="484.3" y="463" width="3" height="3" fill="#1a1b60"/><rect x="483.3" y="468" width="3" height="3" fill="#1e2060"/><rect x="483.7" y="472" width="3" height="3" fill="#1d1579"/><rect x="483.4" y="476" width="3" height="3" fill="#26239e"/><rect x="483.9" y="479" width="3" height="3" fill="#1a1f7f"/><rect x="483.5" y="482" width="3" height="3" fill="#191e75"/><rect x="483.6" y="486" width="3" height="3" fill="#26157f"/><rect x="484.0" y="491" width="3" height="3" fill="#24177b"/><rect x="484.4" y="496" width="3" height="3" fill="#231c9c"/><rect x="484.0" y="502" width="3" height="3" fill="#221b83"/><rect x="484.2" y="507" width="3" height="3" fill="#23158e"/><rect x="483.8" y="511" width="3" height="3" fill="#161b82"/><rect x="483.8" y="515" width="3" height="3" fill="#251c76"/><rect x="484.0" y="518" width="3" height="3" fill="#1e146e"/><rect x="483.9" y="521" width="3" height="3" fill="#231d6c"/><rect x="483.7" y="525" width="3" height="3" fill="#15217d"/><rect x="483.4" y="531" width="3" height="3" fill="#242370"/><rect x="484.3" y="535" width="3" height="3" fill="#20197a"/><rect x="483.9" y="539" width="3" height="3" fill="#241860"/><rect x="483.3" y="543" width="3" height="3" fill="#221d90"/><rect x="483.8" y="548" width="3" height="3" fill="#181873"/><rect x="483.3" y="552" width="3" height="3" fill="#171e62"/><rect x="483.8" y="555" width="3" height="3" fill="#21216d"/><rect x="484.2" y="559" width="3" height="3" fill="#211b65"/><rect x="484.2" y="563" width="3" height="3" fill="#23158d"/><rect x="484.0" y="567" width="3" height="3" fill="#1f1867"/><rect x="484.1" y="571" width="3" height="3" fill="#1c1c75"/><rect x="483.5" y="575" width="3" height="3" fill="#1c1a5f"/><rect x="483.9" y="579" width="3" height="3" fill="#20175a"/><rect x="483.9" y="583" width="3" height="3" fill="#1c1660"/><rect x="483.6" y="588" width="3" height="3" fill="#1d2062"/><rect x="483.3" y="592" width="3" height="3" fill="#1a225e"/><rect x="484.0" y="596" width="3" height="3" fill="#1d2284"/><rect x="483.5" y="602" width="3" height="3" fill="#222282"/><rect x="483.4" y="608" width="3" height="3" fill="#19196c"/><rect x="483.5" y="614" width="3" height="3" fill="#162061"/><rect x="483.9" y="618" width="3" height="3" fill="#201486"/><rect x="483.9" y="623" width="3" height="3" fill="#161e86"/><rect x="483.8" y="628" width="3" height="3" fill="#15165f"/><rect x="484.3" y="632" width="3" height="3" fill="#1b1870"/><rect x="483.5" y="638" width="3" height="3" fill="#1d1860"/><rect x="484.2" y="643" width="3" height="3" fill="#211f7a"/><rect x="484.1" y="647" width="3" height="3" fill="#171e84"/><rect x="484.1" y="650" width="3" height="3" fill="#171f87"/><rect x="484.1" y="653" width="3" height="3" fill="#201e5b"/><rect x="483.3" y="657" width="3" height="3" fill="#18206c"/></g><g filter="url(#b2)"><ellipse cx="494" cy="179" rx="6" ry="5" fill="#4a1aa0" opacity="0.7"/><ellipse cx="502" cy="184" rx="3" ry="3" fill="#1a1a80" opacity="0.8"/></g><g filter="url(#b1)"><path d="M488 175 L496.5 182 L495 187 L488 189 Z" fill="#ffb828"/></g><g filter="url(#nb)"><path d="M485.5 169.5 L488.5 169.5 L489.6 177 L489.8 188 L487 190 L482 189.6 L480.6 184 L481.5 179 L483.5 174 Z" fill="#fffbea"/></g><g filter="url(#b1)"><rect x="95.2" y="130" width="3" height="3" fill="#1c1c9c"/><rect x="95.2" y="134" width="3" height="3" fill="#1c1c84"/><rect x="94.6" y="138" width="3" height="4" fill="#1c1cad"/><rect x="95.3" y="143" width="3" height="3" fill="#1c1cbf"/><rect x="94.7" y="148" width="3" height="4" fill="#1c1cae"/><rect x="94.6" y="154" width="3" height="3" fill="#1c1cba"/><rect x="95.5" y="159" width="3" height="3" fill="#1c1c90"/><rect x="95.3" y="169" width="3" height="3" fill="#1c1c9a"/><rect x="94.5" y="173" width="3" height="4" fill="#1c1cc2"/><rect x="95.1" y="183" width="3" height="2" fill="#1c1c9b"/><rect x="95.5" y="192" width="3" height="3" fill="#1c1c92"/><rect x="94.5" y="196" width="3" height="3" fill="#1c1c93"/><rect x="95.0" y="200" width="3" height="2" fill="#1c1c82"/><rect x="95.2" y="203" width="3" height="2" fill="#1c1c8b"/><rect x="94.6" y="207" width="3" height="3" fill="#1c1c82"/><rect x="95.3" y="211" width="3" height="3" fill="#1c1c8d"/><rect x="95.5" y="216" width="3" height="3" fill="#1c1c9f"/><rect x="94.8" y="221" width="3" height="3" fill="#1c1cac"/><rect x="95.3" y="230" width="3" height="2" fill="#1c1cbf"/></g><g filter="url(#b1)"><ellipse cx="96.5" cy="182.0" rx="1.8" ry="16.0" fill="#4a22a0"/><ellipse cx="96.5" cy="181.4" rx="1.8" ry="9.6" fill="#a03a80"/><ellipse cx="96.5" cy="181.4" rx="1.8" ry="6.0" fill="#f09a40"/><ellipse cx="96.5" cy="181.4" rx="1.3" ry="3.0" fill="#f8c050"/></g><g filter="url(#b1)"><rect x="199.4" y="108" width="3" height="2" fill="#1c1ca4"/><rect x="199.2" y="111" width="3" height="4" fill="#1c1cba"/><rect x="198.7" y="116" width="3" height="4" fill="#1c1c91"/><rect x="198.6" y="121" width="3" height="4" fill="#1c1cb9"/><rect x="199.2" y="126" width="3" height="4" fill="#1c1c93"/><rect x="199.4" y="131" width="3" height="4" fill="#1c1cb3"/><rect x="199.0" y="136" width="3" height="2" fill="#1c1cab"/><rect x="198.5" y="144" width="3" height="3" fill="#1c1caf"/><rect x="199.5" y="148" width="3" height="4" fill="#1c1ca7"/><rect x="199.2" y="153" width="3" height="3" fill="#1c1ca2"/><rect x="199.5" y="158" width="3" height="3" fill="#1c1ca2"/><rect x="198.8" y="167" width="3" height="3" fill="#1c1c8a"/><rect x="198.8" y="171" width="3" height="4" fill="#1c1c83"/><rect x="198.7" y="176" width="3" height="3" fill="#1c1cc4"/><rect x="199.5" y="181" width="3" height="4" fill="#1c1c9e"/><rect x="198.9" y="186" width="3" height="3" fill="#1c1c8a"/><rect x="199.5" y="191" width="3" height="3" fill="#1c1c85"/><rect x="198.5" y="195" width="3" height="3" fill="#1c1c94"/><rect x="199.3" y="199" width="3" height="4" fill="#1c1cbc"/><rect x="198.7" y="204" width="3" height="2" fill="#1c1cc4"/><rect x="199.3" y="208" width="3" height="3" fill="#1c1c8e"/><rect x="199.1" y="212" width="3" height="4" fill="#1c1c84"/><rect x="199.2" y="218" width="3" height="2" fill="#1c1c8e"/><rect x="198.6" y="221" width="3" height="4" fill="#1c1c9e"/><rect x="198.7" y="227" width="3" height="3" fill="#1c1c8c"/><rect x="199.2" y="231" width="3" height="3" fill="#1c1cb6"/><rect x="199.0" y="235" width="3" height="4" fill="#1c1c87"/><rect x="199.2" y="249" width="3" height="4" fill="#1c1c88"/></g><g filter="url(#b1)"><ellipse cx="200.5" cy="176.0" rx="1.8" ry="16.0" fill="#4a22a0"/><ellipse cx="200.5" cy="175.0" rx="1.8" ry="11.2" fill="#a03a80"/><ellipse cx="200.5" cy="175.0" rx="1.8" ry="7.0" fill="#f09040"/></g><g filter="url(#b1)"><rect x="437.0" y="112" width="3" height="3" fill="#1c1c8c"/><rect x="436.9" y="117" width="3" height="3" fill="#1c1c82"/><rect x="436.6" y="121" width="3" height="4" fill="#1c1ca2"/><rect x="437.4" y="126" width="3" height="3" fill="#1c1cad"/><rect x="436.6" y="130" width="3" height="3" fill="#1c1cba"/><rect x="436.9" y="134" width="3" height="2" fill="#1c1c9d"/><rect x="437.5" y="138" width="3" height="3" fill="#1c1cc1"/><rect x="436.8" y="142" width="3" height="4" fill="#1c1cbd"/><rect x="436.9" y="148" width="3" height="2" fill="#1c1c8f"/><rect x="436.9" y="152" width="3" height="4" fill="#1c1cb2"/><rect x="436.7" y="157" width="3" height="3" fill="#1c1c86"/><rect x="437.2" y="161" width="3" height="3" fill="#1c1cc0"/><rect x="437.3" y="165" width="3" height="3" fill="#1c1c97"/><rect x="436.7" y="175" width="3" height="2" fill="#1c1cae"/><rect x="437.0" y="187" width="3" height="3" fill="#1c1c92"/><rect x="437.3" y="191" width="3" height="3" fill="#1c1c9b"/><rect x="437.1" y="201" width="3" height="3" fill="#1c1cad"/><rect x="436.8" y="205" width="3" height="3" fill="#1c1ca2"/><rect x="436.8" y="209" width="3" height="3" fill="#1c1c90"/><rect x="436.6" y="214" width="3" height="3" fill="#1c1c8a"/></g><g filter="url(#b1)"><ellipse cx="438.5" cy="182.5" rx="2.2" ry="22.5" fill="#4a22a0"/><ellipse cx="438.5" cy="181.0" rx="2.2" ry="12.8" fill="#a03a80"/><ellipse cx="438.5" cy="181.0" rx="2.1" ry="8.0" fill="#f0a040"/><ellipse cx="438.5" cy="181.0" rx="1.5" ry="4.0" fill="#ffd050"/></g><g filter="url(#b1)"><rect x="707.6" y="118" width="3" height="3" fill="#1c1c91"/><rect x="707.5" y="122" width="3" height="4" fill="#1c1cc7"/><rect x="708.4" y="136" width="3" height="3" fill="#1c1cbb"/><rect x="707.7" y="141" width="3" height="2" fill="#1c1c8d"/><rect x="707.6" y="144" width="3" height="3" fill="#1c1c91"/><rect x="707.8" y="148" width="3" height="3" fill="#1c1ca1"/><rect x="708.3" y="153" width="3" height="3" fill="#1c1c8b"/><rect x="707.9" y="157" width="3" height="3" fill="#1c1cab"/><rect x="707.8" y="165" width="3" height="3" fill="#1c1c92"/><rect x="708.4" y="174" width="3" height="2" fill="#1c1c99"/><rect x="707.9" y="177" width="3" height="3" fill="#1c1c98"/><rect x="707.6" y="182" width="3" height="3" fill="#1c1ca3"/><rect x="707.6" y="187" width="3" height="3" fill="#1c1cc6"/><rect x="707.8" y="191" width="3" height="3" fill="#1c1cb2"/><rect x="707.9" y="200" width="3" height="3" fill="#1c1ca4"/><rect x="707.9" y="210" width="3" height="3" fill="#1c1cc0"/><rect x="708.5" y="214" width="3" height="4" fill="#1c1c9e"/><rect x="708.3" y="228" width="3" height="4" fill="#1c1cb1"/></g><g filter="url(#b1)"><ellipse cx="709.5" cy="173.0" rx="1.9" ry="25.0" fill="#4a22a0"/><ellipse cx="709.5" cy="171.0" rx="1.9" ry="12.8" fill="#a03a80"/><ellipse cx="709.5" cy="171.0" rx="1.9" ry="8.0" fill="#f09a40"/><ellipse cx="709.5" cy="171.0" rx="1.3" ry="4.0" fill="#f8c050"/></g><g filter="url(#b1)"><rect x="771" y="175" width="2" height="2" fill="#141469"/><rect x="767" y="162" width="3" height="2" fill="#141478"/><rect x="790" y="194" width="2" height="2" fill="#141463"/><rect x="790" y="195" width="4" height="2" fill="#14147a"/><rect x="755" y="172" width="2" height="2" fill="#14148f"/><rect x="786" y="166" width="2" height="2" fill="#14147a"/><rect x="779" y="166" width="3" height="2" fill="#14146e"/><rect x="762" y="160" width="4" height="2" fill="#14148b"/><rect x="771" y="189" width="3" height="2" fill="#141467"/><rect x="769" y="167" width="2" height="2" fill="#14145f"/><rect x="767" y="199" width="4" height="2" fill="#141493"/><rect x="783" y="193" width="4" height="2" fill="#14147c"/><rect x="759" y="161" width="4" height="2" fill="#141489"/><rect x="768" y="202" width="3" height="2" fill="#141490"/><rect x="760" y="161" width="4" height="2" fill="#141477"/><rect x="760" y="205" width="4" height="2" fill="#141460"/><rect x="772" y="183" width="4" height="2" fill="#14148b"/><rect x="790" y="162" width="3" height="2" fill="#141495"/><rect x="788" y="158" width="3" height="2" fill="#14148a"/><rect x="792" y="193" width="4" height="2" fill="#141469"/><rect x="769" y="191" width="3" height="2" fill="#141473"/><rect x="802" y="163" width="3" height="2" fill="#14145a"/><rect x="757" y="158" width="3" height="2" fill="#141482"/><rect x="757" y="202" width="3" height="2" fill="#14148a"/><rect x="782" y="162" width="3" height="2" fill="#14147a"/><rect x="791" y="199" width="3" height="2" fill="#14145d"/><rect x="796" y="185" width="4" height="2" fill="#141483"/><rect x="761" y="164" width="3" height="2" fill="#14147b"/><rect x="760" y="156" width="3" height="2" fill="#141494"/><rect x="777" y="203" width="3" height="2" fill="#14147e"/><rect x="755" y="158" width="3" height="2" fill="#141463"/><rect x="803" y="203" width="2" height="2" fill="#141486"/><rect x="755" y="170" width="2" height="2" fill="#141484"/><rect x="784" y="162" width="3" height="2" fill="#141478"/><rect x="761" y="163" width="2" height="2" fill="#14146a"/><rect x="768" y="204" width="2" height="2" fill="#141464"/><rect x="765" y="164" width="2" height="2" fill="#14145d"/><rect x="769" y="197" width="4" height="2" fill="#14148b"/><rect x="779" y="191" width="4" height="2" fill="#141488"/><rect x="793" y="181" width="3" height="2" fill="#14147a"/></g><ellipse cx="230.0" cy="181.6" rx="2.5" ry="6.0" fill="#5a22a0" filter="url(#b1)"/><ellipse cx="230.0" cy="181.6" rx="1.7" ry="3.0" fill="#e88040" filter="url(#b1)"/><ellipse cx="47.0" cy="180.5" rx="2.2" ry="4.0" fill="#8a3090" filter="url(#b1)"/><ellipse cx="165.0" cy="173.0" rx="1.5" ry="4.0" fill="#2a2a90" filter="url(#b1)"/><ellipse cx="693.7" cy="183.5" rx="2.0" ry="3.0" fill="#802090" filter="url(#b1)"/><ellipse cx="729.5" cy="187.0" rx="2.0" ry="5.0" fill="#6a2090" filter="url(#b1)"/><ellipse cx="557.0" cy="183.0" rx="1.5" ry="2.0" fill="#3030a0" filter="url(#b1)"/><ellipse cx="636.6" cy="196.0" rx="1.5" ry="5.0" fill="#2a2a90" filter="url(#b1)"/><ellipse cx="533.0" cy="165.0" rx="1.2" ry="12.0" fill="#20207a" filter="url(#b1)"/></g><rect x="3" y="3" width="311" height="45" fill="#ffffff"/><rect x="5" y="53" width="99" height="39" fill="#ffffff"/><rect x="5" y="53" width="99" height="16" fill="url(#cbar)"/><rect x="8" y="69" width="1" height="4" fill="#000"/><rect x="12" y="69" width="1" height="4" fill="#000"/><rect x="17" y="69" width="1" height="4" fill="#000"/><rect x="21" y="69" width="1" height="4" fill="#000"/><rect x="26" y="69" width="1" height="7" fill="#000"/><rect x="30" y="69" width="1" height="4" fill="#000"/><rect x="35" y="69" width="1" height="4" fill="#000"/><rect x="39" y="69" width="1" height="4" fill="#000"/><rect x="44" y="69" width="1" height="4" fill="#000"/><rect x="48" y="69" width="1" height="10" fill="#000"/><rect x="52" y="69" width="1" height="4" fill="#000"/><rect x="57" y="69" width="1" height="4" fill="#000"/><rect x="61" y="69" width="1" height="4" fill="#000"/><rect x="66" y="69" width="1" height="4" fill="#000"/><rect x="70" y="69" width="1" height="7" fill="#000"/><rect x="75" y="69" width="1" height="4" fill="#000"/><rect x="79" y="69" width="1" height="4" fill="#000"/><rect x="83" y="69" width="1" height="4" fill="#000"/><rect x="88" y="69" width="1" height="4" fill="#000"/><rect x="92" y="69" width="1" height="10" fill="#000"/><rect x="97" y="69" width="1" height="4" fill="#000"/><rect x="101" y="69" width="1" height="4" fill="#000"/><rect x="818" y="2" width="8" height="1" fill="#000"/><rect x="818" y="10" width="8" height="1" fill="#000"/><rect x="818" y="18" width="11" height="1" fill="#000"/><rect x="818" y="25" width="8" height="1" fill="#000"/><rect x="818" y="33" width="8" height="1" fill="#000"/><rect x="818" y="41" width="8" height="1" fill="#000"/><rect x="818" y="49" width="8" height="1" fill="#000"/><rect x="818" y="57" width="8" height="1" fill="#000"/><rect x="818" y="64" width="8" height="1" fill="#000"/><rect x="818" y="72" width="8" height="1" fill="#000"/><rect x="818" y="80" width="8" height="1" fill="#000"/><rect x="818" y="88" width="8" height="1" fill="#000"/><rect x="818" y="96" width="26" height="1" fill="#000"/><rect x="818" y="103" width="8" height="1" fill="#000"/><rect x="818" y="111" width="8" height="1" fill="#000"/><rect x="818" y="119" width="8" height="1" fill="#000"/><rect x="818" y="127" width="8" height="1" fill="#000"/><rect x="818" y="135" width="8" height="1" fill="#000"/><rect x="818" y="143" width="8" height="1" fill="#000"/><rect x="818" y="150" width="8" height="1" fill="#000"/><rect x="818" y="158" width="8" height="1" fill="#000"/><rect x="818" y="166" width="8" height="1" fill="#000"/><rect x="818" y="174" width="11" height="1" fill="#000"/><rect x="818" y="182" width="8" height="1" fill="#000"/><rect x="818" y="189" width="8" height="1" fill="#000"/><rect x="818" y="197" width="8" height="1" fill="#000"/><rect x="818" y="205" width="8" height="1" fill="#000"/><rect x="818" y="213" width="8" height="1" fill="#000"/><rect x="818" y="221" width="8" height="1" fill="#000"/><rect x="818" y="228" width="8" height="1" fill="#000"/><rect x="818" y="236" width="8" height="1" fill="#000"/><rect x="818" y="244" width="8" height="1" fill="#000"/><rect x="818" y="252" width="26" height="1" fill="#000"/><rect x="818" y="260" width="8" height="1" fill="#000"/><rect x="818" y="267" width="8" height="1" fill="#000"/><rect x="818" y="275" width="8" height="1" fill="#000"/><rect x="818" y="283" width="8" height="1" fill="#000"/><rect x="818" y="291" width="8" height="1" fill="#000"/><rect x="818" y="299" width="8" height="1" fill="#000"/><rect x="818" y="307" width="8" height="1" fill="#000"/><rect x="818" y="314" width="8" height="1" fill="#000"/><rect x="818" y="322" width="8" height="1" fill="#000"/><rect x="818" y="330" width="11" height="1" fill="#000"/><rect x="818" y="338" width="8" height="1" fill="#000"/><rect x="818" y="346" width="8" height="1" fill="#000"/><rect x="818" y="353" width="8" height="1" fill="#000"/><rect x="818" y="361" width="8" height="1" fill="#000"/><rect x="818" y="369" width="8" height="1" fill="#000"/><rect x="818" y="377" width="8" height="1" fill="#000"/><rect x="818" y="385" width="8" height="1" fill="#000"/><rect x="818" y="392" width="8" height="1" fill="#000"/><rect x="818" y="400" width="8" height="1" fill="#000"/><rect x="818" y="408" width="26" height="1" fill="#000"/><rect x="818" y="416" width="8" height="1" fill="#000"/><rect x="818" y="424" width="8" height="1" fill="#000"/><rect x="818" y="431" width="8" height="1" fill="#000"/><rect x="818" y="439" width="8" height="1" fill="#000"/><rect x="818" y="447" width="8" height="1" fill="#000"/><rect x="818" y="455" width="8" height="1" fill="#000"/><rect x="818" y="463" width="8" height="1" fill="#000"/><rect x="818" y="471" width="8" height="1" fill="#000"/><rect x="818" y="478" width="8" height="1" fill="#000"/><rect x="818" y="486" width="11" height="1" fill="#000"/><rect x="818" y="494" width="8" height="1" fill="#000"/><rect x="818" y="502" width="8" height="1" fill="#000"/><rect x="818" y="510" width="8" height="1" fill="#000"/><rect x="818" y="517" width="8" height="1" fill="#000"/><rect x="818" y="525" width="8" height="1" fill="#000"/><rect x="818" y="533" width="8" height="1" fill="#000"/><rect x="818" y="541" width="8" height="1" fill="#000"/><rect x="818" y="549" width="8" height="1" fill="#000"/><rect x="818" y="556" width="8" height="1" fill="#000"/><rect x="818" y="564" width="26" height="1" fill="#000"/><rect x="818" y="572" width="8" height="1" fill="#000"/><rect x="818" y="580" width="8" height="1" fill="#000"/><rect x="818" y="588" width="8" height="1" fill="#000"/><rect x="818" y="595" width="8" height="1" fill="#000"/><rect x="818" y="603" width="8" height="1" fill="#000"/><rect x="818" y="611" width="8" height="1" fill="#000"/><rect x="818" y="619" width="8" height="1" fill="#000"/><rect x="818" y="627" width="8" height="1" fill="#000"/><rect x="818" y="635" width="8" height="1" fill="#000"/><rect x="818" y="642" width="11" height="1" fill="#000"/><rect x="818" y="650" width="8" height="1" fill="#000"/><rect x="818" y="658" width="8" height="1" fill="#000"/><rect x="818" y="666" width="8" height="1" fill="#000"/><rect x="818" y="674" width="8" height="1" fill="#000"/><rect x="818" y="681" width="8" height="1" fill="#000"/><rect x="818" y="689" width="8" height="1" fill="#000"/><rect x="818" y="697" width="8" height="1" fill="#000"/><rect x="818" y="705" width="8" height="1" fill="#000"/><rect x="818" y="713" width="8" height="1" fill="#000"/><rect x="818" y="720" width="26" height="1" fill="#000"/><rect x="818" y="728" width="8" height="1" fill="#000"/><rect x="818" y="736" width="8" height="1" fill="#000"/><rect x="818" y="744" width="8" height="1" fill="#000"/><rect x="818" y="752" width="8" height="1" fill="#000"/><rect x="818" y="759" width="8" height="1" fill="#000"/><rect x="818" y="767" width="8" height="1" fill="#000"/><rect x="818" y="775" width="8" height="1" fill="#000"/><polyline points="823,8 839.5,16.5" fill="none" stroke="#1a1aa0" stroke-width="1"/><polyline points="839.5,13 839.5,772.5 822,781.5" fill="none" stroke="#1a1aa0" stroke-width="1"/><rect x="860" y="1" width="80" height="781" fill="#525252"/><rect x="860" y="1" width="80" height="11" fill="#000"/><rect x="860" y="777" width="80" height="5" fill="#000"/><rect x="860" y="18" width="80" height="1" fill="#858585"/><rect x="860" y="96" width="80" height="1" fill="#858585"/><rect x="860" y="174" width="80" height="1" fill="#858585"/><rect x="860" y="252" width="80" height="1" fill="#858585"/><rect x="860" y="330" width="80" height="1" fill="#858585"/><rect x="860" y="408" width="80" height="1" fill="#858585"/><rect x="860" y="486" width="80" height="1" fill="#858585"/><rect x="860" y="564" width="80" height="1" fill="#858585"/><rect x="860" y="642" width="80" height="1" fill="#858585"/><rect x="860" y="720" width="80" height="1" fill="#858585"/><clipPath id="pc"><rect x="860" y="1" width="80" height="781"/></clipPath><g clip-path="url(#pc)"><path fill="#000" d="M860 24h10v3h-10zM860 29h14v1h-14zM860 30h12v1h-12zM860 31h9v2h-9zM860 35h13v1h-13zM860 37h11v1h-11zM860 38h0v1h-0zM860 39h8v1h-8zM860 40h8v1h-8zM860 41h19v1h-19zM860 42h1v2h-1zM860 45h14v1h-14zM860 48h16v3h-16zM860 52h11v2h-11zM860 55h2v2h-2zM860 57h14v2h-14zM860 59h11v3h-11zM860 62h1v2h-1zM860 66h12v1h-12zM860 68h12v2h-12zM860 72h11v2h-11zM860 75h0v2h-0zM860 77h2v2h-2zM860 81h10v1h-10zM860 83h5v2h-5zM860 86h0v2h-0zM860 88h7v3h-7zM860 93h10v2h-10zM860 96h16v2h-16zM860 99h18v2h-18zM860 101h15v3h-15zM860 104h9v1h-9zM860 105h12v1h-12zM860 108h8v1h-8zM860 110h9v2h-9zM860 113h8v2h-8zM860 115h3v2h-3zM860 118h2v1h-2zM860 121h13v3h-13zM860 125h8v3h-8zM860 129h6v2h-6zM860 132h9v2h-9zM860 135h10v1h-10zM860 137h10v2h-10zM860 140h13v2h-13zM860 143h6v2h-6zM860 146h12v2h-12zM860 149h9v2h-9zM860 153h8v1h-8zM860 155h10v2h-10zM860 158h4v1h-4zM860 160h5v2h-5zM860 163h12v1h-12zM860 164h15v1h-15zM860 165h1v1h-1zM860 166h10v2h-10zM860 169h7v1h-7zM860 172h9v1h-9zM860 173h14v2h-14zM860 176h11v1h-11zM860 179h15v2h-15zM860 182h10v3h-10zM860 187h17v2h-17zM860 191h9v3h-9zM860 194h7v1h-7zM860 195h5v3h-5zM860 198h14v2h-14zM860 200h13v2h-13zM860 204h2v2h-2zM860 207h15v2h-15zM860 209h6v3h-6zM860 213h2v2h-2zM860 216h11v2h-11zM860 219h11v1h-11zM860 220h15v2h-15zM860 223h11v1h-11zM860 225h10v1h-10zM860 227h8v3h-8zM860 232h12v1h-12zM860 234h11v3h-11zM860 239h7v1h-7zM860 242h2v1h-2zM860 245h10v2h-10zM860 247h9v1h-9zM860 249h6v3h-6zM860 253h8v2h-8zM860 255h5v2h-5zM860 257h12v2h-12zM860 260h13v2h-13zM860 263h14v2h-14zM860 266h9v3h-9zM860 270h10v1h-10zM860 271h9v2h-9zM860 274h0v1h-0zM860 275h5v3h-5zM860 278h4v2h-4zM860 281h11v1h-11zM860 282h13v3h-13zM860 287h7v1h-7zM860 290h3v3h-3zM860 295h12v1h-12zM860 297h11v2h-11zM860 300h12v1h-12zM860 303h13v2h-13zM860 307h9v3h-9zM860 311h9v2h-9zM860 313h13v1h-13zM860 314h8v1h-8zM860 315h4v3h-4zM860 319h9v1h-9zM860 321h12v2h-12zM860 325h1v2h-1zM860 328h10v1h-10zM860 330h4v1h-4zM860 332h12v2h-12zM860 335h8v2h-8zM860 338h12v2h-12zM860 342h7v1h-7zM860 345h0v1h-0zM860 346h3v1h-3zM860 348h14v2h-14zM860 352h11v2h-11zM860 355h3v1h-3zM860 357h15v1h-15zM860 358h13v2h-13zM860 360h5v2h-5zM860 363h3v2h-3zM860 366h5v1h-5zM860 368h8v2h-8zM860 370h11v1h-11zM860 373h8v1h-8zM860 375h2v2h-2zM860 378h1v1h-1zM860 379h5v1h-5zM860 382h10v2h-10zM860 385h0v2h-0zM860 389h3v3h-3zM860 392h3v2h-3zM860 394h8v1h-8zM860 395h7v2h-7zM860 398h6v2h-6zM860 400h5v1h-5zM860 402h9v1h-9zM860 403h10v1h-10zM860 404h16v3h-16zM860 408h13v3h-13zM860 412h0v3h-0zM860 416h6v2h-6zM860 418h2v3h-2zM860 422h4v2h-4zM860 424h11v2h-11zM860 428h12v1h-12zM860 430h13v1h-13zM860 432h2v1h-2zM860 434h13v3h-13zM860 437h1v3h-1zM860 440h10v1h-10zM860 442h0v3h-0zM860 446h13v1h-13zM860 447h14v1h-14zM860 450h2v1h-2zM860 452h11v2h-11zM860 456h11v1h-11zM860 458h4v2h-4zM860 462h10v1h-10zM860 463h9v1h-9zM860 465h13v2h-13zM860 468h13v3h-13zM860 472h11v1h-11zM860 474h1v3h-1zM860 478h11v1h-11zM860 479h11v2h-11zM860 482h8v2h-8zM860 485h11v3h-11zM860 488h9v2h-9zM860 490h13v3h-13zM860 494h12v1h-12zM860 495h13v1h-13zM860 497h12v1h-12zM860 499h5v3h-5zM860 502h10v2h-10zM860 506h9v1h-9zM860 507h8v2h-8zM860 511h6v2h-6zM860 514h17v2h-17zM860 518h10v1h-10zM860 520h11v2h-11zM860 522h10v2h-10zM860 524h11v1h-11zM860 526h6v2h-6zM860 528h0v2h-0zM860 531h9v2h-9zM860 535h0v3h-0zM860 538h9v2h-9zM860 542h10v2h-10zM860 544h11v3h-11zM860 549h9v2h-9zM860 553h12v2h-12zM860 555h9v1h-9zM860 556h3v1h-3zM860 557h8v1h-8zM860 560h7v2h-7zM860 563h3v2h-3zM860 566h9v1h-9zM860 568h9v1h-9zM860 571h11v3h-11zM860 575h10v1h-10zM860 577h3v1h-3zM860 578h13v3h-13zM860 582h10v1h-10zM860 585h11v2h-11zM860 587h10v1h-10zM860 589h11v3h-11zM860 593h6v1h-6zM860 596h0v3h-0zM860 599h4v1h-4zM860 601h5v1h-5zM860 602h12v1h-12zM860 605h9v2h-9zM860 608h12v1h-12zM860 610h5v2h-5zM860 613h3v1h-3zM860 615h13v1h-13zM860 617h9v1h-9zM860 619h7v2h-7zM860 621h16v1h-16zM860 622h10v2h-10zM860 624h9v3h-9zM860 627h14v3h-14zM860 631h0v2h-0zM860 633h10v1h-10zM860 635h11v2h-11zM860 637h13v1h-13zM860 638h10v2h-10zM860 641h16v3h-16zM860 644h9v1h-9zM860 647h16v2h-16zM860 651h0v3h-0zM860 655h13v2h-13zM860 658h4v1h-4zM860 659h14v2h-14zM860 661h15v2h-15zM860 664h10v1h-10zM860 665h14v1h-14zM860 666h10v1h-10zM860 667h10v1h-10zM860 669h9v2h-9zM860 672h1v3h-1zM860 676h10v1h-10zM860 677h16v1h-16zM860 680h10v1h-10zM860 682h12v2h-12zM860 686h4v3h-4zM860 689h0v2h-0zM860 692h0v1h-0zM860 693h16v2h-16zM860 697h11v1h-11zM860 698h9v2h-9zM860 700h9v3h-9zM860 704h14v3h-14zM860 709h20v3h-20zM860 712h7v3h-7zM860 715h13v2h-13zM860 717h11v3h-11zM860 722h11v2h-11zM860 725h9v1h-9zM860 726h2v3h-2zM860 729h11v2h-11zM860 732h2v2h-2zM860 734h11v2h-11zM860 736h5v2h-5zM860 738h0v3h-0zM860 742h13v3h-13zM860 747h13v2h-13zM860 749h9v1h-9zM860 752h10v2h-10zM860 754h5v3h-5zM860 759h5v1h-5zM860 761h6v2h-6zM860 763h2v2h-2zM860 766h10v2h-10zM860 770h11v2h-11zM860 772h13v1h-13zM860 774h0v1h-0zM860 776h1v2h-1z"/><rect x="860" y="32" width="24" height="2" fill="#0e0e48"/><rect x="860" y="92" width="18" height="2" fill="#0e0e48"/><rect x="860" y="119" width="18" height="2" fill="#0e0e48"/><rect x="860" y="190" width="22" height="2" fill="#0e0e48"/><rect x="860" y="37" width="6" height="2" fill="#0e0e48"/><rect x="860" y="379" width="20" height="2" fill="#0e0e48"/><rect x="860" y="397" width="18" height="2" fill="#0e0e48"/><rect x="860" y="409" width="20" height="2" fill="#0e0e48"/><rect x="860" y="439" width="10" height="2" fill="#0e0e48"/><rect x="860" y="527" width="20" height="2" fill="#0e0e48"/><rect x="860" y="540" width="20" height="2" fill="#0e0e48"/><rect x="860" y="545" width="16" height="2" fill="#0e0e48"/><rect x="860" y="564" width="20" height="2" fill="#0e0e48"/><rect x="860" y="639" width="20" height="2" fill="#0e0e48"/><rect x="860" y="663" width="18" height="2" fill="#0e0e48"/><rect x="860" y="664" width="18" height="2" fill="#0e0e48"/><rect x="860" y="665" width="16" height="2" fill="#0e0e48"/><polyline points="861,2 861,17 866.1,21.6 867.4,24.1 871.3,26.6 869.3,28.8 869.4,31.1 868.1,33.3 869.2,35.5 870.6,37.8 870.4,40.0 869.6,42.1 870.1,44.3 869.7,46.4 869.0,48.6 870.2,50.7 869.5,52.9 869.0,55.0 867.6,57.2 866.6,59.4 869.2,61.6 868.8,63.8 867.7,66.0 868.4,68.1 868.8,70.2 869.0,72.4 868.1,74.5 869.8,76.6 867.6,78.8 869.4,80.9 869.9,83.0 870.3,85.1 868.6,87.2 868.1,89.4 869.6,91.5 867.8,93.6 870.1,95.8 869.2,97.9 868.3,100.0 868.6,102.0 868.6,104.0 870.4,106.0 870.2,108.0 870.0,110.0 870.7,112.0 868.9,114.0 869.2,116.0 870.3,118.2 871.1,120.4 870.0,122.6 870.6,124.8 872.5,127.0 872.0,129.2 873.5,131.4 873.7,133.6 876.2,135.8 876.9,138.0 874.9,140.0 875.6,142.0 875.4,144.0 875.3,146.0 875.6,148.0 873.9,150.0 873.7,152.0 875.6,154.0 875.7,156.0 877.0,158.0 876.9,160.1 877.4,162.2 878.0,164.4 881.1,166.5 883.5,169.0 887.5,171.5 890.1,174.0 897.2,176.0 902.0,178.0 903.8,180.2 905.1,182.3 903.4,184.4 902.5,186.5 882.8,189.8 880.9,192.0 877.2,194.2 876.7,196.4 875.5,198.4 873.2,200.4 871.6,202.4 872.0,204.4 873.1,206.4 872.1,208.5 872.3,210.5 872.3,212.6 871.5,214.7 872.1,216.7 873.0,218.8 873.7,220.9 872.1,222.9 870.8,225.0 870.2,227.0 870.5,229.0 871.7,231.0 871.9,233.0 871.6,235.0 869.9,237.0 870.5,239.0 871.0,241.0 870.8,243.0 870.8,245.0 869.5,247.0 871.0,249.0 871.1,251.0 872.6,253.0 871.7,255.0 872.9,257.0 872.4,259.0 871.8,261.0 871.1,263.0 873.0,265.0 871.2,267.0 868.3,269.1 869.6,271.1 868.4,273.1 869.2,275.1 869.0,277.1 870.1,279.1 870.0,281.1 870.3,283.1 869.7,285.1 869.7,287.1 870.6,289.1 871.9,291.1 869.6,293.2 868.3,295.2 871.2,297.2 872.5,299.2 872.7,301.2 870.7,303.2 870.2,305.2 870.2,307.2 869.6,309.2 871.5,311.2 871.7,313.2 872.3,315.2 871.5,317.3 872.9,319.3 871.4,321.3 872.9,323.3 871.4,325.3 872.1,327.3 872.6,329.3 871.8,331.3 872.2,333.3 872.2,335.3 869.9,337.3 871.3,339.3 871.0,341.4 870.1,343.4 869.7,345.4 870.0,347.4 870.1,349.4 871.3,351.4 871.8,353.4 868.9,355.4 870.2,357.4 870.3,359.4 869.6,361.4 870.8,363.4 870.3,365.5 870.2,367.5 870.7,369.5 870.6,371.5 870.9,373.5 869.9,375.5 871.4,377.5 870.4,379.5 871.3,381.5 869.9,383.5 869.5,385.5 869.2,387.5 868.8,389.5 870.3,391.6 872.2,393.6 872.0,395.6 871.4,397.6 870.1,399.6 870.3,401.6 868.9,403.6 870.4,405.6 871.1,407.6 870.5,409.6 869.0,411.6 870.6,413.6 870.4,415.7 868.7,417.7 870.6,419.7 870.5,421.7 870.4,423.7 868.2,425.7 869.1,427.7 869.7,429.7 869.0,431.7 868.1,433.7 868.1,435.7 870.3,437.7 870.2,439.8 871.0,441.8 870.9,443.8 870.4,445.8 871.5,447.8 871.8,449.8 870.8,451.8 869.9,453.8 870.0,455.8 871.5,457.8 871.2,459.8 870.3,461.8 871.0,463.9 871.0,465.9 870.5,467.9 870.9,469.9 870.8,471.9 869.3,473.9 870.8,475.9 870.2,477.9 869.5,479.9 870.0,481.9 871.1,483.9 870.0,485.9 868.2,488.0 870.6,490.0 869.4,492.0 869.7,494.0 872.0,496.0 870.3,498.0 870.8,500.0 869.7,502.0 869.0,504.0 870.5,506.0 870.3,508.0 870.2,510.0 870.2,512.0 871.1,514.0 871.6,516.0 871.3,518.0 869.5,520.0 870.6,522.0 872.3,524.0 870.0,526.0 869.0,528.0 870.1,530.0 870.3,532.0 868.7,534.0 867.9,536.0 869.7,538.0 868.6,540.0 869.5,542.0 870.0,544.0 869.9,546.0 869.0,548.0 871.2,550.0 871.7,552.0 873.3,554.0 873.2,556.0 871.2,558.0 871.7,560.0 871.7,562.0 873.1,564.0 871.7,566.0 872.0,568.0 872.6,570.0 871.9,572.0 870.4,574.0 872.5,576.0 873.1,578.0 871.0,580.0 870.3,582.0 869.7,584.0 870.1,586.0 870.9,588.0 871.5,590.0 872.6,592.0 870.6,594.0 870.0,596.0 871.4,598.0 870.0,600.0 869.5,602.0 869.2,604.0 870.6,606.0 870.3,608.0 869.1,610.0 869.3,612.0 868.5,614.0 867.1,616.0 867.8,618.0 868.6,620.0 869.6,622.0 869.2,624.0 868.2,626.0 870.6,628.0 871.1,630.0 869.5,632.0 869.2,634.0 868.9,636.0 870.2,638.0 870.8,640.0 870.1,642.0 871.4,644.0 871.6,646.0 872.3,648.0 871.4,650.0 871.6,652.0 869.4,654.0 871.2,656.0 869.0,658.0 869.2,660.0 870.5,662.0 871.5,664.0 871.0,666.0 870.6,668.0 869.6,670.0 868.8,672.0 869.7,674.0 870.4,676.0 870.6,678.0 872.2,680.0 871.4,682.0 871.9,684.0 870.6,686.0 870.9,688.0 870.1,690.0 871.3,692.0 871.4,694.0 871.9,696.0 871.3,698.0 871.5,700.0 869.8,702.0 869.7,704.0 870.6,706.0 870.4,708.0 871.4,710.0 870.7,712.0 870.4,714.0 871.1,716.0 871.6,718.0 871.8,720.0 872.1,722.0 870.7,724.0 869.7,726.0 870.5,728.0 871.8,730.0 871.9,732.0 870.9,734.0 869.7,736.0 869.8,738.0 868.3,740.0 870.3,742.0 869.9,744.0 869.2,746.0 869.3,748.0 869.6,750.0 870.1,752.0 869.0,754.0 868.4,756.0 867.6,758.0 868.8,760.0 869.2,762.0 866.6,764.0 866.2,766.0 865.7,768.2 864.2,770.4 863.1,772.6 863.7,774.8 860.5,777.0" fill="none" stroke="#c83030" stroke-width="1.2"/><polyline points="860.0,9.0 872.3,12.5 874.3,14.6 880.8,16.6 878.2,18.7 886.1,20.9 886.0,23.0 887.9,25.3 885.2,27.7 888.5,30.0 884.6,32.0 889.1,34.0 885.4,36.0 890.2,38.0 886.9,40.0 890.9,42.2 886.6,44.3 892.4,46.5 890.0,48.7 891.4,50.8 890.1,53.0 892.9,55.2 890.5,57.3 893.6,59.5 888.8,61.7 893.4,63.8 890.5,66.0 891.8,68.0 890.6,70.0 894.1,72.0 890.6,74.0 895.0,76.0 891.3,78.2 897.6,80.5 894.9,82.8 897.4,85.0 894.2,87.2 898.4,89.4 896.1,91.6 899.3,93.8 898.5,96.0 902.3,98.3 898.3,100.7 901.4,103.0 900.2,105.2 903.6,107.5 903.8,109.8 908.0,112.0 904.6,114.0 907.5,116.0 904.1,118.0 907.5,120.0 905.6,122.0 909.1,124.0 904.4,126.0 909.9,128.0 907.2,130.0 910.7,132.0 908.7,134.0 911.3,136.0 909.1,138.2 912.3,140.5 911.6,142.8 911.6,145.0 911.3,147.0 913.4,149.0 912.2,151.0 915.6,153.0 914.8,155.0 919.2,157.0 917.7,159.0 922.8,161.0 919.3,163.0 925.8,165.0 926.1,167.0 931.9,169.0 933.2,171.2 940.0,173.5" fill="none" stroke="#48f048" stroke-width="1.1"/><polyline points="938.8,188.0 931.8,189.8 927.0,192.0 930.0,194.2 923.7,196.4 923.2,198.6 919.7,200.8 921.1,203.0 915.8,205.3 916.8,207.7 913.0,210.0 918.2,212.4 913.3,214.7 915.6,217.0 910.5,219.2 911.1,221.5 909.3,223.7 909.9,226.0 906.4,228.0 910.2,230.0 904.3,232.0 906.8,234.0 902.8,236.0 905.1,238.0 904.7,240.0 906.9,242.0 901.1,244.0 904.4,246.0 901.1,248.0 903.5,250.0 900.5,252.0 903.6,254.0 901.4,256.0 901.4,258.0 899.8,260.0 900.3,262.0 899.4,264.0 902.1,266.0 898.8,268.0 902.3,270.0 896.8,272.2 901.8,274.3 895.8,276.5 901.0,278.7 896.9,280.8 898.9,283.0 895.4,285.1 897.1,287.3 894.3,289.4 897.0,291.6 892.0,293.7 895.7,295.9 893.5,298.0 894.0,300.1 892.7,302.3 893.6,304.4 891.5,306.6 895.6,308.7 890.4,310.9 893.4,313.0 891.5,315.1 893.4,317.2 889.2,319.4 894.3,321.5 892.0,323.6 892.9,325.8 891.5,327.9 893.0,330.0 890.1,332.0 893.2,334.0 890.0,336.0 893.5,338.0 890.0,340.0 893.0,342.0 890.5,344.0 892.2,346.0 887.9,348.0 890.8,350.0 887.7,352.0 890.4,354.0 885.1,356.0 890.8,358.0 885.1,360.0 887.9,362.0 888.4,364.0 888.6,366.0 884.9,368.0 889.1,370.0 883.5,372.0 886.2,374.0 883.9,376.0 888.2,378.0 883.6,380.0 886.2,382.0 882.7,384.0 887.3,386.0 884.2,388.0 884.9,390.0 881.8,392.0 886.1,394.0 882.7,396.0 887.3,398.0 884.6,400.0 887.2,402.0 883.8,404.0 886.8,406.0 883.1,408.0 887.1,410.0 884.7,412.0 889.3,414.0 883.8,416.0 886.9,418.0 886.0,420.0 888.9,422.0 884.7,424.0 888.6,426.0 884.7,428.0 887.5,430.0 882.8,432.0 884.7,434.0 883.2,436.0 887.9,438.0 884.8,440.0 888.2,442.0 882.0,444.0 888.0,446.0 884.7,448.0 887.6,450.0 882.7,452.0 887.0,454.0 883.6,456.0 884.6,458.0 882.7,460.0 884.7,462.0 882.5,464.0 885.9,466.0 884.3,468.0 886.7,470.0 884.3,472.0 888.2,474.0 885.0,476.0 887.8,478.0 884.0,480.0 889.2,482.0 884.1,484.0 886.0,486.0 883.2,488.0 887.6,490.0 884.8,492.0 885.4,494.0 881.6,496.0 885.4,498.0 881.8,500.0 886.9,502.0 885.2,504.0 886.2,506.0 882.1,508.0 888.9,510.0 883.1,512.0 886.9,514.0 885.4,516.0 887.6,518.0 884.6,520.0 887.7,522.0 884.6,524.0 887.7,526.0 884.7,528.0 887.3,530.0 886.0,532.0 889.7,534.0 887.2,536.0 887.3,538.0 885.4,540.0 889.9,542.0 884.0,544.0 886.7,546.0 885.2,548.0 885.6,550.0 885.3,552.0 888.9,554.0 883.5,556.0 889.3,558.0 883.3,560.0 886.7,562.0 881.6,564.0 885.5,566.0 881.3,568.0 885.7,570.0 882.4,572.0 886.2,574.0 882.1,576.0 886.6,578.0 885.1,580.0 888.4,582.0 887.1,584.0 888.0,586.0 887.3,588.0 888.2,590.0 884.7,592.0 888.1,594.0 884.0,596.0 889.4,598.0 883.0,600.0 888.3,602.0 884.4,604.0 888.5,606.0 884.5,608.0 885.2,610.0 882.3,612.0 886.7,614.0 882.6,616.0 887.2,618.0 884.2,620.0 888.1,622.0 883.1,624.0 885.8,626.0 885.0,628.0 887.5,630.0 882.8,632.0 885.6,634.0 882.8,636.0 888.3,638.0 882.6,640.0 887.8,642.0 882.9,644.0 887.4,646.0 883.3,648.0 885.6,650.0 884.2,652.0 888.1,654.0 884.7,656.0 885.5,658.0 883.3,660.0 887.6,662.0 884.1,664.0 885.9,666.0 883.2,668.0 884.3,670.0 882.9,672.0 886.7,674.0 884.1,676.0 887.8,678.0 884.2,680.0 887.6,682.0 885.7,684.0 889.3,686.0 887.0,688.0 890.8,690.0 887.0,692.0 890.4,694.0 885.1,696.0 885.5,698.0 881.9,700.0 886.3,702.0 885.5,704.0 890.2,706.0 884.8,708.0 890.2,710.0 887.8,712.0 890.7,714.0 888.6,716.0 889.4,718.0 887.8,720.0 891.3,722.0 884.4,724.0 887.2,726.0 884.1,728.0 890.5,730.0 885.5,732.0 889.8,734.0 886.4,736.0 886.0,738.0 884.4,740.0 888.0,742.1 882.8,744.2 888.3,746.3 885.4,748.4 886.5,750.6 883.1,752.7 885.5,754.8 880.7,756.9 884.8,759.0 881.4,761.3 882.9,763.5 880.0,765.8 885.0,768.1 879.6,770.3 881.4,772.6 874.2,774.7 873.5,776.8 867.7,778.9 864.6,781.0" fill="none" stroke="#48f048" stroke-width="1.1"/><path d="M934,781 Q936,776 940,775" fill="none" stroke="#48f048" stroke-width="1.1"/><circle cx="899.5" cy="15.5" r="3.5" fill="#000" stroke="#b83030" stroke-width="0.9"/></g></svg><div class="mono" style="position:absolute;left:4.4px;top:5px;font-size:11.67px;line-height:14px;color:#000;white-space:pre">Screen Capture Time: 2025-12-03 05:21:18 UTC
143048017 Hz
Config = V8</div><div class="sans" style="position:absolute;left:5px;top:79.7px;font-size:11px;line-height:12px;color:#000;white-space:pre">-80 dB -60</div><div class="sans" style="position:absolute;left:84px;top:79.7px;font-size:11px;line-height:12px;color:#000;white-space:pre">-40</div><div style="position:absolute;left:105px;top:760px;width:1px;height:20px;background:#fff"></div><div class="sans" style="position:absolute;left:93.2px;top:778.6px;font-size:11px;line-height:11px;color:#fff;white-space:pre;transform-origin:0 0;transform:rotate(-90deg)">2025-12-03 05:20:10</div><div style="position:absolute;left:220px;top:760px;width:1px;height:20px;background:#fff"></div><div class="sans" style="position:absolute;left:208.2px;top:778.6px;font-size:11px;line-height:11px;color:#fff;white-space:pre;transform-origin:0 0;transform:rotate(-90deg)">2025-12-03 05:20:20</div><div style="position:absolute;left:334px;top:760px;width:1px;height:20px;background:#fff"></div><div class="sans" style="position:absolute;left:322.2px;top:778.6px;font-size:11px;line-height:11px;color:#fff;white-space:pre;transform-origin:0 0;transform:rotate(-90deg)">2025-12-03 05:20:30</div><div style="position:absolute;left:445px;top:760px;width:1px;height:20px;background:#fff"></div><div class="sans" style="position:absolute;left:433.2px;top:778.6px;font-size:11px;line-height:11px;color:#fff;white-space:pre;transform-origin:0 0;transform:rotate(-90deg)">2025-12-03 05:20:40</div><div style="position:absolute;left:548px;top:760px;width:1px;height:20px;background:#fff"></div><div class="sans" style="position:absolute;left:536.2px;top:778.6px;font-size:11px;line-height:11px;color:#fff;white-space:pre;transform-origin:0 0;transform:rotate(-90deg)">2025-12-03 05:20:50</div><div style="position:absolute;left:663px;top:760px;width:1px;height:20px;background:#fff"></div><div class="sans" style="position:absolute;left:651.2px;top:778.6px;font-size:11px;line-height:11px;color:#fff;white-space:pre;transform-origin:0 0;transform:rotate(-90deg)">2025-12-03 05:21:00</div><div style="position:absolute;left:777px;top:760px;width:1px;height:20px;background:#fff"></div><div class="sans" style="position:absolute;left:765.2px;top:778.6px;font-size:11px;line-height:11px;color:#fff;white-space:pre;transform-origin:0 0;transform:rotate(-90deg)">2025-12-03 05:21:10</div><div class="mono" style="position:absolute;left:856.5px;top:96.2px;width:0;height:0"><div style="position:absolute;left:0;top:0;font-size:11.3px;line-height:11px;color:#505050;white-space:pre;transform-origin:0 0;transform:rotate(90deg) translate(-50%,0) scaleY(0.88)">143050400</div></div><div class="mono" style="position:absolute;left:856.5px;top:252.2px;width:0;height:0"><div style="position:absolute;left:0;top:0;font-size:11.3px;line-height:11px;color:#505050;white-space:pre;transform-origin:0 0;transform:rotate(90deg) translate(-50%,0) scaleY(0.88)">143050200</div></div><div class="mono" style="position:absolute;left:856.5px;top:408.2px;width:0;height:0"><div style="position:absolute;left:0;top:0;font-size:11.3px;line-height:11px;color:#505050;white-space:pre;transform-origin:0 0;transform:rotate(90deg) translate(-50%,0) scaleY(0.88)">143050000</div></div><div class="mono" style="position:absolute;left:856.5px;top:564.2px;width:0;height:0"><div style="position:absolute;left:0;top:0;font-size:11.3px;line-height:11px;color:#505050;white-space:pre;transform-origin:0 0;transform:rotate(90deg) translate(-50%,0) scaleY(0.88)">143049800</div></div><div class="mono" style="position:absolute;left:856.5px;top:720.2px;width:0;height:0"><div style="position:absolute;left:0;top:0;font-size:11.3px;line-height:11px;color:#505050;white-space:pre;transform-origin:0 0;transform:rotate(90deg) translate(-50%,0) scaleY(0.88)">143049600 Hz</div></div></body></html>
